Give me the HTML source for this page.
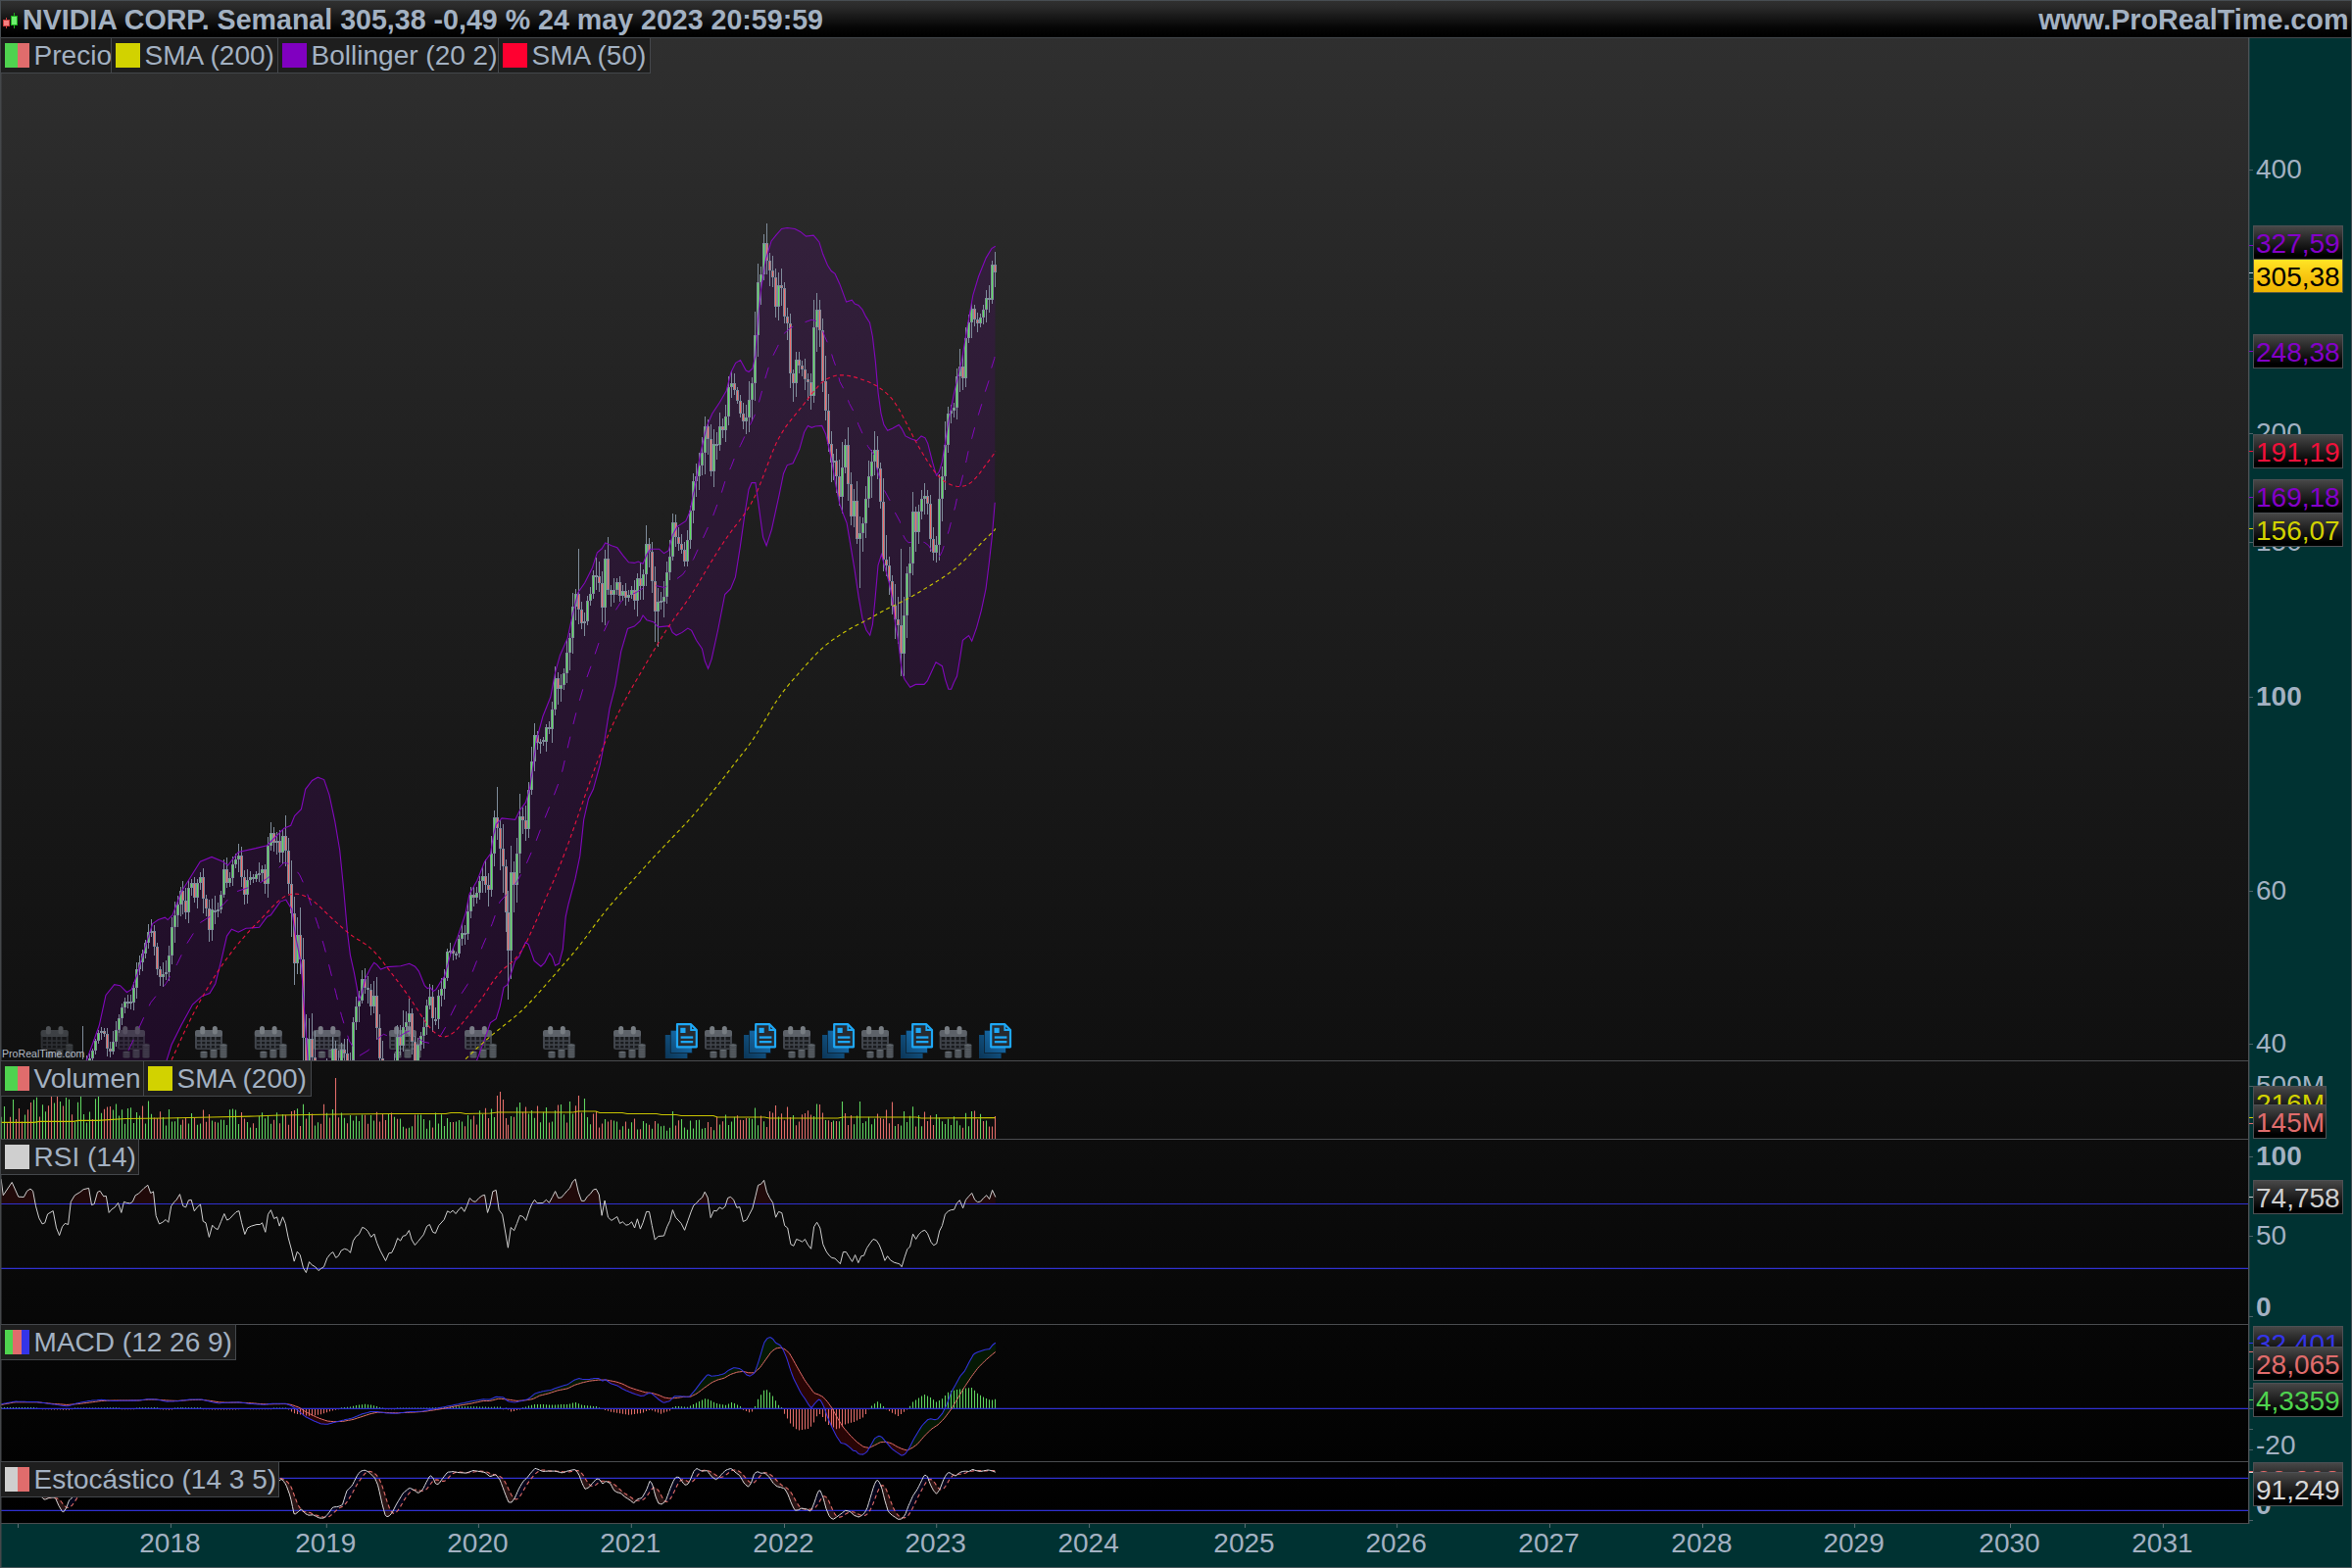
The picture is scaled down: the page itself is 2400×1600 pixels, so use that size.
<!DOCTYPE html>
<html><head><meta charset="utf-8"><title>NVIDIA CORP. Semanal</title>
<style>
html,body{margin:0;padding:0;background:#000;}
body{width:2400px;height:1600px;position:relative;overflow:hidden;font-family:"Liberation Sans",sans-serif;font-size:28px;color:#a3b1c2;}
div{position:absolute;box-sizing:border-box;white-space:nowrap;}
#title{left:0;top:0;width:2400px;height:38px;background:linear-gradient(#313131 0px,#2a2a2a 7px,#171717 18px,#060606 28px,#000 36px);font-weight:bold;line-height:38px;}
#plot{left:0;top:38px;width:2295px;height:1517px;background:linear-gradient(#2f2f2f,#1f1f1f 32%,#101010 68%,#000 100%);}
#yaxis{left:2295px;top:38px;width:105px;height:1562px;background:#003232;}
#xaxis{left:0;top:1555px;width:2400px;height:45px;background:#003232;}
.lg{height:37px;background:#1e1e1e;border:1px solid #44474b;line-height:34px;}
.lg i{position:absolute;top:5px;width:25px;height:25px;display:block;}
.lg span{position:absolute;top:1px;}
.ax{left:2302px;line-height:30px;height:30px;}
.bx{left:2299px;width:92px;height:35px;border:1px solid #4d5054;background:linear-gradient(#474747,#2a2a2a 35%,#000 88%);line-height:36px;padding-left:2px;}
.tk{left:2295px;width:5px;height:1.2px;}
.yr{top:1558px;width:80px;text-align:center;line-height:34px;}
</style></head><body>
<div id="plot"></div><div id="yaxis"></div><div id="xaxis"></div>
<div id="title"><span style="position:absolute;left:23px;top:1px;font-size:28.6px">NVIDIA CORP. Semanal 305,38 -0,49 % 24 may 2023 20:59:59</span><span style="position:absolute;right:3.5px;top:1px;font-size:28.75px">www.ProRealTime.com</span></div>
<svg width="24" height="34" style="position:absolute;left:0;top:0"><path d="M6.5 18V29" stroke="#c83c3c" stroke-width="1"/><path d="M14.5 13V29" stroke="#1cac1c" stroke-width="1"/><rect x="3.5" y="20.5" width="6" height="6" fill="#f58080" stroke="#c83c3c" stroke-width="1"/><rect x="11.5" y="16.5" width="6" height="9" fill="#6ef06e" stroke="#1cac1c" stroke-width="1"/></svg>
<div style="left:0;top:0;width:2400px;height:1px;background:#474d52"></div><div style="left:0;top:0;width:1px;height:38px;background:#474d52"></div><div style="left:2399px;top:0;width:1px;height:1600px;background:#474d52"></div><div style="left:0;top:38px;width:2400px;height:1px;background:#42474b"></div>
<svg width="2400" height="1600" viewBox="0 0 2400 1600" style="position:absolute;left:0;top:0"><defs>
<clipPath id="cm"><rect x="1" y="39" width="2293" height="1043"/></clipPath>
<clipPath id="cs"><rect x="1" y="1492" width="2293" height="62"/></clipPath>
<g id="cal">
<rect x="0" y="4" width="28" height="20" rx="2.5" fill="#4a4f57"/>
<rect x="0" y="4" width="28" height="7" rx="2.5" fill="#6b7179"/>
<rect x="2" y="11" width="24" height="11.5" fill="#1b1d21"/>
<g fill="#4a4f57"><rect x="2" y="14.3" width="24" height="1.6"/><rect x="2" y="18.3" width="24" height="1.6"/>
<rect x="5.6" y="11" width="1.6" height="11.5"/><rect x="10.4" y="11" width="1.6" height="11.5"/><rect x="15.2" y="11" width="1.6" height="11.5"/><rect x="20" y="11" width="1.6" height="11.5"/></g>
<rect x="5.2" y="0" width="5" height="8.5" rx="2.5" fill="#8a9097"/><rect x="17.8" y="0" width="5" height="8.5" rx="2.5" fill="#8a9097"/>
<g fill="#70777e" stroke="#33373c" stroke-width="0.6">
<ellipse cx="9" cy="31" rx="3.8" ry="1.6"/><ellipse cx="9" cy="29" rx="3.8" ry="1.6"/><ellipse cx="9" cy="27" rx="3.8" ry="1.6"/>
<ellipse cx="19" cy="31" rx="3.8" ry="1.6"/><ellipse cx="19" cy="29" rx="3.8" ry="1.6"/><ellipse cx="19" cy="27" rx="3.8" ry="1.6"/><ellipse cx="19" cy="25" rx="3.8" ry="1.6"/>
<ellipse cx="29" cy="31" rx="3.8" ry="1.6"/><ellipse cx="29" cy="29" rx="3.8" ry="1.6"/><ellipse cx="29" cy="27" rx="3.8" ry="1.6"/><ellipse cx="29" cy="25" rx="3.8" ry="1.6"/><ellipse cx="29" cy="23" rx="3.8" ry="1.6"/><ellipse cx="29" cy="21" rx="3.8" ry="1.6"/><ellipse cx="29" cy="19.5" rx="3.8" ry="1.6"/>
</g></g>
<linearGradient id="dg1" x1="1" y1="0" x2="0" y2="1"><stop offset="0" stop-color="#145f96"/><stop offset="1" stop-color="#0b3556"/></linearGradient>
<linearGradient id="dg2" x1="1" y1="0" x2="0" y2="1"><stop offset="0" stop-color="#1a78bd"/><stop offset="1" stop-color="#104b78"/></linearGradient>
<g id="doc">
<rect x="0" y="12" width="22.6" height="24" fill="url(#dg1)"/>
<rect x="5.4" y="7.3" width="22" height="23.3" fill="url(#dg2)" stroke="#0c1a26" stroke-width="0.7"/>
<path d="M12.2 1.2 H26.3 L32 7 V24.3 H12.2 Z" fill="#262a30" stroke="#1ea7f5" stroke-width="2.2" stroke-linejoin="round"/>
<path d="M26.3 1.2 V7 H32" fill="none" stroke="#1ea7f5" stroke-width="1.8"/>
<rect x="15.5" y="4.8" width="5.2" height="5.2" fill="#1ea7f5"/>
<rect x="15.8" y="13.4" width="12.6" height="2.3" fill="#1ea7f5"/><rect x="15.8" y="18" width="12.6" height="2.3" fill="#1ea7f5"/>
</g>
</defs>
<g clip-path="url(#cm)">
<path d="M60.0 1110.0 L75.0 1095.0 L88.5 1081.6 L101.2 1046.5 L108.0 1015.4 L116.7 1004.7 L122.6 1005.7 L129.4 1012.5 L134.2 1009.6 L140.1 994.0 L147.9 966.8 L155.6 942.5 L161.5 938.6 L168.3 936.2 L171.2 938.6 L176.1 933.7 L184.8 910.4 L194.6 894.8 L204.3 879.2 L216.0 874.4 L227.6 879.2 L232.5 883.1 L243.2 869.5 L260.7 865.6 L272.4 862.7 L282.1 853.0 L289.9 845.2 L296.7 842.3 L300.6 832.5 L307.4 825.7 L311.7 805.3 L318.5 796.5 L324.3 793.2 L330.7 795.6 L336.0 811.1 L341.8 838.4 L346.7 867.5 L350.6 906.5 L354.5 951.2 L357.4 974.6 L361.3 992.1 L364.2 1007.6 L366.1 1021.2 L369.1 1013.5 L373.0 997.9 L377.8 988.2 L381.7 982.3 L384.6 984.3 L388.5 989.1 L395.3 986.6 L408.9 985.8 L417.7 983.3 L423.5 986.2 L427.4 991.1 L433.3 1005.7 L436.2 1008.6 L439.1 1007.6 L442.0 1011.5 L444.9 1009.6 L450.8 999.8 L453.7 996.0 L459.5 974.6 L467.3 955.1 L475.1 931.8 L479.0 912.3 L486.8 898.7 L494.6 879.2 L500.4 871.4 L503.3 853.9 L506.2 841.3 L512.1 834.9 L519.8 835.8 L525.7 836.4 L530.5 826.7 L536.4 818.9 L540.3 805.3 L544.2 780.0 L547.1 756.3 L553.9 731.0 L561.7 711.5 L566.6 686.2 L571.4 668.7 L579.2 651.2 L584.1 627.9 L589.9 604.5 L596.7 594.8 L604.5 579.2 L609.4 563.7 L614.2 559.8 L617.7 553.9 L624.0 556.8 L629.8 558.8 L635.6 566.6 L641.5 573.8 L647.3 574.4 L651.2 573.0 L656.1 575.3 L660.0 565.6 L663.9 560.2 L672.6 560.2 L677.5 564.6 L682.3 561.7 L686.2 546.1 L691.1 537.4 L699.8 531.6 L703.7 522.8 L707.6 503.3 L708.6 500.0 L714.4 464.1 L721.0 435.4 L726.8 422.0 L734.4 410.5 L741.1 399.0 L745.9 379.9 L750.7 370.3 L755.5 367.4 L761.2 378.0 L764.1 379.5 L767.9 376.0 L770.8 362.6 L773.7 322.5 L776.5 295.7 L781.3 265.1 L787.1 245.9 L791.8 240.2 L797.6 233.5 L803.3 232.5 L811.0 233.5 L816.7 236.4 L822.5 241.1 L830.1 240.2 L835.9 246.9 L839.7 259.3 L844.5 270.8 L848.3 276.5 L852.1 279.4 L856.9 289.9 L863.6 308.1 L869.3 306.2 L872.2 310.0 L876.0 311.4 L879.9 315.8 L883.7 323.4 L887.5 329.2 L890.4 343.5 L893.3 368.4 L896.1 400.9 L899.0 422.0 L901.9 433.4 L905.7 439.2 L910.5 437.3 L917.2 433.4 L920.1 437.3 L923.9 444.9 L929.6 447.8 L935.4 449.7 L940.1 444.9 L944.0 446.8 L946.8 452.6 L951.6 471.7 L955.5 485.1 L958.3 481.3 L961.2 471.7 L964.1 454.5 L967.9 429.6 L973.6 400.9 L981.3 368.4 L987.0 333.9 L992.8 301.4 L998.5 282.3 L1006.2 263.1 L1011.9 253.6 L1015.7 251.3 L1015.2 512.7 L1012.4 546.6 L1009.2 575.3 L1006.0 600.8 L1001.3 623.1 L996.5 640.7 L991.7 654.2 L988.5 648.6 L982.4 653.4 L979.7 671.0 L976.5 690.1 L973.3 696.5 L970.6 703.2 L967.8 703.2 L964.6 693.3 L961.4 679.7 L955.0 675.7 L946.2 694.9 L943.0 698.4 L934.3 698.4 L928.7 701.3 L923.1 693.3 L920.7 686.9 L919.1 675.7 L916.7 655.0 L913.5 635.9 L910.4 610.4 L907.2 594.4 L902.4 576.9 L899.5 565.7 L896.0 576.9 L892.8 613.5 L890.4 637.5 L887.7 648.3 L884.0 643.0 L880.0 631.1 L876.1 608.8 L872.1 581.6 L867.3 552.9 L864.1 533.8 L860.9 525.8 L856.9 514.7 L852.9 495.5 L848.3 467.9 L842.6 443.0 L838.7 434.4 L832.0 435.0 L828.2 436.3 L824.4 434.4 L820.6 441.1 L815.8 458.3 L809.1 472.7 L803.3 474.6 L799.5 483.2 L795.4 503.6 L787.4 540.3 L782.1 556.8 L778.6 548.1 L773.8 513.1 L770.9 492.6 L767.0 492.6 L764.0 499.5 L760.2 522.8 L755.3 557.8 L750.4 588.9 L745.6 600.6 L739.7 606.5 L732.9 641.5 L726.1 672.6 L722.6 682.3 L719.3 674.6 L716.4 661.9 L710.5 653.2 L705.7 643.4 L701.8 641.1 L696.0 645.4 L690.1 648.3 L686.2 645.4 L683.3 638.6 L671.6 639.9 L666.8 634.7 L660.0 632.7 L656.1 627.9 L653.2 633.7 L647.3 639.1 L640.5 641.5 L633.7 664.8 L627.9 699.8 L622.0 723.2 L616.2 760.2 L612.3 780.0 L605.4 805.3 L600.6 815.0 L595.7 836.4 L591.8 873.4 L587.0 896.7 L580.2 922.0 L577.2 935.6 L574.3 968.7 L570.4 983.3 L566.5 985.3 L563.6 976.5 L560.7 972.6 L555.8 982.3 L551.9 986.2 L545.1 980.4 L539.3 963.9 L536.4 961.3 L529.6 976.5 L525.7 980.4 L517.9 1004.7 L514.0 1007.6 L510.1 1027.1 L506.2 1039.7 L500.4 1043.6 L494.6 1060.2 L486.8 1081.6 L460.0 1120.0 L420.0 1135.0 L380.0 1150.0 L345.0 1160.0 L320.0 1130.0 L314.2 1081.6 L311.3 1042.6 L307.4 984.3 L301.6 955.1 L297.7 927.9 L291.8 918.1 L286.0 920.1 L276.3 933.7 L272.4 935.6 L264.6 946.3 L251.0 947.3 L243.2 951.2 L236.4 948.3 L231.5 955.1 L225.7 980.4 L219.8 1003.7 L214.0 1013.5 L206.2 1016.4 L196.5 1025.1 L184.8 1046.5 L175.1 1066.0 L170.2 1081.6 L160.0 1110.0 L120.0 1160.0 L60.0 1200.0Z" fill="rgba(95,0,135,0.2)" stroke="none"/>
<use href="#cal" x="41.7" y="1047" opacity="0.50"/>
<use href="#cal" x="120.0" y="1047" opacity="0.50"/>
<use href="#cal" x="199.0" y="1047" opacity="0.85"/>
<use href="#cal" x="259.8" y="1047" opacity="0.85"/>
<use href="#cal" x="319.5" y="1047" opacity="0.85"/>
<use href="#cal" x="397.0" y="1047" opacity="0.85"/>
<use href="#cal" x="474.0" y="1047" opacity="0.85"/>
<use href="#cal" x="554.0" y="1047" opacity="0.85"/>
<use href="#cal" x="626.0" y="1047" opacity="0.85"/>
<use href="#cal" x="719.0" y="1047" opacity="0.85"/>
<use href="#cal" x="799.0" y="1047" opacity="0.85"/>
<use href="#cal" x="879.0" y="1047" opacity="0.85"/>
<use href="#cal" x="958.7" y="1047" opacity="0.85"/>
<use href="#doc" x="678.8" y="1044"/>
<use href="#doc" x="759.0" y="1044"/>
<use href="#doc" x="839.0" y="1044"/>
<use href="#doc" x="919.0" y="1044"/>
<use href="#doc" x="999.0" y="1044"/>
<path d="M85.5 1085V1096M88.5 1077V1091M91.5 1075V1087M94.5 1070V1084M97.5 1060V1076M100.5 1051V1065M103.5 1048V1061M106.5 1049V1058M109.5 1049V1078M112.5 1063V1079M115.5 1052V1076M118.5 1042V1068M121.5 1035V1054M124.5 1024V1046M127.5 1018V1034M130.5 1015V1029M133.5 1015V1030M136.5 1002V1031M139.5 982V1019M142.5 975V995M145.5 969V991M148.5 959V978M151.5 943V968M154.5 938V956M157.5 944V975M160.5 962V995M163.5 986V1006M166.5 982V1007M169.5 980V1000M172.5 965V1001M175.5 936V984M178.5 920V962M181.5 914V946M184.5 905V935M186.5 899V933M189.5 906V938M192.5 898V942M195.5 897V914M198.5 895V921M201.5 897V927M204.5 890V908M207.5 886V932M210.5 913V935M213.5 918V961M216.5 917V960M219.5 914V943M222.5 921V936M225.5 909V932M228.5 877V916M231.5 875V906M234.5 890V905M237.5 874V904M240.5 871V886M243.5 861V890M246.5 864V905M249.5 888V923M252.5 887V922M255.5 889V903M258.5 892V901M261.5 889V900M264.5 880V900M267.5 883V900M270.5 882V912M273.5 854V916M276.5 839V868M279.5 844V869M282.5 849V872M285.5 847V880M288.5 847V882M291.5 832V884M294.5 855V912M297.5 878V956M300.5 915V1005M303.5 936V994M306.5 926V994M309.5 957V1087M312.5 1035V1119M315.5 1039V1114M318.5 1034V1097M321.5 1052V1143M324.5 1093V1145M327.5 1089V1135M330.5 1096V1134M333.5 1080V1114M336.5 1087V1102M339.5 1058V1101M342.5 1062V1096M345.5 1072V1101M348.5 1064V1094M351.5 1060V1083M354.5 1060V1103M357.5 1074V1104M360.5 1038V1088M363.5 1017V1051M366.5 1011V1043M369.5 990V1024M372.5 988V1014M375.5 996V1024M378.5 1004V1036M381.5 1001V1034M384.5 997V1061M387.5 1035V1086M390.5 1062V1112M393.5 1087V1123M396.5 1098V1115M399.5 1087V1116M402.5 1075V1122M405.5 1046V1099M408.5 1046V1077M411.5 1031V1073M414.5 1032V1052M417.5 1019V1057M420.5 1029V1076M423.5 1057V1099M426.5 1059V1100M429.5 1053V1072M432.5 1038V1070M435.5 1020V1056M438.5 1004V1030M441.5 1005V1053M444.5 1028V1046M447.5 1010V1050M450.5 998V1027M453.5 989V1020M456.5 968V1001M459.5 962V976M462.5 967V980M465.5 971V979M468.5 954V977M471.5 942V965M474.5 944V964M477.5 920V959M480.5 905V937M483.5 905V925M486.5 905V922M489.5 894V918M492.5 884V911M495.5 877V911M498.5 891V925M501.5 853V915M504.5 827V884M507.5 803V857M510.5 837V888M513.5 841V911M516.5 877V951M518.5 909V1020M521.5 863V999M524.5 879V931M527.5 855V921M530.5 810V891M533.5 824V851M536.5 822V858M539.5 798V855M542.5 762V811M545.5 738V787M548.5 746V765M551.5 754V769M554.5 752V761M557.5 739V767M560.5 736V749M563.5 716V758M566.5 680V730M569.5 686V719M572.5 688V716M575.5 682V704M578.5 653V697M581.5 646V684M584.5 605V667M587.5 601V633M590.5 560V637M593.5 614V642M596.5 625V649M599.5 608V638M602.5 599V618M605.5 582V611M608.5 569V602M611.5 573V604M614.5 583V635M617.5 561V638M620.5 548V607M623.5 597V619M626.5 590V615M629.5 590V607M632.5 588V614M635.5 597V613M638.5 595V618M641.5 602V614M644.5 598V611M647.5 592V622M650.5 585V629M653.5 574V612M656.5 581V612M659.5 536V598M662.5 549V579M665.5 553V605M668.5 578V655M671.5 600V660M674.5 604V622M677.5 593V630M680.5 573V616M683.5 551V592M686.5 524V572M689.5 525V558M692.5 538V562M695.5 545V565M698.5 553V578M701.5 541V578M704.5 516V560M707.5 483V534M710.5 473V507M713.5 462V500M716.5 446V485M719.5 425V484M722.5 428V464M725.5 433V486M728.5 438V497M731.5 441V469M734.5 421V460M737.5 427V447M740.5 413V451M743.5 384V434M746.5 378V406M749.5 381V403M752.5 395V412M755.5 403V426M758.5 411V438M761.5 413V443M764.5 389V441M767.5 385V430M770.5 318V409M773.5 269V364M776.5 272V311M779.5 239V286M782.5 228V280M785.5 258V292M788.5 261V293M791.5 274V324M794.5 278V327M797.5 274V312M800.5 288V330M803.5 314V347M806.5 320V396M809.5 377V410M812.5 359V405M815.5 359V381M818.5 368V384M821.5 366V398M824.5 381V409M827.5 381V418M830.5 306V411M833.5 299V359M836.5 306V354M839.5 325V400M842.5 363V429M845.5 402V461M848.5 440V492M850.5 463V490M853.5 458V503M856.5 469V516M859.5 451V524M862.5 448V483M865.5 436V511M868.5 482V536M871.5 499V538M874.5 491V555M877.5 527V600M880.5 528V563M883.5 496V549M886.5 470V518M889.5 459V508M892.5 440V485M895.5 445V489M898.5 472V519M901.5 488V583M904.5 546V588M907.5 568V607M910.5 587V627M913.5 596V652M916.5 609V657M919.5 560V690M922.5 609V690M925.5 578V651M928.5 558V609M931.5 502V587M934.5 517V563M937.5 515V555M940.5 500V530M943.5 493V525M946.5 500V525M949.5 505V563M952.5 538V572M955.5 547V574M958.5 484V572M961.5 476V532M964.5 430V500M967.5 415V462M970.5 413V432M973.5 411V426M976.5 376V428M979.5 356V400M982.5 362V398M985.5 334V395M988.5 321V350M991.5 308V345M994.5 311V333M997.5 319V339M1000.5 320V334M1003.5 311V331M1006.5 296V329M1009.5 291V319M1012.5 266V310M1015.5 257V293M84.5 1047V1081" stroke="#7f8c9a" stroke-width="1" fill="none"/>
<path d="M84.0 1088h3V1093h-3ZM87.0 1083h3V1088h-3ZM90.0 1080h3V1083h-3ZM93.0 1072h3V1080h-3ZM96.0 1062h3V1072h-3ZM99.0 1054h3V1062h-3ZM102.0 1052h3V1054h-3ZM105.0 1052h3V1055h-3ZM108.0 1055h3V1070h-3ZM111.0 1070h3V1073h-3ZM114.0 1063h3V1073h-3ZM117.0 1051h3V1063h-3ZM120.0 1039h3V1051h-3ZM123.0 1028h3V1039h-3ZM126.0 1022h3V1028h-3ZM129.0 1022h3V1024h-3ZM132.0 1022h3V1024h-3ZM135.0 1008h3V1023h-3ZM138.0 989h3V1008h-3ZM141.0 982h3V989h-3ZM144.0 973h3V982h-3ZM147.0 962h3V973h-3ZM150.0 951h3V962h-3ZM153.0 950h3V952h-3ZM156.0 950h3V966h-3ZM159.0 966h3V989h-3ZM162.0 989h3V997h-3ZM165.0 994h3V997h-3ZM168.0 992h3V994h-3ZM171.0 975h3V992h-3ZM174.0 946h3V975h-3ZM177.0 934h3V946h-3ZM180.0 923h3V934h-3ZM183.0 909h3V923h-3ZM185.0 909h3V919h-3ZM188.0 919h3V931h-3ZM191.0 906h3V931h-3ZM194.0 901h3V906h-3ZM197.0 901h3V916h-3ZM200.0 901h3V916h-3ZM203.0 895h3V901h-3ZM206.0 895h3V917h-3ZM209.0 917h3V927h-3ZM212.0 927h3V949h-3ZM215.0 928h3V949h-3ZM218.0 929h3V931h-3ZM221.0 928h3V930h-3ZM224.0 913h3V928h-3ZM227.0 887h3V913h-3ZM230.0 887h3V901h-3ZM233.0 896h3V901h-3ZM236.0 882h3V896h-3ZM239.0 877h3V882h-3ZM242.0 873h3V877h-3ZM245.0 873h3V895h-3ZM248.0 895h3V913h-3ZM251.0 898h3V913h-3ZM254.0 895h3V898h-3ZM257.0 895h3V897h-3ZM260.0 892h3V897h-3ZM263.0 891h3V893h-3ZM266.0 887h3V891h-3ZM269.0 887h3V902h-3ZM272.0 863h3V902h-3ZM275.0 850h3V863h-3ZM278.0 850h3V860h-3ZM281.0 858h3V860h-3ZM284.0 858h3V870h-3ZM287.0 853h3V870h-3ZM290.0 853h3V868h-3ZM293.0 868h3V902h-3ZM296.0 902h3V932h-3ZM299.0 932h3V983h-3ZM302.0 954h3V983h-3ZM305.0 954h3V979h-3ZM308.0 979h3V1059h-3ZM311.0 1059h3V1106h-3ZM314.0 1060h3V1106h-3ZM317.0 1060h3V1079h-3ZM320.0 1079h3V1129h-3ZM323.0 1102h3V1129h-3ZM326.0 1102h3V1120h-3ZM329.0 1108h3V1120h-3ZM332.0 1093h3V1108h-3ZM335.0 1093h3V1095h-3ZM338.0 1070h3V1095h-3ZM341.0 1070h3V1086h-3ZM344.0 1086h3V1089h-3ZM347.0 1071h3V1089h-3ZM350.0 1071h3V1075h-3ZM353.0 1075h3V1089h-3ZM356.0 1082h3V1089h-3ZM359.0 1043h3V1082h-3ZM362.0 1027h3V1043h-3ZM365.0 1021h3V1027h-3ZM368.0 999h3V1021h-3ZM371.0 999h3V1008h-3ZM374.0 1008h3V1010h-3ZM377.0 1010h3V1027h-3ZM380.0 1016h3V1027h-3ZM383.0 1016h3V1049h-3ZM386.0 1049h3V1080h-3ZM389.0 1080h3V1097h-3ZM392.0 1097h3V1109h-3ZM395.0 1103h3V1109h-3ZM398.0 1103h3V1112h-3ZM401.0 1087h3V1112h-3ZM404.0 1058h3V1087h-3ZM407.0 1058h3V1067h-3ZM410.0 1048h3V1067h-3ZM413.0 1043h3V1048h-3ZM416.0 1034h3V1043h-3ZM419.0 1034h3V1063h-3ZM422.0 1063h3V1083h-3ZM425.0 1066h3V1083h-3ZM428.0 1057h3V1066h-3ZM431.0 1048h3V1057h-3ZM434.0 1026h3V1048h-3ZM437.0 1017h3V1026h-3ZM440.0 1017h3V1039h-3ZM443.0 1040h3V1042h-3ZM446.0 1016h3V1040h-3ZM449.0 1009h3V1016h-3ZM452.0 998h3V1009h-3ZM455.0 971h3V998h-3ZM458.0 970h3V972h-3ZM461.0 970h3V973h-3ZM464.0 973h3V975h-3ZM467.0 958h3V973h-3ZM470.0 952h3V958h-3ZM473.0 952h3V954h-3ZM476.0 930h3V953h-3ZM479.0 913h3V930h-3ZM482.0 913h3V916h-3ZM485.0 911h3V916h-3ZM488.0 899h3V911h-3ZM491.0 894h3V899h-3ZM494.0 894h3V903h-3ZM497.0 903h3V908h-3ZM500.0 871h3V908h-3ZM503.0 834h3V871h-3ZM506.0 834h3V845h-3ZM509.0 845h3V866h-3ZM512.0 866h3V884h-3ZM515.0 884h3V931h-3ZM517.0 931h3V970h-3ZM520.0 890h3V970h-3ZM523.0 890h3V903h-3ZM526.0 871h3V903h-3ZM529.0 833h3V871h-3ZM532.0 833h3V837h-3ZM535.0 837h3V846h-3ZM538.0 806h3V846h-3ZM541.0 777h3V806h-3ZM544.0 750h3V777h-3ZM547.0 750h3V758h-3ZM550.0 757h3V759h-3ZM553.0 755h3V757h-3ZM556.0 742h3V757h-3ZM559.0 742h3V744h-3ZM562.0 724h3V744h-3ZM565.0 692h3V724h-3ZM568.0 692h3V703h-3ZM571.0 699h3V703h-3ZM574.0 687h3V699h-3ZM577.0 666h3V687h-3ZM580.0 651h3V666h-3ZM583.0 619h3V651h-3ZM586.0 606h3V619h-3ZM589.0 606h3V622h-3ZM592.0 622h3V636h-3ZM595.0 634h3V636h-3ZM598.0 613h3V634h-3ZM601.0 606h3V613h-3ZM604.0 587h3V606h-3ZM607.0 587h3V589h-3ZM610.0 588h3V595h-3ZM613.0 595h3V620h-3ZM616.0 570h3V620h-3ZM619.0 570h3V602h-3ZM622.0 602h3V607h-3ZM625.0 602h3V607h-3ZM628.0 594h3V602h-3ZM631.0 594h3V608h-3ZM634.0 603h3V608h-3ZM637.0 603h3V610h-3ZM640.0 607h3V610h-3ZM643.0 602h3V607h-3ZM646.0 602h3V613h-3ZM649.0 590h3V613h-3ZM652.0 590h3V598h-3ZM655.0 586h3V598h-3ZM658.0 555h3V586h-3ZM661.0 555h3V563h-3ZM664.0 563h3V593h-3ZM667.0 593h3V624h-3ZM670.0 614h3V624h-3ZM673.0 613h3V615h-3ZM676.0 609h3V614h-3ZM679.0 584h3V609h-3ZM682.0 568h3V584h-3ZM685.0 533h3V568h-3ZM688.0 533h3V548h-3ZM691.0 548h3V555h-3ZM694.0 555h3V561h-3ZM697.0 561h3V573h-3ZM700.0 551h3V573h-3ZM703.0 521h3V551h-3ZM706.0 491h3V521h-3ZM709.0 486h3V491h-3ZM712.0 475h3V486h-3ZM715.0 462h3V475h-3ZM718.0 435h3V462h-3ZM721.0 435h3V448h-3ZM724.0 448h3V481h-3ZM727.0 453h3V481h-3ZM730.0 453h3V455h-3ZM733.0 435h3V454h-3ZM736.0 435h3V439h-3ZM739.0 425h3V439h-3ZM742.0 395h3V425h-3ZM745.0 391h3V395h-3ZM748.0 391h3V398h-3ZM751.0 398h3V409h-3ZM754.0 409h3V422h-3ZM757.0 422h3V430h-3ZM760.0 426h3V430h-3ZM763.0 408h3V426h-3ZM766.0 391h3V408h-3ZM769.0 342h3V391h-3ZM772.0 288h3V342h-3ZM775.0 280h3V288h-3ZM778.0 248h3V280h-3ZM781.0 248h3V266h-3ZM784.0 266h3V276h-3ZM787.0 276h3V283h-3ZM790.0 283h3V313h-3ZM793.0 291h3V313h-3ZM796.0 291h3V294h-3ZM799.0 294h3V323h-3ZM802.0 323h3V330h-3ZM805.0 330h3V381h-3ZM808.0 381h3V391h-3ZM811.0 367h3V391h-3ZM814.0 367h3V373h-3ZM817.0 373h3V377h-3ZM820.0 377h3V387h-3ZM823.0 387h3V390h-3ZM826.0 390h3V404h-3ZM829.0 334h3V404h-3ZM832.0 316h3V334h-3ZM835.0 316h3V337h-3ZM838.0 337h3V389h-3ZM841.0 389h3V419h-3ZM844.0 419h3V453h-3ZM847.0 453h3V472h-3ZM849.0 470h3V472h-3ZM852.0 470h3V486h-3ZM855.0 486h3V507h-3ZM858.0 477h3V507h-3ZM861.0 454h3V477h-3ZM864.0 454h3V494h-3ZM867.0 494h3V527h-3ZM870.0 511h3V527h-3ZM873.0 511h3V550h-3ZM876.0 544h3V550h-3ZM879.0 534h3V544h-3ZM882.0 509h3V534h-3ZM885.0 486h3V509h-3ZM888.0 471h3V486h-3ZM891.0 459h3V471h-3ZM894.0 459h3V478h-3ZM897.0 478h3V512h-3ZM900.0 512h3V571h-3ZM903.0 571h3V577h-3ZM906.0 577h3V593h-3ZM909.0 593h3V618h-3ZM912.0 618h3V632h-3ZM915.0 632h3V638h-3ZM918.0 638h3V667h-3ZM921.0 628h3V667h-3ZM924.0 585h3V628h-3ZM927.0 575h3V585h-3ZM930.0 522h3V575h-3ZM933.0 522h3V543h-3ZM936.0 522h3V543h-3ZM939.0 509h3V522h-3ZM942.0 506h3V509h-3ZM945.0 506h3V514h-3ZM948.0 514h3V550h-3ZM951.0 550h3V564h-3ZM954.0 556h3V564h-3ZM957.0 509h3V556h-3ZM960.0 486h3V509h-3ZM963.0 454h3V486h-3ZM966.0 422h3V454h-3ZM969.0 419h3V422h-3ZM972.0 416h3V419h-3ZM975.0 384h3V416h-3ZM978.0 374h3V384h-3ZM981.0 374h3V386h-3ZM984.0 345h3V386h-3ZM987.0 329h3V345h-3ZM990.0 315h3V329h-3ZM993.0 315h3V326h-3ZM996.0 326h3V330h-3ZM999.0 324h3V330h-3ZM1002.0 316h3V324h-3ZM1005.0 304h3V316h-3ZM1008.0 304h3V306h-3ZM1011.0 270h3V306h-3ZM1014.0 270h3V278h-3Z" fill="#7f8c9a"/>
<path d="M85.5 1089V1092M88.5 1084V1087M91.5 1081V1082M94.5 1073V1079M97.5 1063V1071M100.5 1055V1061M115.5 1064V1072M118.5 1052V1062M121.5 1040V1050M124.5 1029V1038M127.5 1023V1027M136.5 1009V1022M139.5 990V1007M142.5 983V988M145.5 974V981M148.5 963V972M151.5 952V961M166.5 995V996M172.5 976V991M175.5 947V974M178.5 935V945M181.5 924V933M184.5 910V922M192.5 907V930M195.5 902V905M201.5 902V915M204.5 896V900M216.5 929V948M225.5 914V927M228.5 888V912M234.5 897V900M237.5 883V895M240.5 878V881M243.5 874V876M252.5 899V912M255.5 896V897M261.5 893V896M267.5 888V890M273.5 864V901M276.5 851V862M288.5 854V869M303.5 955V982M315.5 1061V1105M324.5 1103V1128M330.5 1109V1119M333.5 1094V1107M339.5 1071V1094M348.5 1072V1088M357.5 1083V1088M360.5 1044V1081M363.5 1028V1042M366.5 1022V1026M369.5 1000V1020M381.5 1017V1026M396.5 1104V1108M402.5 1088V1111M405.5 1059V1086M411.5 1049V1066M414.5 1044V1047M417.5 1035V1042M426.5 1067V1082M429.5 1058V1065M432.5 1049V1056M435.5 1027V1047M438.5 1018V1025M447.5 1017V1039M450.5 1010V1015M453.5 999V1008M456.5 972V997M468.5 959V972M471.5 953V957M477.5 931V952M480.5 914V929M486.5 912V915M489.5 900V910M492.5 895V898M501.5 872V907M504.5 835V870M521.5 891V969M527.5 872V902M530.5 834V870M539.5 807V845M542.5 778V805M545.5 751V776M557.5 743V756M563.5 725V743M566.5 693V723M572.5 700V702M575.5 688V698M578.5 667V686M581.5 652V665M584.5 620V650M587.5 607V618M599.5 614V633M602.5 607V612M605.5 588V605M617.5 571V619M626.5 603V606M629.5 595V601M635.5 604V607M641.5 608V609M644.5 603V606M650.5 591V612M656.5 587V597M659.5 556V585M671.5 615V623M677.5 610V613M680.5 585V608M683.5 569V583M686.5 534V567M701.5 552V572M704.5 522V550M707.5 492V520M710.5 487V490M713.5 476V485M716.5 463V474M719.5 436V461M728.5 454V480M734.5 436V453M740.5 426V438M743.5 396V424M746.5 392V394M761.5 427V429M764.5 409V425M767.5 392V407M770.5 343V390M773.5 289V341M776.5 281V287M779.5 249V279M794.5 292V312M812.5 368V390M830.5 335V403M833.5 317V333M859.5 478V506M862.5 455V476M871.5 512V526M877.5 545V549M880.5 535V543M883.5 510V533M886.5 487V508M889.5 472V485M892.5 460V470M922.5 629V666M925.5 586V627M928.5 576V584M931.5 523V574M937.5 523V542M940.5 510V521M943.5 507V508M955.5 557V563M958.5 510V555M961.5 487V508M964.5 455V485M967.5 423V453M970.5 420V421M973.5 417V418M976.5 385V415M979.5 375V383M985.5 346V385M988.5 330V344M991.5 316V328M1000.5 325V329M1003.5 317V323M1006.5 305V315M1012.5 271V305" stroke="#5be05b" stroke-width="1" fill="none"/>
<path d="M106.5 1053V1054M109.5 1056V1069M112.5 1071V1072M157.5 951V965M160.5 967V988M163.5 990V996M186.5 910V918M189.5 920V930M198.5 902V915M207.5 896V916M210.5 918V926M213.5 928V948M231.5 888V900M246.5 874V894M249.5 896V912M270.5 888V901M279.5 851V859M285.5 859V869M291.5 854V867M294.5 869V901M297.5 903V931M300.5 933V982M306.5 955V978M309.5 980V1058M312.5 1060V1105M318.5 1061V1078M321.5 1080V1128M327.5 1103V1119M342.5 1071V1085M345.5 1087V1088M351.5 1072V1074M354.5 1076V1088M372.5 1000V1007M378.5 1011V1026M384.5 1017V1048M387.5 1050V1079M390.5 1081V1096M393.5 1098V1108M399.5 1104V1111M408.5 1059V1066M420.5 1035V1062M423.5 1064V1082M441.5 1018V1038M462.5 971V972M483.5 914V915M495.5 895V902M498.5 904V907M507.5 835V844M510.5 846V865M513.5 867V883M516.5 885V930M518.5 932V969M524.5 891V902M533.5 834V836M536.5 838V845M548.5 751V757M569.5 693V702M590.5 607V621M593.5 623V635M611.5 589V594M614.5 596V619M620.5 571V601M623.5 603V606M632.5 595V607M638.5 604V609M647.5 603V612M653.5 591V597M662.5 556V562M665.5 564V592M668.5 594V623M689.5 534V547M692.5 549V554M695.5 556V560M698.5 562V572M722.5 436V447M725.5 449V480M737.5 436V438M749.5 392V397M752.5 399V408M755.5 410V421M758.5 423V429M782.5 249V265M785.5 267V275M788.5 277V282M791.5 284V312M797.5 292V293M800.5 295V322M803.5 324V329M806.5 331V380M809.5 382V390M815.5 368V372M818.5 374V376M821.5 378V386M824.5 388V389M827.5 391V403M836.5 317V336M839.5 338V388M842.5 390V418M845.5 420V452M848.5 454V471M853.5 471V485M856.5 487V506M865.5 455V493M868.5 495V526M874.5 512V549M895.5 460V477M898.5 479V511M901.5 513V570M904.5 572V576M907.5 578V592M910.5 594V617M913.5 619V631M916.5 633V637M919.5 639V666M934.5 523V542M946.5 507V513M949.5 515V549M952.5 551V563M982.5 375V385M994.5 316V325M997.5 327V329M1015.5 271V277" stroke="#f26a6a" stroke-width="1" fill="none"/>
<path d="M60.0 1110.0 L75.0 1095.0 L88.5 1081.6 L101.2 1046.5 L108.0 1015.4 L116.7 1004.7 L122.6 1005.7 L129.4 1012.5 L134.2 1009.6 L140.1 994.0 L147.9 966.8 L155.6 942.5 L161.5 938.6 L168.3 936.2 L171.2 938.6 L176.1 933.7 L184.8 910.4 L194.6 894.8 L204.3 879.2 L216.0 874.4 L227.6 879.2 L232.5 883.1 L243.2 869.5 L260.7 865.6 L272.4 862.7 L282.1 853.0 L289.9 845.2 L296.7 842.3 L300.6 832.5 L307.4 825.7 L311.7 805.3 L318.5 796.5 L324.3 793.2 L330.7 795.6 L336.0 811.1 L341.8 838.4 L346.7 867.5 L350.6 906.5 L354.5 951.2 L357.4 974.6 L361.3 992.1 L364.2 1007.6 L366.1 1021.2 L369.1 1013.5 L373.0 997.9 L377.8 988.2 L381.7 982.3 L384.6 984.3 L388.5 989.1 L395.3 986.6 L408.9 985.8 L417.7 983.3 L423.5 986.2 L427.4 991.1 L433.3 1005.7 L436.2 1008.6 L439.1 1007.6 L442.0 1011.5 L444.9 1009.6 L450.8 999.8 L453.7 996.0 L459.5 974.6 L467.3 955.1 L475.1 931.8 L479.0 912.3 L486.8 898.7 L494.6 879.2 L500.4 871.4 L503.3 853.9 L506.2 841.3 L512.1 834.9 L519.8 835.8 L525.7 836.4 L530.5 826.7 L536.4 818.9 L540.3 805.3 L544.2 780.0 L547.1 756.3 L553.9 731.0 L561.7 711.5 L566.6 686.2 L571.4 668.7 L579.2 651.2 L584.1 627.9 L589.9 604.5 L596.7 594.8 L604.5 579.2 L609.4 563.7 L614.2 559.8 L617.7 553.9 L624.0 556.8 L629.8 558.8 L635.6 566.6 L641.5 573.8 L647.3 574.4 L651.2 573.0 L656.1 575.3 L660.0 565.6 L663.9 560.2 L672.6 560.2 L677.5 564.6 L682.3 561.7 L686.2 546.1 L691.1 537.4 L699.8 531.6 L703.7 522.8 L707.6 503.3 L708.6 500.0 L714.4 464.1 L721.0 435.4 L726.8 422.0 L734.4 410.5 L741.1 399.0 L745.9 379.9 L750.7 370.3 L755.5 367.4 L761.2 378.0 L764.1 379.5 L767.9 376.0 L770.8 362.6 L773.7 322.5 L776.5 295.7 L781.3 265.1 L787.1 245.9 L791.8 240.2 L797.6 233.5 L803.3 232.5 L811.0 233.5 L816.7 236.4 L822.5 241.1 L830.1 240.2 L835.9 246.9 L839.7 259.3 L844.5 270.8 L848.3 276.5 L852.1 279.4 L856.9 289.9 L863.6 308.1 L869.3 306.2 L872.2 310.0 L876.0 311.4 L879.9 315.8 L883.7 323.4 L887.5 329.2 L890.4 343.5 L893.3 368.4 L896.1 400.9 L899.0 422.0 L901.9 433.4 L905.7 439.2 L910.5 437.3 L917.2 433.4 L920.1 437.3 L923.9 444.9 L929.6 447.8 L935.4 449.7 L940.1 444.9 L944.0 446.8 L946.8 452.6 L951.6 471.7 L955.5 485.1 L958.3 481.3 L961.2 471.7 L964.1 454.5 L967.9 429.6 L973.6 400.9 L981.3 368.4 L987.0 333.9 L992.8 301.4 L998.5 282.3 L1006.2 263.1 L1011.9 253.6 L1015.7 251.3" fill="none" stroke="#8208bc" stroke-width="1.1"/>
<path d="M60.0 1200.0 L120.0 1160.0 L160.0 1110.0 L170.2 1081.6 L175.1 1066.0 L184.8 1046.5 L196.5 1025.1 L206.2 1016.4 L214.0 1013.5 L219.8 1003.7 L225.7 980.4 L231.5 955.1 L236.4 948.3 L243.2 951.2 L251.0 947.3 L264.6 946.3 L272.4 935.6 L276.3 933.7 L286.0 920.1 L291.8 918.1 L297.7 927.9 L301.6 955.1 L307.4 984.3 L311.3 1042.6 L314.2 1081.6 L320.0 1130.0 L345.0 1160.0 L380.0 1150.0 L420.0 1135.0 L460.0 1120.0 L486.8 1081.6 L494.6 1060.2 L500.4 1043.6 L506.2 1039.7 L510.1 1027.1 L514.0 1007.6 L517.9 1004.7 L525.7 980.4 L529.6 976.5 L536.4 961.3 L539.3 963.9 L545.1 980.4 L551.9 986.2 L555.8 982.3 L560.7 972.6 L563.6 976.5 L566.5 985.3 L570.4 983.3 L574.3 968.7 L577.2 935.6 L580.2 922.0 L587.0 896.7 L591.8 873.4 L595.7 836.4 L600.6 815.0 L605.4 805.3 L612.3 780.0 L616.2 760.2 L622.0 723.2 L627.9 699.8 L633.7 664.8 L640.5 641.5 L647.3 639.1 L653.2 633.7 L656.1 627.9 L660.0 632.7 L666.8 634.7 L671.6 639.9 L683.3 638.6 L686.2 645.4 L690.1 648.3 L696.0 645.4 L701.8 641.1 L705.7 643.4 L710.5 653.2 L716.4 661.9 L719.3 674.6 L722.6 682.3 L726.1 672.6 L732.9 641.5 L739.7 606.5 L745.6 600.6 L750.4 588.9 L755.3 557.8 L760.2 522.8 L764.0 499.5 L767.0 492.6 L770.9 492.6 L773.8 513.1 L778.6 548.1 L782.1 556.8 L787.4 540.3 L795.4 503.6 L799.5 483.2 L803.3 474.6 L809.1 472.7 L815.8 458.3 L820.6 441.1 L824.4 434.4 L828.2 436.3 L832.0 435.0 L838.7 434.4 L842.6 443.0 L848.3 467.9 L852.9 495.5 L856.9 514.7 L860.9 525.8 L864.1 533.8 L867.3 552.9 L872.1 581.6 L876.1 608.8 L880.0 631.1 L884.0 643.0 L887.7 648.3 L890.4 637.5 L892.8 613.5 L896.0 576.9 L899.5 565.7 L902.4 576.9 L907.2 594.4 L910.4 610.4 L913.5 635.9 L916.7 655.0 L919.1 675.7 L920.7 686.9 L923.1 693.3 L928.7 701.3 L934.3 698.4 L943.0 698.4 L946.2 694.9 L955.0 675.7 L961.4 679.7 L964.6 693.3 L967.8 703.2 L970.6 703.2 L973.3 696.5 L976.5 690.1 L979.7 671.0 L982.4 653.4 L988.5 648.6 L991.7 654.2 L996.5 640.7 L1001.3 623.1 L1006.0 600.8 L1009.2 575.3 L1012.4 546.6 L1015.2 512.7" fill="none" stroke="#8208bc" stroke-width="1.1"/>
<path d="M100.0 1140.0 L128.4 1077.7 L153.7 1023.2 L169.3 1003.7 L180.9 983.3 L190.7 962.9 L204.3 941.5 L219.8 931.8 L239.3 910.4 L251.0 906.5 L260.7 903.5 L272.4 896.7 L280.2 889.9 L289.9 880.2 L297.7 882.1 L305.8 892.8 L310.7 903.5 L324.3 943.4 L331.1 966.8 L337.0 990.1 L342.8 1013.5 L348.6 1036.8 L356.4 1062.1 L366.1 1077.7 L375.9 1071.8 L382.7 1062.1 L391.4 1055.3 L401.2 1059.2 L408.0 1057.2 L412.8 1054.3 L418.7 1051.4 L421.6 1054.3 L426.5 1059.2 L432.3 1063.1 L441.1 1065.0 L449.8 1056.3 L455.6 1046.5 L460.5 1034.9 L465.4 1025.1 L471.2 1013.5 L477.0 1004.7 L483.9 987.2 L492.6 964.8 L502.3 942.5 L510.1 920.1 L521.8 907.4 L527.6 899.6 L536.4 883.1 L546.1 860.7 L554.9 837.4 L563.6 816.0 L572.4 792.6 L576.3 775.7 L583.1 746.5 L588.9 723.2 L595.8 699.8 L603.5 678.4 L611.3 655.1 L621.1 633.7 L633.7 614.2 L637.6 609.4 L649.3 604.5 L657.0 599.6 L669.7 597.7 L678.4 599.6 L689.1 591.9 L696.9 586.0 L707.6 570.5 L717.4 549.1 L727.1 527.7 L735.8 504.3 L741.1 487.0 L745.9 476.5 L750.7 464.1 L755.5 454.5 L771.8 420.1 L777.5 399.0 L780.4 387.5 L784.2 375.1 L788.0 364.6 L793.8 353.1 L797.6 342.6 L806.2 334.9 L811.0 332.4 L815.8 330.7 L828.2 326.3 L833.9 327.8 L837.8 333.0 L841.6 343.5 L846.4 354.0 L850.2 366.5 L854.0 377.0 L856.9 389.4 L862.6 400.0 L866.5 411.4 L872.2 422.0 L876.0 433.4 L880.8 444.0 L885.6 455.5 L891.4 463.1 L894.4 477.2 L897.6 487.5 L902.4 500.3 L908.0 510.7 L912.7 521.8 L918.3 532.2 L920.7 544.2 L923.9 550.5 L927.1 553.7 L939.1 552.1 L943.8 553.7 L947.8 556.9 L955.0 569.7 L959.0 567.3 L961.4 562.5 L965.4 550.5 L968.6 540.2 L971.8 527.4 L974.9 516.3 L977.3 504.3 L980.5 493.1 L983.5 481.2 L986.1 469.8 L988.9 456.4 L991.8 446.8 L995.6 432.5 L998.5 422.9 L1002.3 410.5 L1005.2 400.0 L1009.0 388.5 L1010.9 378.0 L1014.8 365.5 L1015.7 357.9" fill="none" stroke="#8208bc" stroke-width="1" stroke-dasharray="12 13"/>
<path d="M175.1 1081.6 L178.1 1075.0 L181.1 1068.4 L184.1 1061.8 L187.1 1055.2 L190.1 1048.9 L193.1 1042.7 L196.1 1036.7 L199.1 1030.9 L202.1 1025.3 L205.1 1019.8 L208.1 1014.5 L211.1 1009.4 L214.1 1004.4 L217.1 999.5 L220.1 994.7 L223.1 990.1 L226.1 985.7 L229.1 981.4 L232.1 977.2 L235.1 973.2 L238.1 969.2 L241.1 965.4 L244.1 961.8 L247.1 958.3 L250.1 954.9 L253.1 951.5 L256.1 948.3 L259.1 945.1 L262.1 942.0 L265.1 939.0 L268.1 935.9 L271.1 932.7 L274.1 929.5 L277.1 926.2 L280.1 923.2 L283.1 920.4 L286.1 917.8 L289.1 915.6 L292.1 914.0 L295.1 912.9 L298.1 912.4 L301.1 912.1 L304.1 912.3 L307.1 912.9 L310.1 913.9 L313.1 915.2 L316.1 916.9 L319.1 919.0 L322.1 921.4 L325.1 924.0 L328.1 926.9 L331.1 929.8 L334.1 932.7 L337.1 935.6 L340.1 938.4 L343.1 941.1 L346.1 943.8 L349.1 946.5 L352.1 949.1 L355.1 951.6 L358.1 953.9 L361.1 956.1 L364.1 958.0 L367.1 959.8 L370.1 961.7 L373.1 963.6 L376.1 965.8 L379.1 968.3 L382.1 971.3 L385.1 974.6 L388.1 978.2 L391.1 982.0 L394.1 985.9 L397.1 989.9 L400.1 993.8 L403.1 997.8 L406.1 1001.7 L409.1 1005.6 L412.1 1009.7 L415.1 1013.9 L418.1 1018.2 L421.1 1022.7 L424.1 1027.3 L427.1 1032.0 L430.1 1036.6 L433.1 1041.2 L436.1 1045.4 L439.1 1049.1 L442.1 1052.3 L445.1 1054.9 L448.1 1056.8 L451.1 1057.8 L454.1 1057.9 L457.1 1057.1 L460.1 1055.5 L463.1 1053.4 L466.1 1050.6 L469.1 1047.2 L472.1 1043.7 L475.1 1040.0 L478.1 1036.2 L481.1 1032.4 L484.1 1028.5 L487.1 1024.6 L490.1 1020.6 L493.1 1016.4 L496.1 1012.0 L499.1 1007.3 L502.1 1002.9 L505.1 998.8 L508.1 994.9 L511.1 991.4 L514.1 988.5 L517.1 986.0 L520.1 983.7 L523.1 981.0 L526.1 977.9 L529.1 974.4 L532.1 970.2 L535.1 965.1 L538.1 959.4 L541.1 953.1 L544.1 946.5 L547.1 939.7 L550.1 932.7 L553.1 925.8 L556.1 918.8 L559.1 911.9 L562.1 905.1 L565.1 898.2 L568.1 891.1 L571.1 883.7 L574.1 876.0 L577.1 868.2 L580.1 860.1 L583.1 851.8 L586.1 843.3 L589.1 834.6 L592.1 825.9 L595.1 817.3 L598.1 808.7 L601.1 800.3 L604.1 792.0 L607.1 783.8 L610.1 775.8 L613.1 768.1 L616.1 760.7 L619.1 753.5 L622.1 746.5 L625.1 739.8 L628.1 733.4 L631.1 727.3 L634.1 721.4 L637.1 715.7 L640.1 710.1 L643.1 704.8 L646.1 699.6 L649.1 694.5 L652.1 689.4 L655.1 684.3 L658.1 679.2 L661.1 674.0 L664.1 668.9 L667.1 663.9 L670.1 658.9 L673.1 653.9 L676.1 649.0 L679.1 644.2 L682.1 639.7 L685.1 635.3 L688.1 631.0 L691.1 626.9 L694.1 622.9 L697.1 618.8 L700.1 614.6 L703.1 610.3 L706.1 605.7 L709.1 601.0 L712.1 596.1 L715.1 591.0 L718.1 586.0 L721.1 581.0 L724.1 576.0 L727.1 571.1 L730.1 566.3 L733.1 561.4 L736.1 556.8 L739.1 552.3 L742.1 547.9 L745.1 543.7 L748.1 539.7 L751.1 535.8 L754.1 532.0 L757.1 528.0 L760.1 523.9 L763.1 519.3 L766.1 514.3 L769.1 508.8 L772.1 502.8 L775.1 495.5 L778.1 487.8 L781.1 479.9 L784.1 472.0 L787.1 464.2 L790.1 456.8 L793.1 449.9 L796.1 444.6 L799.1 439.6 L802.1 435.1 L805.1 431.0 L808.1 427.4 L811.1 423.7 L814.1 420.1 L817.1 416.4 L820.1 412.6 L823.1 408.7 L826.1 404.8 L829.1 400.9 L832.1 397.3 L835.1 393.8 L838.1 390.9 L841.1 388.4 L844.1 386.5 L847.1 385.1 L850.1 384.0 L853.1 383.2 L856.1 382.9 L859.1 382.8 L862.1 382.9 L865.1 383.3 L868.1 383.9 L871.1 384.6 L874.1 385.4 L877.1 386.4 L880.1 387.4 L883.1 388.5 L886.1 389.6 L889.1 390.9 L892.1 392.5 L895.1 394.2 L898.1 396.2 L901.1 398.4 L904.1 400.9 L907.1 403.6 L910.1 406.9 L913.1 411.0 L916.1 415.6 L919.1 420.8 L922.1 426.4 L925.1 432.2 L928.1 438.3 L931.1 444.1 L934.1 449.8 L937.1 455.2 L940.1 460.4 L943.1 465.3 L946.1 470.2 L949.1 474.9 L952.1 479.2 L955.1 483.1 L958.1 486.4 L961.1 489.2 L964.1 491.5 L967.1 493.3 L970.1 494.6 L973.1 495.6 L976.1 496.3 L979.1 496.5 L982.1 496.3 L985.1 495.5 L988.1 494.2 L991.1 492.1 L994.1 489.4 L997.1 486.0 L1000.1 482.3 L1003.1 478.3 L1006.1 474.0 L1009.1 470.1 L1012.1 466.0 L1015.1 462.2 L1015.7 460.2" fill="none" stroke="#e8123f" stroke-width="1.1" stroke-dasharray="4 3.2"/>
<path d="M475.1 1080.6 L478.1 1077.7 L481.1 1074.9 L484.1 1072.0 L487.1 1069.2 L490.1 1066.5 L493.1 1063.8 L496.1 1061.2 L499.1 1058.6 L502.1 1056.1 L505.1 1053.7 L508.1 1051.3 L511.1 1048.9 L514.1 1046.5 L517.1 1044.1 L520.1 1041.7 L523.1 1039.3 L526.1 1036.8 L529.1 1034.2 L532.1 1031.5 L535.1 1028.6 L538.1 1025.6 L541.1 1022.5 L544.1 1019.3 L547.1 1016.0 L550.1 1012.6 L553.1 1009.2 L556.1 1005.9 L559.1 1002.4 L562.1 999.0 L565.1 995.6 L568.1 992.1 L571.1 988.7 L574.1 985.2 L577.1 981.8 L580.1 978.3 L583.1 974.9 L586.1 971.3 L589.1 967.6 L592.1 963.8 L595.1 959.9 L598.1 956.0 L601.1 951.8 L604.1 947.7 L607.1 943.6 L610.1 939.7 L613.1 935.8 L616.1 932.0 L619.1 928.2 L622.1 924.6 L625.1 921.1 L628.1 917.6 L631.1 914.2 L634.1 910.8 L637.1 907.6 L640.1 904.3 L643.1 901.1 L646.1 897.8 L649.1 894.5 L652.1 891.2 L655.1 887.8 L658.1 884.5 L661.1 881.1 L664.1 877.8 L667.1 874.6 L670.1 871.4 L673.1 868.3 L676.1 865.1 L679.1 862.0 L682.1 858.8 L685.1 855.7 L688.1 852.5 L691.1 849.4 L694.1 846.2 L697.1 843.1 L700.1 839.9 L703.1 836.7 L706.1 833.4 L709.1 829.9 L712.1 826.4 L715.1 822.8 L718.1 819.1 L721.1 815.3 L724.1 811.6 L727.1 807.8 L730.1 804.1 L733.1 800.4 L736.1 796.6 L739.1 792.8 L742.1 788.9 L745.1 785.1 L748.1 781.1 L751.1 777.2 L754.1 773.4 L757.1 769.6 L760.1 765.8 L763.1 761.9 L766.1 757.7 L769.1 753.4 L772.1 748.7 L775.1 744.0 L778.1 739.0 L781.1 733.9 L784.1 728.8 L787.1 723.8 L790.1 718.9 L793.1 714.3 L796.1 710.0 L799.1 705.9 L802.1 702.0 L805.1 698.3 L808.1 694.8 L811.1 691.5 L814.1 688.1 L817.1 684.6 L820.1 681.2 L823.1 677.9 L826.1 674.6 L829.1 671.3 L832.1 668.1 L835.1 665.1 L838.1 662.3 L841.1 659.6 L844.1 657.1 L847.1 654.8 L850.1 652.6 L853.1 650.6 L856.1 648.6 L859.1 646.7 L862.1 644.8 L865.1 643.0 L868.1 641.2 L871.1 639.6 L874.1 638.0 L877.1 636.4 L880.1 634.9 L883.1 633.3 L886.1 631.7 L889.1 630.1 L892.1 628.4 L895.1 626.7 L898.1 625.1 L901.1 623.4 L904.1 621.8 L907.1 620.3 L910.1 618.9 L913.1 617.5 L916.1 616.1 L919.1 614.6 L922.1 613.0 L925.1 611.5 L928.1 609.9 L931.1 608.2 L934.1 606.5 L937.1 604.7 L940.1 602.9 L943.1 601.1 L946.1 599.3 L949.1 597.5 L952.1 595.6 L955.1 593.8 L958.1 591.9 L961.1 590.0 L964.1 588.0 L967.1 585.9 L970.1 583.7 L973.1 581.4 L976.1 578.9 L979.1 576.2 L982.1 573.5 L985.1 570.6 L988.1 567.7 L991.1 564.7 L994.1 561.7 L997.1 558.6 L1000.1 555.5 L1003.1 552.4 L1006.1 549.3 L1009.1 546.6 L1012.1 543.5 L1015.1 540.7 L1015.6 539.4" fill="none" stroke="#cdc800" stroke-width="1.1" stroke-dasharray="4 3.2"/>
</g>
<path d="M1.5 1162.0V1139.8M4.5 1162.0V1129.1M13.5 1162.0V1122.0M25.5 1162.0V1137.4M34.5 1162.0V1122.3M37.5 1162.0V1119.8M43.5 1162.0V1127.2M46.5 1162.0V1134.3M55.5 1162.0V1125.4M61.5 1162.0V1124.0M67.5 1162.0V1120.0M70.5 1162.0V1121.8M76.5 1162.0V1144.8M79.5 1162.0V1124.7M82.5 1162.0V1117.0M85.5 1162.0V1137.1M88.5 1162.0V1145.4M91.5 1162.0V1134.4M97.5 1162.0V1121.2M100.5 1162.0V1118.7M103.5 1162.0V1135.7M115.5 1162.0V1132.4M118.5 1162.0V1126.4M121.5 1162.0V1138.4M124.5 1162.0V1132.3M127.5 1162.0V1146.8M130.5 1162.0V1130.9M133.5 1162.0V1130.3M136.5 1162.0V1145.9M139.5 1162.0V1135.0M142.5 1162.0V1138.4M148.5 1162.0V1146.6M151.5 1162.0V1123.4M154.5 1162.0V1136.8M166.5 1162.0V1139.9M169.5 1162.0V1148.6M172.5 1162.0V1132.0M175.5 1162.0V1144.4M178.5 1162.0V1144.3M181.5 1162.0V1139.9M184.5 1162.0V1147.7M192.5 1162.0V1146.4M195.5 1162.0V1135.9M201.5 1162.0V1147.8M204.5 1162.0V1146.4M216.5 1162.0V1143.6M222.5 1162.0V1145.4M225.5 1162.0V1142.5M228.5 1162.0V1142.8M231.5 1162.0V1148.1M234.5 1162.0V1132.2M237.5 1162.0V1131.6M240.5 1162.0V1132.5M243.5 1162.0V1147.1M252.5 1162.0V1145.1M255.5 1162.0V1150.5M261.5 1162.0V1151.0M264.5 1162.0V1138.8M267.5 1162.0V1135.2M270.5 1162.0V1141.3M273.5 1162.0V1138.4M276.5 1162.0V1146.7M282.5 1162.0V1135.3M288.5 1162.0V1137.1M303.5 1162.0V1131.3M309.5 1162.0V1126.8M315.5 1162.0V1135.1M321.5 1162.0V1148.5M324.5 1162.0V1145.3M333.5 1162.0V1135.7M339.5 1162.0V1132.0M348.5 1162.0V1135.6M351.5 1162.0V1140.8M357.5 1162.0V1137.9M360.5 1162.0V1143.5M363.5 1162.0V1138.7M366.5 1162.0V1143.9M369.5 1162.0V1137.4M378.5 1162.0V1138.0M381.5 1162.0V1143.4M396.5 1162.0V1136.7M402.5 1162.0V1139.7M408.5 1162.0V1141.5M411.5 1162.0V1149.7M417.5 1162.0V1150.7M420.5 1162.0V1149.3M426.5 1162.0V1137.4M429.5 1162.0V1137.4M432.5 1162.0V1142.0M435.5 1162.0V1151.8M438.5 1162.0V1143.2M444.5 1162.0V1135.4M447.5 1162.0V1146.4M450.5 1162.0V1137.2M453.5 1162.0V1149.0M456.5 1162.0V1141.0M459.5 1162.0V1145.0M465.5 1162.0V1144.5M468.5 1162.0V1142.9M471.5 1162.0V1144.5M477.5 1162.0V1138.0M480.5 1162.0V1142.2M489.5 1162.0V1133.2M492.5 1162.0V1137.1M501.5 1162.0V1131.4M504.5 1162.0V1140.1M521.5 1162.0V1138.9M527.5 1162.0V1129.8M530.5 1162.0V1124.9M539.5 1162.0V1136.5M542.5 1162.0V1133.1M545.5 1162.0V1140.8M551.5 1162.0V1145.2M554.5 1162.0V1134.8M557.5 1162.0V1130.0M563.5 1162.0V1144.4M566.5 1162.0V1133.3M572.5 1162.0V1127.0M575.5 1162.0V1137.2M581.5 1162.0V1124.1M584.5 1162.0V1136.5M596.5 1162.0V1121.0M599.5 1162.0V1139.9M602.5 1162.0V1147.3M617.5 1162.0V1141.9M626.5 1162.0V1143.5M629.5 1162.0V1144.6M635.5 1162.0V1149.3M641.5 1162.0V1151.7M644.5 1162.0V1145.2M650.5 1162.0V1152.6M656.5 1162.0V1143.9M659.5 1162.0V1146.3M665.5 1162.0V1151.8M671.5 1162.0V1146.5M674.5 1162.0V1149.2M677.5 1162.0V1148.8M680.5 1162.0V1153.7M683.5 1162.0V1150.8M686.5 1162.0V1134.0M695.5 1162.0V1142.1M698.5 1162.0V1150.4M701.5 1162.0V1152.7M704.5 1162.0V1143.6M707.5 1162.0V1151.4M710.5 1162.0V1143.0M713.5 1162.0V1142.8M716.5 1162.0V1151.8M719.5 1162.0V1151.0M728.5 1162.0V1153.2M734.5 1162.0V1147.5M740.5 1162.0V1137.5M743.5 1162.0V1148.1M746.5 1162.0V1144.5M749.5 1162.0V1139.7M764.5 1162.0V1141.1M767.5 1162.0V1141.7M770.5 1162.0V1130.5M773.5 1162.0V1148.2M779.5 1162.0V1144.2M794.5 1162.0V1139.6M809.5 1162.0V1138.0M830.5 1162.0V1139.0M833.5 1162.0V1126.6M842.5 1162.0V1143.0M850.5 1162.0V1143.5M856.5 1162.0V1144.2M859.5 1162.0V1124.0M871.5 1162.0V1147.2M874.5 1162.0V1138.4M877.5 1162.0V1123.9M880.5 1162.0V1146.1M883.5 1162.0V1144.3M886.5 1162.0V1139.7M889.5 1162.0V1147.2M892.5 1162.0V1141.5M913.5 1162.0V1148.9M919.5 1162.0V1148.4M922.5 1162.0V1133.9M925.5 1162.0V1144.9M928.5 1162.0V1138.8M931.5 1162.0V1129.3M937.5 1162.0V1137.9M940.5 1162.0V1149.3M955.5 1162.0V1137.1M958.5 1162.0V1140.6M961.5 1162.0V1144.3M964.5 1162.0V1146.9M967.5 1162.0V1141.8M970.5 1162.0V1148.0M973.5 1162.0V1139.2M976.5 1162.0V1143.5M979.5 1162.0V1148.2M985.5 1162.0V1135.8M988.5 1162.0V1149.2M991.5 1162.0V1134.1M1000.5 1162.0V1136.7M1006.5 1162.0V1143.6" stroke="#5fd35f" stroke-width="1.1" fill="none"/>
<path d="M7.5 1162.0V1146.2M10.5 1162.0V1139.7M16.5 1162.0V1142.0M19.5 1162.0V1131.0M22.5 1162.0V1144.5M28.5 1162.0V1132.2M31.5 1162.0V1125.0M40.5 1162.0V1139.6M49.5 1162.0V1128.3M52.5 1162.0V1117.7M58.5 1162.0V1116.3M64.5 1162.0V1128.4M73.5 1162.0V1137.2M94.5 1162.0V1141.9M106.5 1162.0V1131.7M109.5 1162.0V1129.6M112.5 1162.0V1129.0M145.5 1162.0V1128.5M157.5 1162.0V1140.6M160.5 1162.0V1141.0M163.5 1162.0V1134.3M186.5 1162.0V1142.5M189.5 1162.0V1140.3M198.5 1162.0V1140.4M207.5 1162.0V1132.5M210.5 1162.0V1144.7M213.5 1162.0V1137.1M219.5 1162.0V1144.8M246.5 1162.0V1135.1M249.5 1162.0V1141.5M258.5 1162.0V1146.3M279.5 1162.0V1142.7M285.5 1162.0V1146.3M291.5 1162.0V1137.8M294.5 1162.0V1147.8M297.5 1162.0V1134.1M300.5 1162.0V1133.1M306.5 1162.0V1149.0M312.5 1162.0V1141.6M318.5 1162.0V1136.4M327.5 1162.0V1146.8M330.5 1162.0V1126.7M336.5 1162.0V1140.5M342.5 1162.0V1100.0M345.5 1162.0V1140.3M354.5 1162.0V1146.2M372.5 1162.0V1137.7M375.5 1162.0V1146.7M384.5 1162.0V1134.7M387.5 1162.0V1144.6M390.5 1162.0V1136.8M393.5 1162.0V1143.1M399.5 1162.0V1135.5M405.5 1162.0V1141.8M414.5 1162.0V1151.6M423.5 1162.0V1137.5M441.5 1162.0V1150.5M462.5 1162.0V1144.9M474.5 1162.0V1149.2M483.5 1162.0V1138.4M486.5 1162.0V1147.5M495.5 1162.0V1130.8M498.5 1162.0V1141.1M507.5 1162.0V1118.0M510.5 1162.0V1114.0M513.5 1162.0V1122.0M516.5 1162.0V1141.1M518.5 1162.0V1147.7M524.5 1162.0V1139.7M533.5 1162.0V1134.8M536.5 1162.0V1129.6M548.5 1162.0V1128.5M560.5 1162.0V1145.5M569.5 1162.0V1127.5M578.5 1162.0V1145.4M587.5 1162.0V1128.2M590.5 1162.0V1118.0M593.5 1162.0V1135.6M605.5 1162.0V1136.6M608.5 1162.0V1133.9M611.5 1162.0V1150.5M614.5 1162.0V1146.6M620.5 1162.0V1144.6M623.5 1162.0V1142.7M632.5 1162.0V1152.7M638.5 1162.0V1144.5M647.5 1162.0V1141.5M653.5 1162.0V1152.3M662.5 1162.0V1147.7M668.5 1162.0V1144.0M689.5 1162.0V1148.5M692.5 1162.0V1143.2M722.5 1162.0V1145.1M725.5 1162.0V1149.9M731.5 1162.0V1139.6M737.5 1162.0V1144.2M752.5 1162.0V1138.2M755.5 1162.0V1142.8M758.5 1162.0V1142.9M761.5 1162.0V1141.0M776.5 1162.0V1138.5M782.5 1162.0V1150.1M785.5 1162.0V1133.9M788.5 1162.0V1135.6M791.5 1162.0V1128.0M797.5 1162.0V1136.3M800.5 1162.0V1143.3M803.5 1162.0V1129.6M806.5 1162.0V1139.9M812.5 1162.0V1148.3M815.5 1162.0V1144.5M818.5 1162.0V1137.2M821.5 1162.0V1136.1M824.5 1162.0V1133.2M827.5 1162.0V1137.6M836.5 1162.0V1127.0M839.5 1162.0V1135.5M845.5 1162.0V1143.3M848.5 1162.0V1144.9M853.5 1162.0V1144.1M862.5 1162.0V1136.0M865.5 1162.0V1147.9M868.5 1162.0V1138.1M895.5 1162.0V1136.6M898.5 1162.0V1140.8M901.5 1162.0V1141.7M904.5 1162.0V1132.5M907.5 1162.0V1146.3M910.5 1162.0V1124.6M916.5 1162.0V1146.9M934.5 1162.0V1149.6M943.5 1162.0V1134.6M946.5 1162.0V1144.0M949.5 1162.0V1138.3M952.5 1162.0V1148.1M982.5 1162.0V1150.8M994.5 1162.0V1133.5M997.5 1162.0V1142.3M1003.5 1162.0V1144.1M1009.5 1162.0V1149.5M1012.5 1162.0V1149.4M1015.5 1162.0V1139.0" stroke="#e06c68" stroke-width="1.1" fill="none"/>
<path d="M0.0 1145.3 L35.0 1145.3 L40.0 1144.3 L75.0 1144.3 L80.0 1143.3 L100.0 1143.3 L128.0 1141.5 L170.0 1141.0 L215.0 1140.0 L260.0 1139.0 L285.0 1138.0 L345.0 1137.0 L400.0 1136.5 L455.0 1136.5 L460.0 1135.5 L470.0 1135.5 L475.0 1136.5 L500.0 1136.0 L508.0 1135.0 L585.0 1135.0 L590.0 1134.0 L608.0 1134.0 L612.0 1135.5 L635.0 1135.5 L640.0 1136.5 L670.0 1136.5 L675.0 1137.5 L690.0 1137.5 L695.0 1138.5 L728.0 1138.5 L732.0 1140.0 L780.0 1140.0 L785.0 1141.0 L855.0 1141.0 L860.0 1140.0 L935.0 1140.0 L940.0 1141.0 L1015.4 1140.7" fill="none" stroke="#c9c400" stroke-width="1.2"/>
<path d="M1.1 1228.5 L1.1 1203.1 L3.3 1219.7 L12.2 1206.4 L18.8 1221.2 L24.3 1221.5 L27.6 1215.3 L31.0 1213.1 L33.6 1215.3 L36.1 1228.5ZM72.0 1228.5 L72.3 1226.3 L76.3 1219.7 L81.8 1216.4 L85.1 1213.7 L90.6 1212.4 L93.3 1228.5ZM96.2 1228.5 L99.5 1216.4 L102.1 1215.3 L105.7 1220.8 L108.3 1220.4 L109.7 1228.5ZM119.7 1228.5 L120.5 1227.4 L120.9 1228.5ZM125.9 1228.5 L126.5 1226.3 L129.3 1227.4 L132.7 1227.9 L135.3 1226.3 L138.2 1219.7 L141.5 1217.9 L147.0 1212.4 L150.8 1209.3 L153.7 1217.5 L156.5 1215.9 L157.9 1228.5ZM176.3 1228.5 L178.0 1226.3 L180.2 1224.1 L183.5 1218.6 L186.2 1228.5ZM191.0 1228.5 L192.4 1224.8 L195.2 1224.3 L196.3 1228.5ZM477.1 1228.5 L479.3 1222.6 L482.6 1225.7 L485.3 1226.3 L488.6 1222.6 L491.9 1220.1 L494.6 1219.3 L496.0 1228.5ZM500.3 1228.5 L502.8 1215.8 L506.2 1214.4 L508.3 1228.5ZM542.8 1228.5 L542.9 1228.2 L545.5 1224.3 L548.2 1227.7 L553.9 1227.5 L557.4 1224.3 L560.4 1227.3 L563.6 1221.5 L566.6 1215.6 L569.6 1222.4 L572.8 1222.0 L575.8 1218.5 L578.7 1215.1 L581.5 1212.3 L584.3 1205.9 L587.2 1203.2 L590.2 1216.2 L593.4 1225.4 L596.4 1225.4 L599.4 1220.8 L602.2 1218.5 L605.6 1213.9 L608.4 1213.3 L611.3 1219.0 L612.6 1228.5ZM616.4 1228.5 L617.1 1225.0 L617.8 1228.5ZM709.7 1228.5 L710.7 1227.7 L713.5 1224.3 L716.5 1222.0 L719.2 1216.2 L722.2 1222.0 L723.2 1228.5ZM740.7 1228.5 L742.7 1222.4 L745.6 1221.3 L748.6 1224.3 L750.3 1228.5ZM769.0 1228.5 L770.9 1220.8 L773.6 1209.4 L776.6 1208.2 L779.6 1204.3 L782.4 1216.2 L785.4 1222.4 L788.6 1227.3 L788.8 1228.5ZM976.0 1228.5 L976.4 1227.7 L979.3 1224.7 L980.8 1228.5ZM984.1 1228.5 L985.5 1224.3 L988.5 1220.8 L991.7 1217.4 L994.7 1224.3 L997.5 1226.6 L1000.5 1226.1 L1003.4 1222.7 L1006.7 1219.7 L1009.6 1223.6 L1012.6 1214.4 L1015.8 1221.5 L1015.8 1228.5Z" fill="#200909"/>
<path d="M1 1228.5H2294 M1 1294.4H2294" stroke="#3030d0" stroke-width="1.2" fill="none"/>
<path d="M1.1 1203.1 L3.3 1219.7 L12.2 1206.4 L18.8 1221.2 L24.3 1221.5 L27.6 1215.3 L31.0 1213.1 L33.6 1215.3 L36.5 1230.7 L39.8 1242.9 L43.1 1248.9 L45.8 1247.8 L48.6 1238.9 L54.2 1235.6 L57.5 1252.9 L60.6 1260.6 L63.5 1251.8 L66.3 1248.4 L69.6 1249.5 L72.3 1226.3 L76.3 1219.7 L81.8 1216.4 L85.1 1213.7 L90.6 1212.4 L93.5 1229.6 L96.2 1228.5 L99.5 1216.4 L102.1 1215.3 L105.7 1220.8 L108.3 1220.4 L111.2 1237.4 L113.9 1234.1 L117.2 1231.9 L120.5 1227.4 L123.8 1237.4 L126.5 1226.3 L129.3 1227.4 L132.7 1227.9 L135.3 1226.3 L138.2 1219.7 L141.5 1217.9 L147.0 1212.4 L150.8 1209.3 L153.7 1217.5 L156.5 1215.9 L159.2 1240.7 L162.5 1248.9 L165.8 1247.3 L169.1 1244.5 L171.8 1247.3 L174.7 1230.7 L178.0 1226.3 L180.2 1224.1 L183.5 1218.6 L186.8 1230.7 L189.7 1231.9 L192.4 1224.8 L195.2 1224.3 L198.3 1235.8 L201.2 1231.9 L204.5 1229.0 L207.2 1246.2 L210.0 1247.8 L213.4 1262.4 L216.7 1250.2 L219.5 1253.3 L222.2 1254.6 L225.5 1246.7 L228.8 1238.5 L231.7 1245.1 L234.4 1243.6 L237.7 1240.0 L241.0 1236.7 L243.9 1235.6 L246.5 1247.3 L249.8 1259.5 L252.7 1252.9 L256.5 1251.1 L262.0 1249.5 L265.3 1249.5 L267.5 1247.8 L270.8 1257.3 L273.5 1239.2 L276.4 1234.7 L279.7 1243.6 L282.6 1241.8 L285.2 1251.1 L288.5 1241.8 L291.2 1248.4 L294.1 1262.8 L297.4 1275.0 L300.2 1287.1 L303.3 1277.2 L306.2 1280.5 L309.5 1293.8 L312.4 1298.6 L315.5 1287.6 L318.4 1290.9 L321.7 1292.7 L325.0 1296.6 L327.7 1294.4 L330.5 1292.7 L333.8 1283.8 L337.2 1279.4 L339.8 1277.6 L342.7 1283.4 L345.3 1281.6 L348.2 1276.1 L351.5 1274.3 L354.9 1275.4 L357.5 1278.3 L360.4 1266.1 L363.3 1261.7 L366.3 1259.5 L369.7 1252.4 L372.5 1253.5 L375.2 1256.2 L378.7 1262.4 L381.8 1259.0 L384.7 1268.3 L388.0 1276.1 L393.5 1286.5 L396.9 1278.7 L399.7 1278.3 L402.4 1272.8 L405.7 1263.5 L408.6 1266.1 L411.2 1261.3 L414.1 1260.6 L417.4 1255.5 L420.1 1265.0 L423.4 1270.5 L426.7 1266.6 L432.2 1259.9 L435.6 1251.3 L438.4 1249.5 L441.7 1257.3 L444.4 1258.4 L447.7 1250.6 L453.2 1244.5 L456.6 1235.8 L459.4 1237.4 L462.1 1235.2 L465.0 1238.5 L468.3 1234.1 L470.9 1231.9 L473.8 1236.3 L476.5 1230.3 L479.3 1222.6 L482.6 1225.7 L485.3 1226.3 L488.6 1222.6 L491.9 1220.1 L494.6 1219.3 L497.5 1237.4 L500.0 1230.0 L502.8 1215.8 L506.2 1214.4 L509.2 1234.6 L512.6 1239.2 L518.4 1273.2 L521.3 1252.5 L524.6 1255.7 L527.5 1248.4 L530.5 1240.3 L533.7 1241.5 L536.7 1245.4 L540.2 1234.6 L542.9 1228.2 L545.5 1224.3 L548.2 1227.7 L553.9 1227.5 L557.4 1224.3 L560.4 1227.3 L563.6 1221.5 L566.6 1215.6 L569.6 1222.4 L572.8 1222.0 L575.8 1218.5 L578.7 1215.1 L581.5 1212.3 L584.3 1205.9 L587.2 1203.2 L590.2 1216.2 L593.4 1225.4 L596.4 1225.4 L599.4 1220.8 L602.2 1218.5 L605.6 1213.9 L608.4 1213.3 L611.3 1219.0 L614.1 1240.3 L617.1 1225.0 L620.5 1242.2 L624.0 1245.4 L629.7 1241.5 L632.5 1248.4 L635.4 1246.8 L638.9 1250.2 L641.6 1249.5 L644.6 1246.8 L647.6 1253.0 L650.4 1243.8 L653.4 1254.1 L656.1 1247.7 L659.6 1236.4 L662.5 1236.4 L665.3 1250.7 L668.3 1265.1 L671.7 1261.5 L677.5 1261.0 L680.7 1251.8 L683.7 1245.6 L686.4 1234.6 L689.4 1242.2 L695.1 1248.4 L698.6 1255.3 L702.0 1245.4 L705.0 1236.9 L707.8 1230.0 L710.7 1227.7 L713.5 1224.3 L716.5 1222.0 L719.2 1216.2 L722.2 1222.0 L725.2 1242.6 L728.4 1235.3 L731.2 1235.8 L734.2 1231.9 L737.1 1233.5 L739.9 1231.2 L742.7 1222.4 L745.6 1221.3 L748.6 1224.3 L751.8 1232.3 L754.8 1231.6 L758.3 1246.5 L761.7 1244.9 L764.7 1239.2 L767.9 1233.0 L770.9 1220.8 L773.6 1209.4 L776.6 1208.2 L779.6 1204.3 L782.4 1216.2 L785.4 1222.4 L788.6 1227.3 L791.6 1242.2 L794.5 1236.4 L797.8 1237.6 L800.7 1250.7 L803.7 1253.0 L806.9 1269.7 L809.9 1271.3 L812.7 1264.5 L815.7 1265.6 L818.6 1267.2 L821.4 1264.5 L824.4 1270.2 L827.6 1274.3 L830.6 1251.8 L833.6 1247.2 L836.8 1253.0 L839.8 1269.7 L843.2 1277.1 L846.2 1281.2 L848.9 1283.5 L851.9 1284.0 L857.4 1289.7 L860.4 1277.5 L863.4 1277.5 L866.6 1282.8 L869.6 1287.4 L872.6 1280.5 L875.8 1288.6 L878.8 1281.7 L881.5 1281.2 L884.5 1273.6 L888.0 1268.4 L891.0 1264.5 L894.2 1265.6 L897.2 1270.2 L899.9 1277.1 L902.9 1286.3 L905.6 1281.7 L908.6 1285.8 L912.1 1288.1 L915.1 1289.0 L917.8 1289.7 L920.1 1292.7 L923.1 1282.8 L925.8 1274.8 L928.6 1272.0 L931.6 1259.2 L934.6 1264.5 L937.3 1259.9 L940.8 1256.4 L943.8 1255.3 L946.5 1258.7 L950.0 1267.4 L952.7 1270.7 L955.7 1269.0 L958.7 1256.0 L961.4 1250.7 L964.4 1239.2 L967.6 1235.8 L970.6 1234.6 L973.6 1234.2 L976.4 1227.7 L979.3 1224.7 L982.6 1232.8 L985.5 1224.3 L988.5 1220.8 L991.7 1217.4 L994.7 1224.3 L997.5 1226.6 L1000.5 1226.1 L1003.4 1222.7 L1006.7 1219.7 L1009.6 1223.6 L1012.6 1214.4 L1015.8 1221.5" fill="none" stroke="#cfcfcf" stroke-width="1"/>
<path d="M0.0 1432.8L1.5 1432.7L1.5 1433.4L0.0 1433.4ZM1.5 1432.7L3.0 1432.4L3.0 1433.1L1.5 1433.4ZM3.0 1432.4L4.5 1432.1L4.5 1432.8L3.0 1433.1ZM4.5 1432.1L6.0 1431.9L6.0 1432.5L4.5 1432.8ZM6.0 1431.9L7.5 1431.6L7.5 1432.3L6.0 1432.5ZM7.5 1431.6L9.0 1431.3L9.0 1432.0L7.5 1432.3ZM9.0 1431.3L10.5 1431.0L10.5 1431.7L9.0 1432.0ZM10.5 1431.0L12.0 1430.8L12.0 1431.4L10.5 1431.7ZM12.0 1430.8L13.5 1430.5L13.5 1431.1L12.0 1431.4ZM13.5 1430.5L15.0 1430.2L15.0 1430.9L13.5 1431.1ZM15.0 1430.2L16.5 1430.1L16.5 1430.8L15.0 1430.9ZM16.5 1430.1L18.0 1430.2L18.0 1430.8L16.5 1430.8ZM18.0 1430.2L19.5 1430.2L19.5 1430.8L18.0 1430.8ZM19.5 1430.2L21.0 1430.2L21.0 1430.8L19.5 1430.8ZM21.0 1430.2L22.5 1430.3L22.5 1430.8L21.0 1430.8ZM22.5 1430.3L24.0 1430.3L24.0 1430.8L22.5 1430.8ZM24.0 1430.3L25.5 1430.3L25.5 1430.8L24.0 1430.8ZM25.5 1430.3L27.0 1430.4L27.0 1430.8L25.5 1430.8ZM27.0 1430.4L28.5 1430.4L28.5 1430.8L27.0 1430.8ZM28.5 1430.4L30.0 1430.4L30.0 1430.8L28.5 1430.8ZM30.0 1430.4L31.5 1430.4L31.5 1430.8L30.0 1430.8ZM31.5 1430.4L33.0 1430.5L33.0 1430.8L31.5 1430.8ZM33.0 1430.5L34.5 1430.5L34.5 1430.8L33.0 1430.8ZM34.5 1430.5L36.0 1430.5L36.0 1430.8L34.5 1430.8ZM36.0 1430.5L37.5 1430.6L37.5 1430.8L36.0 1430.8ZM37.5 1430.6L39.0 1430.8L39.0 1430.9L37.5 1430.8ZM39.0 1430.8L40.5 1431.0L40.5 1431.1L39.0 1430.9ZM40.5 1431.0L42.0 1431.2L42.0 1431.2L40.5 1431.1ZM75.0 1433.0L76.5 1432.6L76.5 1432.8L75.0 1432.9ZM76.5 1432.6L78.0 1432.1L78.0 1432.7L76.5 1432.8ZM78.0 1432.1L79.5 1431.7L79.5 1432.6L78.0 1432.7ZM79.5 1431.7L81.0 1431.4L81.0 1432.4L79.5 1432.6ZM81.0 1431.4L82.5 1431.1L82.5 1432.2L81.0 1432.4ZM82.5 1431.1L84.0 1430.8L84.0 1432.0L82.5 1432.2ZM84.0 1430.8L85.5 1430.5L85.5 1431.8L84.0 1432.0ZM85.5 1430.5L87.0 1430.2L87.0 1431.7L85.5 1431.8ZM87.0 1430.2L88.5 1429.9L88.5 1431.5L87.0 1431.7ZM88.5 1429.9L90.0 1429.6L90.0 1431.3L88.5 1431.5ZM90.0 1429.6L91.5 1429.4L91.5 1431.1L90.0 1431.3ZM91.5 1429.4L93.0 1429.3L93.0 1430.9L91.5 1431.1ZM93.0 1429.3L94.5 1429.1L94.5 1430.7L93.0 1430.9ZM94.5 1429.1L96.0 1429.0L96.0 1430.5L94.5 1430.7ZM96.0 1429.0L97.5 1428.9L97.5 1430.3L96.0 1430.5ZM97.5 1428.9L99.0 1428.8L99.0 1430.1L97.5 1430.3ZM99.0 1428.8L100.5 1428.6L100.5 1429.9L99.0 1430.1ZM100.5 1428.6L102.0 1428.5L102.0 1429.7L100.5 1429.9ZM102.0 1428.5L103.5 1428.4L103.5 1429.5L102.0 1429.7ZM103.5 1428.4L105.0 1428.5L105.0 1429.4L103.5 1429.5ZM105.0 1428.5L106.5 1428.6L106.5 1429.4L105.0 1429.4ZM106.5 1428.6L108.0 1428.8L108.0 1429.3L106.5 1429.4ZM108.0 1428.8L109.5 1428.9L109.5 1429.2L108.0 1429.3ZM109.5 1428.9L111.0 1429.1L111.0 1429.2L109.5 1429.2ZM111.0 1429.1L112.5 1429.2L112.5 1429.1L111.0 1429.2ZM141.0 1429.0L142.5 1428.9L142.5 1428.9L141.0 1429.0ZM142.5 1428.9L144.0 1428.6L144.0 1428.8L142.5 1428.9ZM144.0 1428.6L145.5 1428.4L145.5 1428.6L144.0 1428.8ZM145.5 1428.4L147.0 1428.2L147.0 1428.5L145.5 1428.6ZM147.0 1428.2L148.5 1428.0L148.5 1428.3L147.0 1428.5ZM148.5 1428.0L150.0 1427.7L150.0 1428.2L148.5 1428.3ZM150.0 1427.7L151.5 1427.7L151.5 1428.1L150.0 1428.2ZM151.5 1427.7L153.0 1427.8L153.0 1428.1L151.5 1428.1ZM153.0 1427.8L154.5 1427.8L154.5 1428.1L153.0 1428.1ZM154.5 1427.8L156.0 1427.8L156.0 1428.1L154.5 1428.1ZM156.0 1427.8L157.5 1427.9L157.5 1428.1L156.0 1428.1ZM157.5 1427.9L159.0 1427.9L159.0 1428.1L157.5 1428.1ZM159.0 1427.9L160.5 1428.2L160.5 1428.2L159.0 1428.1ZM184.5 1429.3L186.0 1429.1L186.0 1429.1L184.5 1429.2ZM186.0 1429.1L187.5 1428.9L187.5 1429.0L186.0 1429.1ZM187.5 1428.9L189.0 1428.7L189.0 1428.9L187.5 1429.0ZM189.0 1428.7L190.5 1428.5L190.5 1428.8L189.0 1428.9ZM190.5 1428.5L192.0 1428.3L192.0 1428.7L190.5 1428.8ZM192.0 1428.3L193.5 1428.1L193.5 1428.6L192.0 1428.7ZM193.5 1428.1L195.0 1427.9L195.0 1428.6L193.5 1428.6ZM195.0 1427.9L196.5 1427.9L196.5 1428.5L195.0 1428.6ZM196.5 1427.9L198.0 1427.9L198.0 1428.5L196.5 1428.5ZM198.0 1427.9L199.5 1427.9L199.5 1428.5L198.0 1428.5ZM199.5 1427.9L201.0 1427.9L201.0 1428.4L199.5 1428.5ZM201.0 1427.9L202.5 1427.9L202.5 1428.4L201.0 1428.4ZM202.5 1427.9L204.0 1427.9L204.0 1428.4L202.5 1428.4ZM204.0 1427.9L205.5 1427.9L205.5 1428.4L204.0 1428.4ZM205.5 1427.9L207.0 1428.3L207.0 1428.5L205.5 1428.4ZM207.0 1428.3L208.5 1428.7L208.5 1428.7L207.0 1428.5ZM232.5 1431.2L234.0 1431.2L234.0 1431.2L232.5 1431.2ZM234.0 1431.2L235.5 1431.1L235.5 1431.2L234.0 1431.2ZM235.5 1431.1L237.0 1431.0L237.0 1431.1L235.5 1431.2ZM237.0 1431.0L238.5 1431.0L238.5 1431.1L237.0 1431.1ZM238.5 1431.0L240.0 1430.9L240.0 1431.1L238.5 1431.1ZM240.0 1430.9L241.5 1430.9L241.5 1431.0L240.0 1431.1ZM241.5 1430.9L243.0 1430.8L243.0 1431.0L241.5 1431.0ZM243.0 1430.8L244.5 1431.0L244.5 1431.1L243.0 1431.0ZM244.5 1431.0L246.0 1431.2L246.0 1431.2L244.5 1431.1ZM273.0 1432.9L274.5 1432.6L274.5 1432.8L273.0 1432.8ZM274.5 1432.6L276.0 1432.4L276.0 1432.8L274.5 1432.8ZM276.0 1432.4L277.5 1432.3L277.5 1432.8L276.0 1432.8ZM277.5 1432.3L279.0 1432.3L279.0 1432.7L277.5 1432.8ZM279.0 1432.3L280.5 1432.3L280.5 1432.7L279.0 1432.7ZM280.5 1432.3L282.0 1432.3L282.0 1432.7L280.5 1432.7ZM282.0 1432.3L283.5 1432.3L283.5 1432.7L282.0 1432.7ZM283.5 1432.3L285.0 1432.3L285.0 1432.7L283.5 1432.7ZM285.0 1432.3L286.5 1432.3L286.5 1432.6L285.0 1432.7ZM286.5 1432.3L288.0 1432.3L288.0 1432.6L286.5 1432.6ZM288.0 1432.3L289.5 1432.3L289.5 1432.6L288.0 1432.6ZM289.5 1432.3L291.0 1432.3L291.0 1432.6L289.5 1432.6ZM291.0 1432.3L292.5 1432.6L292.5 1432.7L291.0 1432.6ZM345.0 1450.4L346.5 1450.1L346.5 1450.5L345.0 1450.6ZM346.5 1450.1L348.0 1449.7L348.0 1450.5L346.5 1450.5ZM348.0 1449.7L349.5 1449.3L349.5 1450.4L348.0 1450.5ZM349.5 1449.3L351.0 1449.0L351.0 1450.2L349.5 1450.4ZM351.0 1449.0L352.5 1448.6L352.5 1449.9L351.0 1450.2ZM352.5 1448.6L354.0 1448.2L354.0 1449.6L352.5 1449.9ZM354.0 1448.2L355.5 1447.9L355.5 1449.3L354.0 1449.6ZM355.5 1447.9L357.0 1447.5L357.0 1449.1L355.5 1449.3ZM357.0 1447.5L358.5 1447.2L358.5 1448.8L357.0 1449.1ZM358.5 1447.2L360.0 1446.8L360.0 1448.5L358.5 1448.8ZM360.0 1446.8L361.5 1446.2L361.5 1448.1L360.0 1448.5ZM361.5 1446.2L363.0 1445.6L363.0 1447.6L361.5 1448.1ZM363.0 1445.6L364.5 1445.0L364.5 1447.1L363.0 1447.6ZM364.5 1445.0L366.0 1444.3L366.0 1446.6L364.5 1447.1ZM366.0 1444.3L367.5 1443.7L367.5 1446.2L366.0 1446.6ZM367.5 1443.7L369.0 1443.0L369.0 1445.7L367.5 1446.2ZM369.0 1443.0L370.5 1442.6L370.5 1445.2L369.0 1445.7ZM370.5 1442.6L372.0 1442.2L372.0 1444.7L370.5 1445.2ZM372.0 1442.2L373.5 1441.8L373.5 1444.2L372.0 1444.7ZM373.5 1441.8L375.0 1441.4L375.0 1443.7L373.5 1444.2ZM375.0 1441.4L376.5 1440.9L376.5 1443.2L375.0 1443.7ZM376.5 1440.9L378.0 1440.5L378.0 1442.7L376.5 1443.2ZM378.0 1440.5L379.5 1440.5L379.5 1442.4L378.0 1442.7ZM379.5 1440.5L381.0 1440.5L381.0 1442.0L379.5 1442.4ZM381.0 1440.5L382.5 1440.5L382.5 1441.7L381.0 1442.0ZM382.5 1440.5L384.0 1440.5L384.0 1441.3L382.5 1441.7ZM384.0 1440.5L385.5 1440.6L385.5 1441.2L384.0 1441.3ZM385.5 1440.6L387.0 1440.9L387.0 1441.2L385.5 1441.2ZM387.0 1440.9L388.5 1441.1L388.5 1441.3L387.0 1441.2ZM388.5 1441.1L390.0 1441.3L390.0 1441.3L388.5 1441.3ZM409.5 1441.6L411.0 1441.4L411.0 1441.6L409.5 1441.6ZM411.0 1441.4L412.5 1441.2L412.5 1441.5L411.0 1441.6ZM412.5 1441.2L414.0 1441.0L414.0 1441.5L412.5 1441.5ZM414.0 1441.0L415.5 1440.8L415.5 1441.4L414.0 1441.5ZM415.5 1440.8L417.0 1440.7L417.0 1441.3L415.5 1441.4ZM417.0 1440.7L418.5 1440.6L418.5 1441.2L417.0 1441.3ZM418.5 1440.6L420.0 1440.5L420.0 1441.1L418.5 1441.2ZM420.0 1440.5L421.5 1440.5L421.5 1441.1L420.0 1441.1ZM421.5 1440.5L423.0 1440.4L423.0 1441.0L421.5 1441.1ZM423.0 1440.4L424.5 1440.4L424.5 1440.9L423.0 1441.0ZM424.5 1440.4L426.0 1440.3L426.0 1440.8L424.5 1440.9ZM426.0 1440.3L427.5 1440.2L427.5 1440.7L426.0 1440.8ZM427.5 1440.2L429.0 1440.2L429.0 1440.6L427.5 1440.7ZM429.0 1440.2L430.5 1440.1L430.5 1440.5L429.0 1440.6ZM430.5 1440.1L432.0 1439.9L432.0 1440.4L430.5 1440.5ZM432.0 1439.9L433.5 1439.6L433.5 1440.2L432.0 1440.4ZM433.5 1439.6L435.0 1439.3L435.0 1440.0L433.5 1440.2ZM435.0 1439.3L436.5 1439.0L436.5 1439.8L435.0 1440.0ZM436.5 1439.0L438.0 1438.7L438.0 1439.5L436.5 1439.8ZM438.0 1438.7L439.5 1438.4L439.5 1439.3L438.0 1439.5ZM439.5 1438.4L441.0 1438.1L441.0 1439.1L439.5 1439.3ZM441.0 1438.1L442.5 1437.8L442.5 1438.9L441.0 1439.1ZM442.5 1437.8L444.0 1437.5L444.0 1438.7L442.5 1438.9ZM444.0 1437.5L445.5 1437.2L445.5 1438.4L444.0 1438.7ZM445.5 1437.2L447.0 1436.9L447.0 1438.2L445.5 1438.4ZM447.0 1436.9L448.5 1436.6L448.5 1438.0L447.0 1438.2ZM448.5 1436.6L450.0 1436.3L450.0 1437.7L448.5 1438.0ZM450.0 1436.3L451.5 1436.0L451.5 1437.5L450.0 1437.7ZM451.5 1436.0L453.0 1435.7L453.0 1437.2L451.5 1437.5ZM453.0 1435.7L454.5 1435.4L454.5 1436.9L453.0 1437.2ZM454.5 1435.4L456.0 1435.1L456.0 1436.6L454.5 1436.9ZM456.0 1435.1L457.5 1434.8L457.5 1436.3L456.0 1436.6ZM457.5 1434.8L459.0 1434.5L459.0 1436.0L457.5 1436.3ZM459.0 1434.5L460.5 1434.2L460.5 1435.7L459.0 1436.0ZM460.5 1434.2L462.0 1433.9L462.0 1435.4L460.5 1435.7ZM462.0 1433.9L463.5 1433.6L463.5 1435.1L462.0 1435.4ZM463.5 1433.6L465.0 1433.3L465.0 1434.8L463.5 1435.1ZM465.0 1433.3L466.5 1433.0L466.5 1434.5L465.0 1434.8ZM466.5 1433.0L468.0 1432.7L468.0 1434.3L466.5 1434.5ZM468.0 1432.7L469.5 1432.3L469.5 1434.0L468.0 1434.3ZM469.5 1432.3L471.0 1432.0L471.0 1433.8L469.5 1434.0ZM471.0 1432.0L472.5 1431.7L472.5 1433.5L471.0 1433.8ZM472.5 1431.7L474.0 1431.4L474.0 1433.3L472.5 1433.5ZM474.0 1431.4L475.5 1431.0L475.5 1433.0L474.0 1433.3ZM475.5 1431.0L477.0 1430.7L477.0 1432.8L475.5 1433.0ZM477.0 1430.7L478.5 1430.4L478.5 1432.5L477.0 1432.8ZM478.5 1430.4L480.0 1430.1L480.0 1432.3L478.5 1432.5ZM480.0 1430.1L481.5 1429.8L481.5 1432.0L480.0 1432.3ZM481.5 1429.8L483.0 1429.6L483.0 1431.6L481.5 1432.0ZM483.0 1429.6L484.5 1429.3L484.5 1431.3L483.0 1431.6ZM484.5 1429.3L486.0 1429.1L486.0 1431.0L484.5 1431.3ZM486.0 1429.1L487.5 1428.8L487.5 1430.7L486.0 1431.0ZM487.5 1428.8L489.0 1428.6L489.0 1430.3L487.5 1430.7ZM489.0 1428.6L490.5 1428.3L490.5 1430.0L489.0 1430.3ZM490.5 1428.3L492.0 1428.1L492.0 1429.7L490.5 1430.0ZM492.0 1428.1L493.5 1427.9L493.5 1429.5L492.0 1429.7ZM493.5 1427.9L495.0 1428.0L495.0 1429.5L493.5 1429.5ZM495.0 1428.0L496.5 1428.0L496.5 1429.5L495.0 1429.5ZM496.5 1428.0L498.0 1428.0L498.0 1429.5L496.5 1429.5ZM498.0 1428.0L499.5 1428.1L499.5 1429.5L498.0 1429.5ZM499.5 1428.1L501.0 1427.6L501.0 1429.2L499.5 1429.5ZM501.0 1427.6L502.5 1426.9L502.5 1428.9L501.0 1429.2ZM502.5 1426.9L504.0 1426.2L504.0 1428.5L502.5 1428.9ZM504.0 1426.2L505.5 1425.5L505.5 1428.1L504.0 1428.5ZM505.5 1425.5L507.0 1425.4L507.0 1427.7L505.5 1428.1ZM507.0 1425.4L508.5 1425.5L508.5 1427.4L507.0 1427.7ZM508.5 1425.5L510.0 1425.6L510.0 1427.3L508.5 1427.4ZM510.0 1425.6L511.5 1425.7L511.5 1427.4L510.0 1427.3ZM511.5 1425.7L513.0 1425.8L513.0 1427.6L511.5 1427.4ZM513.0 1425.8L514.5 1426.5L514.5 1427.7L513.0 1427.6ZM514.5 1426.5L516.0 1427.8L516.0 1427.9L514.5 1427.7ZM534.0 1429.0L535.5 1428.6L535.5 1428.9L534.0 1429.0ZM535.5 1428.6L537.0 1428.2L537.0 1428.7L535.5 1428.9ZM537.0 1428.2L538.5 1427.8L538.5 1428.5L537.0 1428.7ZM538.5 1427.8L540.0 1426.8L540.0 1428.2L538.5 1428.5ZM540.0 1426.8L541.5 1425.6L541.5 1428.0L540.0 1428.2ZM541.5 1425.6L543.0 1424.3L543.0 1427.7L541.5 1428.0ZM543.0 1424.3L544.5 1423.1L544.5 1427.2L543.0 1427.7ZM544.5 1423.1L546.0 1421.9L546.0 1426.5L544.5 1427.2ZM546.0 1421.9L547.5 1421.5L547.5 1425.7L546.0 1426.5ZM547.5 1421.5L549.0 1421.0L549.0 1425.0L547.5 1425.7ZM549.0 1421.0L550.5 1420.6L550.5 1424.2L549.0 1425.0ZM550.5 1420.6L552.0 1420.2L552.0 1423.8L550.5 1424.2ZM552.0 1420.2L553.5 1419.7L553.5 1423.5L552.0 1423.8ZM553.5 1419.7L555.0 1419.5L555.0 1423.1L553.5 1423.5ZM555.0 1419.5L556.5 1419.2L556.5 1422.7L555.0 1423.1ZM556.5 1419.2L558.0 1419.0L558.0 1422.3L556.5 1422.7ZM558.0 1419.0L559.5 1418.8L559.5 1422.0L558.0 1422.3ZM559.5 1418.8L561.0 1418.6L561.0 1421.5L559.5 1422.0ZM561.0 1418.6L562.5 1418.3L562.5 1421.0L561.0 1421.5ZM562.5 1418.3L564.0 1417.7L564.0 1420.5L562.5 1421.0ZM564.0 1417.7L565.5 1417.1L565.5 1420.0L564.0 1420.5ZM565.5 1417.1L567.0 1416.5L567.0 1419.5L565.5 1420.0ZM567.0 1416.5L568.5 1415.9L568.5 1419.0L567.0 1419.5ZM568.5 1415.9L570.0 1415.4L570.0 1418.7L568.5 1419.0ZM570.0 1415.4L571.5 1414.9L571.5 1418.4L570.0 1418.7ZM571.5 1414.9L573.0 1414.5L573.0 1418.1L571.5 1418.4ZM573.0 1414.5L574.5 1414.1L574.5 1417.8L573.0 1418.1ZM574.5 1414.1L576.0 1413.6L576.0 1417.5L574.5 1417.8ZM576.0 1413.6L577.5 1413.2L577.5 1417.2L576.0 1417.5ZM577.5 1413.2L579.0 1412.8L579.0 1416.9L577.5 1417.2ZM579.0 1412.8L580.5 1411.9L580.5 1416.2L579.0 1416.9ZM580.5 1411.9L582.0 1410.9L582.0 1415.5L580.5 1416.2ZM582.0 1410.9L583.5 1409.9L583.5 1414.7L582.0 1415.5ZM583.5 1409.9L585.0 1408.9L585.0 1414.0L583.5 1414.7ZM585.0 1408.9L586.5 1408.0L586.5 1413.3L585.0 1414.0ZM586.5 1408.0L588.0 1407.5L588.0 1412.8L586.5 1413.3ZM588.0 1407.5L589.5 1406.9L589.5 1412.3L588.0 1412.8ZM589.5 1406.9L591.0 1406.6L591.0 1411.9L589.5 1412.3ZM591.0 1406.6L592.5 1406.9L592.5 1411.4L591.0 1411.9ZM592.5 1406.9L594.0 1407.2L594.0 1410.9L592.5 1411.4ZM594.0 1407.2L595.5 1407.4L595.5 1410.6L594.0 1410.9ZM595.5 1407.4L597.0 1407.4L597.0 1410.2L595.5 1410.6ZM597.0 1407.4L598.5 1407.4L598.5 1409.9L597.0 1410.2ZM598.5 1407.4L600.0 1407.4L600.0 1409.5L598.5 1409.9ZM600.0 1407.4L601.5 1407.4L601.5 1409.2L600.0 1409.5ZM601.5 1407.4L603.0 1407.1L603.0 1409.0L601.5 1409.2ZM603.0 1407.1L604.5 1406.9L604.5 1408.8L603.0 1409.0ZM604.5 1406.9L606.0 1406.6L606.0 1408.7L604.5 1408.8ZM606.0 1406.6L607.5 1406.4L607.5 1408.5L606.0 1408.7ZM607.5 1406.4L609.0 1406.4L609.0 1408.3L607.5 1408.5ZM609.0 1406.4L610.5 1406.5L610.5 1408.1L609.0 1408.3ZM610.5 1406.5L612.0 1407.1L612.0 1408.1L610.5 1408.1ZM612.0 1407.1L613.5 1408.3L613.5 1408.1L612.0 1408.1ZM616.5 1408.1L618.0 1407.8L618.0 1408.1L616.5 1408.1ZM685.5 1427.5L687.0 1426.0L687.0 1426.7L685.5 1426.8ZM687.0 1426.0L688.5 1424.7L688.5 1426.6L687.0 1426.7ZM688.5 1424.7L690.0 1424.7L690.0 1426.5L688.5 1426.6ZM690.0 1424.7L691.5 1424.7L691.5 1426.3L690.0 1426.5ZM691.5 1424.7L693.0 1424.7L693.0 1426.1L691.5 1426.3ZM693.0 1424.7L694.5 1424.7L694.5 1425.8L693.0 1426.1ZM694.5 1424.7L696.0 1424.9L696.0 1425.6L694.5 1425.8ZM696.0 1424.9L697.5 1425.1L697.5 1425.3L696.0 1425.6ZM697.5 1425.1L699.0 1425.3L699.0 1425.3L697.5 1425.3ZM699.0 1425.3L700.5 1425.3L700.5 1425.3L699.0 1425.3ZM702.0 1425.3L703.5 1425.0L703.5 1425.3L702.0 1425.3ZM703.5 1425.0L705.0 1423.3L705.0 1425.0L703.5 1425.3ZM705.0 1423.3L706.5 1421.6L706.5 1424.3L705.0 1425.0ZM706.5 1421.6L708.0 1419.9L708.0 1423.5L706.5 1424.3ZM708.0 1419.9L709.5 1418.1L709.5 1422.8L708.0 1423.5ZM709.5 1418.1L711.0 1416.1L711.0 1422.0L709.5 1422.8ZM711.0 1416.1L712.5 1414.1L712.5 1420.9L711.0 1422.0ZM712.5 1414.1L714.0 1412.1L714.0 1419.8L712.5 1420.9ZM714.0 1412.1L715.5 1410.1L715.5 1418.6L714.0 1419.8ZM715.5 1410.1L717.0 1408.4L717.0 1417.5L715.5 1418.6ZM717.0 1408.4L718.5 1406.6L718.5 1416.3L717.0 1417.5ZM718.5 1406.6L720.0 1404.9L720.0 1415.3L718.5 1416.3ZM720.0 1404.9L721.5 1403.2L721.5 1414.2L720.0 1415.3ZM721.5 1403.2L723.0 1402.8L723.0 1413.1L721.5 1414.2ZM723.0 1402.8L724.5 1403.5L724.5 1412.0L723.0 1413.1ZM724.5 1403.5L726.0 1404.2L726.0 1411.0L724.5 1412.0ZM726.0 1404.2L727.5 1404.1L727.5 1410.2L726.0 1411.0ZM727.5 1404.1L729.0 1403.9L729.0 1409.5L727.5 1410.2ZM729.0 1403.9L730.5 1403.7L730.5 1408.8L729.0 1409.5ZM730.5 1403.7L732.0 1403.5L732.0 1408.1L730.5 1408.8ZM732.0 1403.5L733.5 1403.2L733.5 1407.7L732.0 1408.1ZM733.5 1403.2L735.0 1402.8L735.0 1407.3L733.5 1407.7ZM735.0 1402.8L736.5 1402.5L736.5 1406.9L735.0 1407.3ZM736.5 1402.5L738.0 1402.1L738.0 1406.5L736.5 1406.9ZM738.0 1402.1L739.5 1401.3L739.5 1405.9L738.0 1406.5ZM739.5 1401.3L741.0 1400.1L741.0 1405.0L739.5 1405.9ZM741.0 1400.1L742.5 1398.9L742.5 1404.2L741.0 1405.0ZM742.5 1398.9L744.0 1397.9L744.0 1403.3L742.5 1404.2ZM744.0 1397.9L745.5 1397.2L745.5 1402.5L744.0 1403.3ZM745.5 1397.2L747.0 1396.5L747.0 1401.9L745.5 1402.5ZM747.0 1396.5L748.5 1395.8L748.5 1401.4L747.0 1401.9ZM748.5 1395.8L750.0 1395.7L750.0 1400.9L748.5 1401.4ZM750.0 1395.7L751.5 1396.0L751.5 1400.4L750.0 1400.9ZM751.5 1396.0L753.0 1396.3L753.0 1400.0L751.5 1400.4ZM753.0 1396.3L754.5 1396.6L754.5 1399.9L753.0 1400.0ZM754.5 1396.6L756.0 1397.4L756.0 1399.7L754.5 1399.9ZM756.0 1397.4L757.5 1398.4L757.5 1399.5L756.0 1399.7ZM757.5 1398.4L759.0 1399.8L759.0 1399.6L757.5 1399.5ZM769.5 1401.4L771.0 1397.9L771.0 1399.6L769.5 1400.8ZM771.0 1397.9L772.5 1393.9L772.5 1398.2L771.0 1399.6ZM772.5 1393.9L774.0 1389.3L774.0 1396.9L772.5 1398.2ZM774.0 1389.3L775.5 1384.3L775.5 1395.5L774.0 1396.9ZM775.5 1384.3L777.0 1379.3L777.0 1393.4L775.5 1395.5ZM777.0 1379.3L778.5 1374.1L778.5 1391.3L777.0 1393.4ZM778.5 1374.1L780.0 1369.7L780.0 1389.2L778.5 1391.3ZM780.0 1369.7L781.5 1367.6L781.5 1387.1L780.0 1389.2ZM781.5 1367.6L783.0 1365.6L783.0 1385.0L781.5 1387.1ZM783.0 1365.6L784.5 1365.0L784.5 1382.9L783.0 1385.0ZM784.5 1365.0L786.0 1364.6L786.0 1380.8L784.5 1382.9ZM786.0 1364.6L787.5 1365.5L787.5 1379.0L786.0 1380.8ZM787.5 1365.5L789.0 1366.7L789.0 1377.9L787.5 1379.0ZM789.0 1366.7L790.5 1368.8L790.5 1376.8L789.0 1377.9ZM790.5 1368.8L792.0 1370.5L792.0 1375.9L790.5 1376.8ZM792.0 1370.5L793.5 1371.2L793.5 1375.6L792.0 1375.9ZM793.5 1371.2L795.0 1372.0L795.0 1375.3L793.5 1375.6ZM795.0 1372.0L796.5 1373.1L796.5 1375.2L795.0 1375.3ZM796.5 1373.1L798.0 1375.6L798.0 1375.7L796.5 1375.2ZM886.5 1478.3L888.0 1475.8L888.0 1476.9L886.5 1477.4ZM888.0 1475.8L889.5 1473.2L889.5 1476.2L888.0 1476.9ZM889.5 1473.2L891.0 1470.6L891.0 1475.5L889.5 1476.2ZM891.0 1470.6L892.5 1467.9L892.5 1474.7L891.0 1475.5ZM892.5 1467.9L894.0 1466.9L894.0 1474.0L892.5 1474.7ZM894.0 1466.9L895.5 1465.9L895.5 1473.2L894.0 1474.0ZM895.5 1465.9L897.0 1465.2L897.0 1472.4L895.5 1473.2ZM897.0 1465.2L898.5 1465.7L898.5 1471.7L897.0 1472.4ZM898.5 1465.7L900.0 1466.6L900.0 1471.6L898.5 1471.7ZM900.0 1466.6L901.5 1468.3L901.5 1471.5L900.0 1471.6ZM901.5 1468.3L903.0 1470.1L903.0 1471.3L901.5 1471.5ZM903.0 1470.1L904.5 1471.8L904.5 1471.4L903.0 1471.3ZM927.0 1478.7L928.5 1476.3L928.5 1478.6L927.0 1479.4ZM928.5 1476.3L930.0 1473.3L930.0 1477.8L928.5 1478.6ZM930.0 1473.3L931.5 1470.3L931.5 1477.0L930.0 1477.8ZM931.5 1470.3L933.0 1467.6L933.0 1475.9L931.5 1477.0ZM933.0 1467.6L934.5 1465.0L934.5 1474.8L933.0 1475.9ZM934.5 1465.0L936.0 1462.4L936.0 1473.7L934.5 1474.8ZM936.0 1462.4L937.5 1460.0L937.5 1472.0L936.0 1473.7ZM937.5 1460.0L939.0 1457.6L939.0 1470.3L937.5 1472.0ZM939.0 1457.6L940.5 1455.2L940.5 1468.5L939.0 1470.3ZM940.5 1455.2L942.0 1453.5L942.0 1466.8L940.5 1468.5ZM942.0 1453.5L943.5 1451.9L943.5 1465.1L942.0 1466.8ZM943.5 1451.9L945.0 1450.3L945.0 1463.6L943.5 1465.1ZM945.0 1450.3L946.5 1448.8L946.5 1462.1L945.0 1463.6ZM946.5 1448.8L948.0 1448.3L948.0 1460.6L946.5 1462.1ZM948.0 1448.3L949.5 1447.8L949.5 1459.1L948.0 1460.6ZM949.5 1447.8L951.0 1448.0L951.0 1457.9L949.5 1459.1ZM951.0 1448.0L952.5 1448.5L952.5 1456.9L951.0 1457.9ZM952.5 1448.5L954.0 1448.6L954.0 1455.9L952.5 1456.9ZM954.0 1448.6L955.5 1448.2L955.5 1454.9L954.0 1455.9ZM955.5 1448.2L957.0 1447.7L957.0 1453.9L955.5 1454.9ZM957.0 1447.7L958.5 1445.9L958.5 1452.4L957.0 1453.9ZM958.5 1445.9L960.0 1444.2L960.0 1450.9L958.5 1452.4ZM960.0 1444.2L961.5 1442.4L961.5 1449.4L960.0 1450.9ZM961.5 1442.4L963.0 1439.4L963.0 1447.9L961.5 1449.4ZM963.0 1439.4L964.5 1436.4L964.5 1446.1L963.0 1447.9ZM964.5 1436.4L966.0 1433.4L966.0 1444.1L964.5 1446.1ZM966.0 1433.4L967.5 1429.3L967.5 1442.1L966.0 1444.1ZM967.5 1429.3L969.0 1425.2L969.0 1440.1L967.5 1442.1ZM969.0 1425.2L970.5 1421.1L970.5 1438.1L969.0 1440.1ZM970.5 1421.1L972.0 1418.3L972.0 1435.7L970.5 1438.1ZM972.0 1418.3L973.5 1415.7L973.5 1433.2L972.0 1435.7ZM973.5 1415.7L975.0 1413.1L975.0 1430.7L973.5 1433.2ZM975.0 1413.1L976.5 1410.3L976.5 1428.2L975.0 1430.7ZM976.5 1410.3L978.0 1407.6L978.0 1425.7L976.5 1428.2ZM978.0 1407.6L979.5 1404.8L979.5 1423.2L978.0 1425.7ZM979.5 1404.8L981.0 1402.8L981.0 1420.7L979.5 1423.2ZM981.0 1402.8L982.5 1401.1L982.5 1418.2L981.0 1420.7ZM982.5 1401.1L984.0 1399.4L984.0 1415.7L982.5 1418.2ZM984.0 1399.4L985.5 1396.7L985.5 1413.4L984.0 1415.7ZM985.5 1396.7L987.0 1393.7L987.0 1411.1L985.5 1413.4ZM987.0 1393.7L988.5 1390.7L988.5 1408.9L987.0 1411.1ZM988.5 1390.7L990.0 1388.0L990.0 1406.6L988.5 1408.9ZM990.0 1388.0L991.5 1385.4L991.5 1404.4L990.0 1406.6ZM991.5 1385.4L993.0 1382.7L993.0 1402.4L991.5 1404.4ZM993.0 1382.7L994.5 1381.3L994.5 1400.4L993.0 1402.4ZM994.5 1381.3L996.0 1380.5L996.0 1398.4L994.5 1400.4ZM996.0 1380.5L997.5 1379.8L997.5 1396.4L996.0 1398.4ZM997.5 1379.8L999.0 1379.2L999.0 1394.7L997.5 1396.4ZM999.0 1379.2L1000.5 1378.7L1000.5 1393.2L999.0 1394.7ZM1000.5 1378.7L1002.0 1378.2L1002.0 1391.7L1000.5 1393.2ZM1002.0 1378.2L1003.5 1377.7L1003.5 1390.2L1002.0 1391.7ZM1003.5 1377.7L1005.0 1377.2L1005.0 1388.7L1003.5 1390.2ZM1005.0 1377.2L1006.5 1377.0L1006.5 1387.3L1005.0 1388.7ZM1006.5 1377.0L1008.0 1376.8L1008.0 1386.0L1006.5 1387.3ZM1008.0 1376.8L1009.5 1376.7L1009.5 1384.7L1008.0 1386.0ZM1009.5 1376.7L1011.0 1374.9L1011.0 1383.4L1009.5 1384.7ZM1011.0 1374.9L1012.5 1372.9L1012.5 1382.2L1011.0 1383.4ZM1012.5 1372.9L1014.0 1371.5L1014.0 1380.9L1012.5 1382.2ZM1014.0 1371.5L1015.5 1370.5L1015.5 1379.7L1014.0 1380.9ZM1015.5 1370.5L1015.9 1370.3L1015.9 1379.4L1015.5 1379.7Z" fill="#061a06" stroke="#061a06" stroke-width="0.4"/>
<path d="M42.0 1431.2L43.5 1431.4L43.5 1431.4L42.0 1431.2ZM43.5 1431.4L45.0 1431.6L45.0 1431.5L43.5 1431.4ZM45.0 1431.6L46.5 1431.8L46.5 1431.7L45.0 1431.5ZM46.5 1431.8L48.0 1432.1L48.0 1431.8L46.5 1431.7ZM48.0 1432.1L49.5 1432.3L49.5 1432.0L48.0 1431.8ZM49.5 1432.3L51.0 1432.5L51.0 1432.1L49.5 1432.0ZM51.0 1432.5L52.5 1432.7L52.5 1432.3L51.0 1432.1ZM52.5 1432.7L54.0 1432.9L54.0 1432.4L52.5 1432.3ZM54.0 1432.9L55.5 1433.1L55.5 1432.5L54.0 1432.4ZM55.5 1433.1L57.0 1433.3L57.0 1432.6L55.5 1432.5ZM57.0 1433.3L58.5 1433.6L58.5 1432.7L57.0 1432.6ZM58.5 1433.6L60.0 1433.8L60.0 1432.8L58.5 1432.7ZM60.0 1433.8L61.5 1434.0L61.5 1432.9L60.0 1432.8ZM61.5 1434.0L63.0 1434.2L63.0 1433.0L61.5 1432.9ZM63.0 1434.2L64.5 1434.4L64.5 1433.1L63.0 1433.0ZM64.5 1434.4L66.0 1434.6L66.0 1433.3L64.5 1433.1ZM66.0 1434.6L67.5 1434.8L67.5 1433.4L66.0 1433.3ZM67.5 1434.8L69.0 1434.8L69.0 1433.4L67.5 1433.4ZM69.0 1434.8L70.5 1434.4L70.5 1433.3L69.0 1433.4ZM70.5 1434.4L72.0 1433.9L72.0 1433.2L70.5 1433.3ZM72.0 1433.9L73.5 1433.5L73.5 1433.0L72.0 1433.2ZM73.5 1433.5L75.0 1433.0L75.0 1432.9L73.5 1433.0ZM112.5 1429.2L114.0 1429.4L114.0 1429.1L112.5 1429.1ZM114.0 1429.4L115.5 1429.4L115.5 1429.0L114.0 1429.1ZM115.5 1429.4L117.0 1429.4L117.0 1429.0L115.5 1429.0ZM117.0 1429.4L118.5 1429.4L118.5 1429.0L117.0 1429.0ZM118.5 1429.4L120.0 1429.4L120.0 1429.0L118.5 1429.0ZM120.0 1429.4L121.5 1429.3L121.5 1429.0L120.0 1429.0ZM121.5 1429.3L123.0 1429.3L123.0 1429.0L121.5 1429.0ZM123.0 1429.3L124.5 1429.3L124.5 1429.0L123.0 1429.0ZM124.5 1429.3L126.0 1429.3L126.0 1429.0L124.5 1429.0ZM126.0 1429.3L127.5 1429.2L127.5 1429.0L126.0 1429.0ZM127.5 1429.2L129.0 1429.2L129.0 1429.0L127.5 1429.0ZM129.0 1429.2L130.5 1429.2L130.5 1429.0L129.0 1429.0ZM130.5 1429.2L132.0 1429.2L132.0 1429.0L130.5 1429.0ZM132.0 1429.2L133.5 1429.1L133.5 1429.0L132.0 1429.0ZM133.5 1429.1L135.0 1429.1L135.0 1429.0L133.5 1429.0ZM135.0 1429.1L136.5 1429.1L136.5 1429.0L135.0 1429.0ZM136.5 1429.1L138.0 1429.1L138.0 1429.0L136.5 1429.0ZM138.0 1429.1L139.5 1429.0L139.5 1429.0L138.0 1429.0ZM139.5 1429.0L141.0 1429.0L141.0 1429.0L139.5 1429.0ZM160.5 1428.2L162.0 1428.5L162.0 1428.4L160.5 1428.2ZM162.0 1428.5L163.5 1428.8L163.5 1428.5L162.0 1428.4ZM163.5 1428.8L165.0 1429.1L165.0 1428.6L163.5 1428.5ZM165.0 1429.1L166.5 1429.4L166.5 1428.7L165.0 1428.6ZM166.5 1429.4L168.0 1429.7L168.0 1428.8L166.5 1428.7ZM168.0 1429.7L169.5 1430.0L169.5 1429.0L168.0 1428.8ZM169.5 1430.0L171.0 1430.1L171.0 1429.0L169.5 1429.0ZM171.0 1430.1L172.5 1430.0L172.5 1429.1L171.0 1429.0ZM172.5 1430.0L174.0 1430.0L174.0 1429.2L172.5 1429.1ZM174.0 1430.0L175.5 1429.9L175.5 1429.2L174.0 1429.2ZM175.5 1429.9L177.0 1429.9L177.0 1429.3L175.5 1429.2ZM177.0 1429.9L178.5 1429.8L178.5 1429.3L177.0 1429.3ZM178.5 1429.8L180.0 1429.7L180.0 1429.4L178.5 1429.3ZM180.0 1429.7L181.5 1429.7L181.5 1429.4L180.0 1429.4ZM181.5 1429.7L183.0 1429.5L183.0 1429.3L181.5 1429.4ZM183.0 1429.5L184.5 1429.3L184.5 1429.2L183.0 1429.3ZM208.5 1428.7L210.0 1429.0L210.0 1428.9L208.5 1428.7ZM210.0 1429.0L211.5 1429.4L211.5 1429.1L210.0 1428.9ZM211.5 1429.4L213.0 1429.8L213.0 1429.2L211.5 1429.1ZM213.0 1429.8L214.5 1430.2L214.5 1429.4L213.0 1429.2ZM214.5 1430.2L216.0 1430.6L216.0 1429.6L214.5 1429.4ZM216.0 1430.6L217.5 1430.9L217.5 1429.8L216.0 1429.6ZM217.5 1430.9L219.0 1431.2L219.0 1430.1L217.5 1429.8ZM219.0 1431.2L220.5 1431.4L220.5 1430.3L219.0 1430.1ZM220.5 1431.4L222.0 1431.7L222.0 1430.6L220.5 1430.3ZM222.0 1431.7L223.5 1431.9L223.5 1430.8L222.0 1430.6ZM223.5 1431.9L225.0 1431.8L225.0 1430.9L223.5 1430.8ZM225.0 1431.8L226.5 1431.6L226.5 1430.9L225.0 1430.9ZM226.5 1431.6L228.0 1431.5L228.0 1431.0L226.5 1430.9ZM228.0 1431.5L229.5 1431.4L229.5 1431.1L228.0 1431.0ZM229.5 1431.4L231.0 1431.3L231.0 1431.2L229.5 1431.1ZM231.0 1431.3L232.5 1431.2L232.5 1431.2L231.0 1431.2ZM246.0 1431.2L247.5 1431.4L247.5 1431.3L246.0 1431.2ZM247.5 1431.4L249.0 1431.6L249.0 1431.4L247.5 1431.3ZM249.0 1431.6L250.5 1431.8L250.5 1431.4L249.0 1431.4ZM250.5 1431.8L252.0 1432.0L252.0 1431.5L250.5 1431.4ZM252.0 1432.0L253.5 1432.2L253.5 1431.6L252.0 1431.5ZM253.5 1432.2L255.0 1432.4L255.0 1431.7L253.5 1431.6ZM255.0 1432.4L256.5 1432.5L256.5 1431.8L255.0 1431.7ZM256.5 1432.5L258.0 1432.6L258.0 1431.9L256.5 1431.8ZM258.0 1432.6L259.5 1432.7L259.5 1432.0L258.0 1431.9ZM259.5 1432.7L261.0 1432.8L261.0 1432.1L259.5 1432.0ZM261.0 1432.8L262.5 1432.9L262.5 1432.3L261.0 1432.1ZM262.5 1432.9L264.0 1433.0L264.0 1432.4L262.5 1432.3ZM264.0 1433.0L265.5 1433.1L265.5 1432.5L264.0 1432.4ZM265.5 1433.1L267.0 1433.2L267.0 1432.6L265.5 1432.5ZM267.0 1433.2L268.5 1433.3L268.5 1432.7L267.0 1432.6ZM268.5 1433.3L270.0 1433.4L270.0 1432.8L268.5 1432.7ZM270.0 1433.4L271.5 1433.1L271.5 1432.8L270.0 1432.8ZM271.5 1433.1L273.0 1432.9L273.0 1432.8L271.5 1432.8ZM292.5 1432.6L294.0 1433.2L294.0 1432.9L292.5 1432.7ZM294.0 1433.2L295.5 1433.8L295.5 1433.1L294.0 1432.9ZM295.5 1433.8L297.0 1434.4L297.0 1433.4L295.5 1433.1ZM297.0 1434.4L298.5 1435.4L298.5 1433.8L297.0 1433.4ZM298.5 1435.4L300.0 1436.4L300.0 1434.3L298.5 1433.8ZM300.0 1436.4L301.5 1437.5L301.5 1434.9L300.0 1434.3ZM301.5 1437.5L303.0 1438.6L303.0 1435.4L301.5 1434.9ZM303.0 1438.6L304.5 1439.6L304.5 1435.9L303.0 1435.4ZM304.5 1439.6L306.0 1440.8L306.0 1436.7L304.5 1435.9ZM306.0 1440.8L307.5 1442.1L307.5 1437.7L306.0 1436.7ZM307.5 1442.1L309.0 1443.3L309.0 1438.7L307.5 1437.7ZM309.0 1443.3L310.5 1444.6L310.5 1439.7L309.0 1438.7ZM310.5 1444.6L312.0 1445.7L312.0 1440.6L310.5 1439.7ZM312.0 1445.7L313.5 1446.5L313.5 1441.4L312.0 1440.6ZM313.5 1446.5L315.0 1447.2L315.0 1442.1L313.5 1441.4ZM315.0 1447.2L316.5 1448.0L316.5 1442.9L315.0 1442.1ZM316.5 1448.0L318.0 1448.7L318.0 1443.6L316.5 1442.9ZM318.0 1448.7L319.5 1449.5L319.5 1444.4L318.0 1443.6ZM319.5 1449.5L321.0 1450.2L321.0 1445.1L319.5 1444.4ZM321.0 1450.2L322.5 1450.8L322.5 1445.8L321.0 1445.1ZM322.5 1450.8L324.0 1451.5L324.0 1446.4L322.5 1445.8ZM324.0 1451.5L325.5 1452.1L325.5 1447.1L324.0 1446.4ZM325.5 1452.1L327.0 1452.8L327.0 1447.7L325.5 1447.1ZM327.0 1452.8L328.5 1453.0L328.5 1448.2L327.0 1447.7ZM328.5 1453.0L330.0 1453.1L330.0 1448.7L328.5 1448.2ZM330.0 1453.1L331.5 1453.2L331.5 1449.2L330.0 1448.7ZM331.5 1453.2L333.0 1453.3L333.0 1449.7L331.5 1449.2ZM333.0 1453.3L334.5 1453.2L334.5 1450.1L333.0 1449.7ZM334.5 1453.2L336.0 1452.8L336.0 1450.2L334.5 1450.1ZM336.0 1452.8L337.5 1452.4L337.5 1450.4L336.0 1450.2ZM337.5 1452.4L339.0 1452.0L339.0 1450.5L337.5 1450.4ZM339.0 1452.0L340.5 1451.6L340.5 1450.7L339.0 1450.5ZM340.5 1451.6L342.0 1451.2L342.0 1450.6L340.5 1450.7ZM342.0 1451.2L343.5 1450.8L343.5 1450.6L342.0 1450.6ZM343.5 1450.8L345.0 1450.4L345.0 1450.6L343.5 1450.6ZM390.0 1441.3L391.5 1441.5L391.5 1441.3L390.0 1441.3ZM391.5 1441.5L393.0 1441.8L393.0 1441.4L391.5 1441.3ZM393.0 1441.8L394.5 1441.9L394.5 1441.4L393.0 1441.4ZM394.5 1441.9L396.0 1441.9L396.0 1441.5L394.5 1441.4ZM396.0 1441.9L397.5 1442.0L397.5 1441.6L396.0 1441.5ZM397.5 1442.0L399.0 1442.1L399.0 1441.6L397.5 1441.6ZM399.0 1442.1L400.5 1442.1L400.5 1441.7L399.0 1441.6ZM400.5 1442.1L402.0 1442.2L402.0 1441.7L400.5 1441.7ZM402.0 1442.2L403.5 1442.2L403.5 1441.8L402.0 1441.7ZM403.5 1442.2L405.0 1442.2L405.0 1441.8L403.5 1441.8ZM405.0 1442.2L406.5 1442.0L406.5 1441.8L405.0 1441.8ZM406.5 1442.0L408.0 1441.8L408.0 1441.7L406.5 1441.8ZM408.0 1441.8L409.5 1441.6L409.5 1441.6L408.0 1441.7ZM516.0 1427.8L517.5 1429.2L517.5 1428.0L516.0 1427.9ZM517.5 1429.2L519.0 1430.0L519.0 1428.2L517.5 1428.0ZM519.0 1430.0L520.5 1430.3L520.5 1428.4L519.0 1428.2ZM520.5 1430.3L522.0 1430.5L522.0 1428.6L520.5 1428.4ZM522.0 1430.5L523.5 1430.8L523.5 1428.9L522.0 1428.6ZM523.5 1430.8L525.0 1431.0L525.0 1429.1L523.5 1428.9ZM525.0 1431.0L526.5 1430.8L526.5 1429.3L525.0 1429.1ZM526.5 1430.8L528.0 1430.4L528.0 1429.4L526.5 1429.3ZM528.0 1430.4L529.5 1430.1L529.5 1429.3L528.0 1429.4ZM529.5 1430.1L531.0 1429.7L531.0 1429.2L529.5 1429.3ZM531.0 1429.7L532.5 1429.4L532.5 1429.1L531.0 1429.2ZM532.5 1429.4L534.0 1429.0L534.0 1429.0L532.5 1429.1ZM613.5 1408.3L615.0 1409.1L615.0 1408.1L613.5 1408.1ZM615.0 1409.1L616.5 1408.1L616.5 1408.1L615.0 1408.1ZM618.0 1407.8L619.5 1409.0L619.5 1408.2L618.0 1408.1ZM619.5 1409.0L621.0 1410.2L621.0 1408.5L619.5 1408.2ZM621.0 1410.2L622.5 1411.3L622.5 1408.8L621.0 1408.5ZM622.5 1411.3L624.0 1412.0L624.0 1409.1L622.5 1408.8ZM624.0 1412.0L625.5 1412.5L625.5 1409.4L624.0 1409.1ZM625.5 1412.5L627.0 1413.0L627.0 1409.7L625.5 1409.4ZM627.0 1413.0L628.5 1413.5L628.5 1410.0L627.0 1409.7ZM628.5 1413.5L630.0 1414.0L630.0 1410.4L628.5 1410.0ZM630.0 1414.0L631.5 1414.9L631.5 1410.9L630.0 1410.4ZM631.5 1414.9L633.0 1415.8L633.0 1411.4L631.5 1410.9ZM633.0 1415.8L634.5 1416.7L634.5 1411.9L633.0 1411.4ZM634.5 1416.7L636.0 1417.6L636.0 1412.5L634.5 1411.9ZM636.0 1417.6L637.5 1418.2L637.5 1413.3L636.0 1412.5ZM637.5 1418.2L639.0 1418.9L639.0 1414.0L637.5 1413.3ZM639.0 1418.9L640.5 1419.5L640.5 1414.8L639.0 1414.0ZM640.5 1419.5L642.0 1420.2L642.0 1415.5L640.5 1414.8ZM642.0 1420.2L643.5 1420.8L643.5 1416.1L642.0 1415.5ZM643.5 1420.8L645.0 1421.4L645.0 1416.6L643.5 1416.1ZM645.0 1421.4L646.5 1422.0L646.5 1417.1L645.0 1416.6ZM646.5 1422.0L648.0 1422.6L648.0 1417.6L646.5 1417.1ZM648.0 1422.6L649.5 1423.1L649.5 1418.1L648.0 1417.6ZM649.5 1423.1L651.0 1423.5L651.0 1418.5L649.5 1418.1ZM651.0 1423.5L652.5 1423.9L652.5 1419.0L651.0 1418.5ZM652.5 1423.9L654.0 1424.4L654.0 1419.4L652.5 1419.0ZM654.0 1424.4L655.5 1424.3L655.5 1419.9L654.0 1419.4ZM655.5 1424.3L657.0 1424.2L657.0 1420.3L655.5 1419.9ZM657.0 1424.2L658.5 1423.4L658.5 1420.8L657.0 1420.3ZM658.5 1423.4L660.0 1422.4L660.0 1420.9L658.5 1420.8ZM660.0 1422.4L661.5 1421.8L661.5 1421.1L660.0 1420.9ZM661.5 1421.8L663.0 1421.6L663.0 1421.2L661.5 1421.1ZM663.0 1421.6L664.5 1421.7L664.5 1421.4L663.0 1421.2ZM664.5 1421.7L666.0 1422.9L666.0 1421.7L664.5 1421.4ZM666.0 1422.9L667.5 1424.1L667.5 1422.1L666.0 1421.7ZM667.5 1424.1L669.0 1425.4L669.0 1422.6L667.5 1422.1ZM669.0 1425.4L670.5 1426.7L670.5 1423.0L669.0 1422.6ZM670.5 1426.7L672.0 1428.0L672.0 1423.5L670.5 1423.0ZM672.0 1428.0L673.5 1429.0L673.5 1424.1L672.0 1423.5ZM673.5 1429.0L675.0 1430.0L675.0 1424.8L673.5 1424.1ZM675.0 1430.0L676.5 1431.1L676.5 1425.4L675.0 1424.8ZM676.5 1431.1L678.0 1431.3L678.0 1426.1L676.5 1425.4ZM678.0 1431.3L679.5 1430.8L679.5 1426.3L678.0 1426.1ZM679.5 1430.8L681.0 1430.3L681.0 1426.5L679.5 1426.3ZM681.0 1430.3L682.5 1429.9L682.5 1426.8L681.0 1426.5ZM682.5 1429.9L684.0 1429.1L684.0 1426.9L682.5 1426.8ZM684.0 1429.1L685.5 1427.5L685.5 1426.8L684.0 1426.9ZM700.5 1425.3L702.0 1425.3L702.0 1425.3L700.5 1425.3ZM759.0 1399.8L760.5 1401.5L760.5 1399.9L759.0 1399.6ZM760.5 1401.5L762.0 1403.0L762.0 1400.3L760.5 1399.9ZM762.0 1403.0L763.5 1403.6L763.5 1400.7L762.0 1400.3ZM763.5 1403.6L765.0 1404.2L765.0 1400.8L763.5 1400.7ZM765.0 1404.2L766.5 1403.4L766.5 1400.8L765.0 1400.8ZM766.5 1403.4L768.0 1402.4L768.0 1400.8L766.5 1400.8ZM768.0 1402.4L769.5 1401.4L769.5 1400.8L768.0 1400.8ZM798.0 1375.6L799.5 1378.1L799.5 1376.2L798.0 1375.7ZM799.5 1378.1L801.0 1381.6L801.0 1376.9L799.5 1376.2ZM801.0 1381.6L802.5 1385.1L802.5 1378.2L801.0 1376.9ZM802.5 1385.1L804.0 1389.6L804.0 1379.5L802.5 1378.2ZM804.0 1389.6L805.5 1394.6L805.5 1380.9L804.0 1379.5ZM805.5 1394.6L807.0 1399.2L807.0 1383.5L805.5 1380.9ZM807.0 1399.2L808.5 1403.2L808.5 1386.1L807.0 1383.5ZM808.5 1403.2L810.0 1407.1L810.0 1388.8L808.5 1386.1ZM810.0 1407.1L811.5 1410.1L811.5 1391.5L810.0 1388.8ZM811.5 1410.1L813.0 1413.1L813.0 1394.2L811.5 1391.5ZM813.0 1413.1L814.5 1416.0L814.5 1396.9L813.0 1394.2ZM814.5 1416.0L816.0 1418.9L816.0 1399.5L814.5 1396.9ZM816.0 1418.9L817.5 1421.7L817.5 1402.1L816.0 1399.5ZM817.5 1421.7L819.0 1424.0L819.0 1404.7L817.5 1402.1ZM819.0 1424.0L820.5 1426.0L820.5 1407.3L819.0 1404.7ZM820.5 1426.0L822.0 1428.2L822.0 1409.6L820.5 1407.3ZM822.0 1428.2L823.5 1430.7L823.5 1411.7L822.0 1409.6ZM823.5 1430.7L825.0 1433.1L825.0 1413.7L823.5 1411.7ZM825.0 1433.1L826.5 1435.1L826.5 1415.7L825.0 1413.7ZM826.5 1435.1L828.0 1436.6L828.0 1417.8L826.5 1415.7ZM828.0 1436.6L829.5 1434.7L829.5 1419.9L828.0 1417.8ZM829.5 1434.7L831.0 1432.7L831.0 1421.6L829.5 1419.9ZM831.0 1432.7L832.5 1431.0L832.5 1422.1L831.0 1421.6ZM832.5 1431.0L834.0 1429.4L834.0 1422.6L832.5 1422.1ZM834.0 1429.4L835.5 1428.2L835.5 1423.2L834.0 1422.6ZM835.5 1428.2L837.0 1428.7L837.0 1424.0L835.5 1423.2ZM837.0 1428.7L838.5 1430.9L838.5 1424.7L837.0 1424.0ZM838.5 1430.9L840.0 1433.9L840.0 1425.6L838.5 1424.7ZM840.0 1433.9L841.5 1437.5L841.5 1427.3L840.0 1425.6ZM841.5 1437.5L843.0 1442.0L843.0 1428.9L841.5 1427.3ZM843.0 1442.0L844.5 1446.3L844.5 1430.6L843.0 1428.9ZM844.5 1446.3L846.0 1449.7L846.0 1432.7L844.5 1430.6ZM846.0 1449.7L847.5 1453.1L847.5 1434.8L846.0 1432.7ZM847.5 1453.1L849.0 1456.5L849.0 1436.9L847.5 1434.8ZM849.0 1456.5L850.5 1459.5L850.5 1439.6L849.0 1436.9ZM850.5 1459.5L852.0 1462.5L852.0 1442.3L850.5 1439.6ZM852.0 1462.5L853.5 1465.5L853.5 1445.0L852.0 1442.3ZM853.5 1465.5L855.0 1467.7L855.0 1447.7L853.5 1445.0ZM855.0 1467.7L856.5 1470.0L856.5 1450.1L855.0 1447.7ZM856.5 1470.0L858.0 1472.2L858.0 1452.5L856.5 1450.1ZM858.0 1472.2L859.5 1472.8L859.5 1454.9L858.0 1452.5ZM859.5 1472.8L861.0 1473.1L861.0 1457.0L859.5 1454.9ZM861.0 1473.1L862.5 1473.5L862.5 1458.8L861.0 1457.0ZM862.5 1473.5L864.0 1474.5L864.0 1460.5L862.5 1458.8ZM864.0 1474.5L865.5 1475.6L865.5 1462.3L864.0 1460.5ZM865.5 1475.6L867.0 1476.8L867.0 1464.0L865.5 1462.3ZM867.0 1476.8L868.5 1478.2L868.5 1465.6L867.0 1464.0ZM868.5 1478.2L870.0 1479.7L870.0 1467.1L868.5 1465.6ZM870.0 1479.7L871.5 1480.4L871.5 1468.6L870.0 1467.1ZM871.5 1480.4L873.0 1480.4L873.0 1470.1L871.5 1468.6ZM873.0 1480.4L874.5 1481.9L874.5 1471.5L873.0 1470.1ZM874.5 1481.9L876.0 1483.4L876.0 1472.6L874.5 1471.5ZM876.0 1483.4L877.5 1483.9L877.5 1473.7L876.0 1472.6ZM877.5 1483.9L879.0 1484.0L879.0 1474.8L877.5 1473.7ZM879.0 1484.0L880.5 1484.1L880.5 1475.9L879.0 1474.8ZM880.5 1484.1L882.0 1483.4L882.0 1476.5L880.5 1475.9ZM882.0 1483.4L883.5 1482.3L883.5 1476.8L882.0 1476.5ZM883.5 1482.3L885.0 1480.8L885.0 1477.1L883.5 1476.8ZM885.0 1480.8L886.5 1478.3L886.5 1477.4L885.0 1477.1ZM904.5 1471.8L906.0 1473.6L906.0 1471.8L904.5 1471.4ZM906.0 1473.6L907.5 1475.4L907.5 1472.2L906.0 1471.8ZM907.5 1475.4L909.0 1477.2L909.0 1472.7L907.5 1472.2ZM909.0 1477.2L910.5 1478.7L910.5 1473.3L909.0 1472.7ZM910.5 1478.7L912.0 1479.7L912.0 1474.2L910.5 1473.3ZM912.0 1479.7L913.5 1480.8L913.5 1475.1L912.0 1474.2ZM913.5 1480.8L915.0 1481.9L915.0 1476.0L913.5 1475.1ZM915.0 1481.9L916.5 1482.9L916.5 1476.7L915.0 1476.0ZM916.5 1482.9L918.0 1483.9L918.0 1477.4L916.5 1476.7ZM918.0 1483.9L919.5 1484.9L919.5 1478.1L918.0 1477.4ZM919.5 1484.9L921.0 1484.9L921.0 1478.7L919.5 1478.1ZM921.0 1484.9L922.5 1484.3L922.5 1479.1L921.0 1478.7ZM922.5 1484.3L924.0 1483.2L924.0 1479.5L922.5 1479.1ZM924.0 1483.2L925.5 1481.0L925.5 1479.9L924.0 1479.5ZM925.5 1481.0L927.0 1478.7L927.0 1479.4L925.5 1479.9Z" fill="#2a0606" stroke="#2a0606" stroke-width="0.4"/>
<path d="M1.5 1437.3V1436.1M4.5 1437.3V1436.1M7.5 1437.3V1436.1M10.5 1437.3V1436.1M13.5 1437.3V1436.1M16.5 1437.3V1436.1M19.5 1437.3V1436.1M22.5 1437.3V1436.1M25.5 1437.3V1436.1M28.5 1437.3V1436.1M31.5 1437.3V1436.1M34.5 1437.3V1436.1M37.5 1437.3V1436.4M76.5 1437.3V1436.4M79.5 1437.3V1436.5M82.5 1437.3V1436.5M85.5 1437.3V1436.5M88.5 1437.3V1436.5M91.5 1437.3V1436.4M94.5 1437.3V1436.4M97.5 1437.3V1436.4M100.5 1437.3V1436.4M103.5 1437.3V1436.4M106.5 1437.3V1436.4M109.5 1437.3V1436.3M112.5 1437.3V1436.3M115.5 1437.3V1436.3M118.5 1437.3V1436.3M121.5 1437.3V1436.4M139.5 1437.3V1436.5M142.5 1437.3V1436.3M145.5 1437.3V1436.2M148.5 1437.3V1436.2M151.5 1437.3V1436.2M154.5 1437.3V1436.2M157.5 1437.3V1436.1M160.5 1437.3V1436.3M178.5 1437.3V1436.4M181.5 1437.3V1436.3M184.5 1437.3V1436.3M186.5 1437.3V1436.3M189.5 1437.3V1436.3M192.5 1437.3V1436.3M195.5 1437.3V1436.3M198.5 1437.3V1436.3M201.5 1437.3V1436.3M204.5 1437.3V1436.3M279.5 1437.3V1436.5M282.5 1437.3V1436.5M285.5 1437.3V1436.5M288.5 1437.3V1436.5M291.5 1437.3V1436.5M348.5 1437.3V1436.3M351.5 1437.3V1436.0M354.5 1437.3V1435.7M357.5 1437.3V1435.4M360.5 1437.3V1434.8M363.5 1437.3V1434.1M366.5 1437.3V1433.6M369.5 1437.3V1433.2M372.5 1437.3V1432.8M375.5 1437.3V1433.2M378.5 1437.3V1433.6M381.5 1437.3V1434.2M384.5 1437.3V1435.1M387.5 1437.3V1435.9M390.5 1437.3V1436.4M405.5 1437.3V1436.5M408.5 1437.3V1436.5M411.5 1437.3V1436.5M414.5 1437.3V1436.5M417.5 1437.3V1436.4M420.5 1437.3V1436.4M423.5 1437.3V1436.4M426.5 1437.3V1436.4M429.5 1437.3V1436.4M432.5 1437.3V1436.4M435.5 1437.3V1436.4M438.5 1437.3V1436.4M441.5 1437.3V1436.3M444.5 1437.3V1436.3M447.5 1437.3V1436.3M450.5 1437.3V1436.3M453.5 1437.3V1436.1M456.5 1437.3V1435.9M459.5 1437.3V1435.7M462.5 1437.3V1435.4M465.5 1437.3V1435.3M468.5 1437.3V1435.3M471.5 1437.3V1435.3M474.5 1437.3V1435.3M477.5 1437.3V1435.3M480.5 1437.3V1435.3M483.5 1437.3V1435.3M486.5 1437.3V1435.3M489.5 1437.3V1435.4M492.5 1437.3V1435.5M495.5 1437.3V1435.6M498.5 1437.3V1435.7M501.5 1437.3V1435.7M504.5 1437.3V1435.6M507.5 1437.3V1435.5M510.5 1437.3V1435.5M516.5 1437.3V1436.6M533.5 1437.3V1436.2M536.5 1437.3V1435.4M539.5 1437.3V1434.6M542.5 1437.3V1433.7M545.5 1437.3V1432.9M548.5 1437.3V1432.9M551.5 1437.3V1433.0M554.5 1437.3V1433.1M557.5 1437.3V1433.2M560.5 1437.3V1433.4M563.5 1437.3V1433.5M566.5 1437.3V1433.4M569.5 1437.3V1433.3M572.5 1437.3V1433.1M575.5 1437.3V1433.0M578.5 1437.3V1432.9M581.5 1437.3V1432.5M584.5 1437.3V1431.6M587.5 1437.3V1430.9M590.5 1437.3V1432.2M593.5 1437.3V1433.5M596.5 1437.3V1434.0M599.5 1437.3V1434.3M602.5 1437.3V1434.6M605.5 1437.3V1434.9M608.5 1437.3V1435.1M611.5 1437.3V1436.3M686.5 1437.3V1436.0M689.5 1437.3V1435.1M692.5 1437.3V1435.0M695.5 1437.3V1435.2M698.5 1437.3V1435.5M701.5 1437.3V1435.8M704.5 1437.3V1434.4M707.5 1437.3V1432.9M710.5 1437.3V1431.5M713.5 1437.3V1430.0M716.5 1437.3V1428.6M719.5 1437.3V1427.2M722.5 1437.3V1427.8M725.5 1437.3V1429.3M728.5 1437.3V1430.7M731.5 1437.3V1432.1M734.5 1437.3V1432.7M737.5 1437.3V1433.2M740.5 1437.3V1433.7M743.5 1437.3V1432.5M746.5 1437.3V1430.9M749.5 1437.3V1432.1M752.5 1437.3V1433.6M755.5 1437.3V1435.1M770.5 1437.3V1435.0M773.5 1437.3V1427.8M776.5 1437.3V1423.2M779.5 1437.3V1418.7M782.5 1437.3V1418.2M785.5 1437.3V1420.7M788.5 1437.3V1424.4M791.5 1437.3V1429.2M794.5 1437.3V1433.8M797.5 1437.3V1436.0M889.5 1437.3V1434.5M892.5 1437.3V1432.3M895.5 1437.3V1430.2M898.5 1437.3V1432.2M901.5 1437.3V1435.0M928.5 1437.3V1434.8M931.5 1437.3V1430.4M934.5 1437.3V1428.4M937.5 1437.3V1426.4M940.5 1437.3V1424.5M943.5 1437.3V1423.0M946.5 1437.3V1424.5M949.5 1437.3V1426.1M952.5 1437.3V1428.3M955.5 1437.3V1430.6M958.5 1437.3V1429.1M961.5 1437.3V1427.2M964.5 1437.3V1424.0M967.5 1437.3V1420.7M970.5 1437.3V1419.3M973.5 1437.3V1418.7M976.5 1437.3V1418.0M979.5 1437.3V1417.4M982.5 1437.3V1416.9M985.5 1437.3V1416.6M988.5 1437.3V1416.2M991.5 1437.3V1416.0M994.5 1437.3V1418.8M997.5 1437.3V1421.7M1000.5 1437.3V1423.7M1003.5 1437.3V1425.4M1006.5 1437.3V1426.9M1009.5 1437.3V1428.2M1012.5 1437.3V1428.4M1015.5 1437.3V1427.7" stroke="#5fd35f" stroke-width="1.1" fill="none"/>
<path d="M40.5 1437.3V1438.1M43.5 1437.3V1438.2M46.5 1437.3V1438.3M49.5 1437.3V1438.3M52.5 1437.3V1438.4M55.5 1437.3V1438.5M58.5 1437.3V1438.5M61.5 1437.3V1438.6M64.5 1437.3V1438.7M67.5 1437.3V1438.7M70.5 1437.3V1438.7M73.5 1437.3V1438.2M124.5 1437.3V1438.2M127.5 1437.3V1438.2M130.5 1437.3V1438.2M133.5 1437.3V1438.2M136.5 1437.3V1438.2M163.5 1437.3V1438.2M166.5 1437.3V1438.5M169.5 1437.3V1438.6M172.5 1437.3V1438.7M175.5 1437.3V1438.5M207.5 1437.3V1438.2M210.5 1437.3V1438.3M213.5 1437.3V1438.3M216.5 1437.3V1438.4M219.5 1437.3V1438.4M222.5 1437.3V1438.4M225.5 1437.3V1438.4M228.5 1437.3V1438.4M231.5 1437.3V1438.4M234.5 1437.3V1438.5M237.5 1437.3V1438.5M240.5 1437.3V1438.5M243.5 1437.3V1438.2M246.5 1437.3V1438.1M249.5 1437.3V1438.1M252.5 1437.3V1438.1M255.5 1437.3V1438.2M258.5 1437.3V1438.2M261.5 1437.3V1438.2M264.5 1437.3V1438.2M267.5 1437.3V1438.2M270.5 1437.3V1438.3M273.5 1437.3V1438.3M276.5 1437.3V1438.2M294.5 1437.3V1438.6M297.5 1437.3V1440.4M300.5 1437.3V1442.2M303.5 1437.3V1442.9M306.5 1437.3V1443.6M309.5 1437.3V1444.3M312.5 1437.3V1444.6M315.5 1437.3V1444.7M318.5 1437.3V1444.5M321.5 1437.3V1444.2M324.5 1437.3V1443.7M327.5 1437.3V1443.2M330.5 1437.3V1442.2M333.5 1437.3V1441.2M336.5 1437.3V1440.3M339.5 1437.3V1439.5M342.5 1437.3V1438.8M345.5 1437.3V1438.2M393.5 1437.3V1438.3M396.5 1437.3V1438.3M399.5 1437.3V1438.3M402.5 1437.3V1438.2M513.5 1437.3V1438.2M518.5 1437.3V1438.6M521.5 1437.3V1440.6M524.5 1437.3V1439.9M527.5 1437.3V1439.1M530.5 1437.3V1438.4M614.5 1437.3V1438.1M617.5 1437.3V1439.0M620.5 1437.3V1439.8M623.5 1437.3V1440.7M626.5 1437.3V1441.2M629.5 1437.3V1441.7M632.5 1437.3V1442.2M635.5 1437.3V1442.7M638.5 1437.3V1443.2M641.5 1437.3V1443.7M644.5 1437.3V1443.5M647.5 1437.3V1443.0M650.5 1437.3V1442.6M653.5 1437.3V1442.2M656.5 1437.3V1441.6M659.5 1437.3V1440.0M662.5 1437.3V1439.0M665.5 1437.3V1439.3M668.5 1437.3V1440.5M671.5 1437.3V1441.6M674.5 1437.3V1442.8M677.5 1437.3V1441.6M680.5 1437.3V1440.5M683.5 1437.3V1439.4M758.5 1437.3V1438.7M761.5 1437.3V1440.1M764.5 1437.3V1441.2M767.5 1437.3V1440.5M800.5 1437.3V1442.8M803.5 1437.3V1447.6M806.5 1437.3V1452.5M809.5 1437.3V1455.8M812.5 1437.3V1458.2M815.5 1437.3V1459.6M818.5 1437.3V1459.1M821.5 1437.3V1458.6M824.5 1437.3V1458.1M827.5 1437.3V1455.7M830.5 1437.3V1451.4M833.5 1437.3V1445.3M836.5 1437.3V1443.1M839.5 1437.3V1446.0M842.5 1437.3V1450.5M845.5 1437.3V1453.9M848.5 1437.3V1455.5M850.5 1437.3V1456.6M853.5 1437.3V1458.2M856.5 1437.3V1457.6M859.5 1437.3V1455.5M862.5 1437.3V1453.4M865.5 1437.3V1452.5M868.5 1437.3V1451.7M871.5 1437.3V1450.9M874.5 1437.3V1449.5M877.5 1437.3V1448.1M880.5 1437.3V1446.6M883.5 1437.3V1443.1M886.5 1437.3V1438.2M904.5 1437.3V1438.3M907.5 1437.3V1440.0M910.5 1437.3V1441.7M913.5 1437.3V1443.3M916.5 1437.3V1445.0M919.5 1437.3V1443.0M922.5 1437.3V1440.8M925.5 1437.3V1438.6" stroke="#e06c68" stroke-width="1.1" fill="none"/>
<path d="M1 1437.3H2294" stroke="#3030d0" stroke-width="1.2" fill="none"/>
<path d="M0.0 1433.4 L1.5 1433.4 L3.0 1433.1 L4.5 1432.8 L6.0 1432.5 L7.5 1432.3 L9.0 1432.0 L10.5 1431.7 L12.0 1431.4 L13.5 1431.1 L15.0 1430.9 L16.5 1430.8 L18.0 1430.8 L19.5 1430.8 L21.0 1430.8 L22.5 1430.8 L24.0 1430.8 L25.5 1430.8 L27.0 1430.8 L28.5 1430.8 L30.0 1430.8 L31.5 1430.8 L33.0 1430.8 L34.5 1430.8 L36.0 1430.8 L37.5 1430.8 L39.0 1430.9 L40.5 1431.1 L42.0 1431.2 L43.5 1431.4 L45.0 1431.5 L46.5 1431.7 L48.0 1431.8 L49.5 1432.0 L51.0 1432.1 L52.5 1432.3 L54.0 1432.4 L55.5 1432.5 L57.0 1432.6 L58.5 1432.7 L60.0 1432.8 L61.5 1432.9 L63.0 1433.0 L64.5 1433.1 L66.0 1433.3 L67.5 1433.4 L69.0 1433.4 L70.5 1433.3 L72.0 1433.2 L73.5 1433.0 L75.0 1432.9 L76.5 1432.8 L78.0 1432.7 L79.5 1432.6 L81.0 1432.4 L82.5 1432.2 L84.0 1432.0 L85.5 1431.8 L87.0 1431.7 L88.5 1431.5 L90.0 1431.3 L91.5 1431.1 L93.0 1430.9 L94.5 1430.7 L96.0 1430.5 L97.5 1430.3 L99.0 1430.1 L100.5 1429.9 L102.0 1429.7 L103.5 1429.5 L105.0 1429.4 L106.5 1429.4 L108.0 1429.3 L109.5 1429.2 L111.0 1429.2 L112.5 1429.1 L114.0 1429.1 L115.5 1429.0 L117.0 1429.0 L118.5 1429.0 L120.0 1429.0 L121.5 1429.0 L123.0 1429.0 L124.5 1429.0 L126.0 1429.0 L127.5 1429.0 L129.0 1429.0 L130.5 1429.0 L132.0 1429.0 L133.5 1429.0 L135.0 1429.0 L136.5 1429.0 L138.0 1429.0 L139.5 1429.0 L141.0 1429.0 L142.5 1428.9 L144.0 1428.8 L145.5 1428.6 L147.0 1428.5 L148.5 1428.3 L150.0 1428.2 L151.5 1428.1 L153.0 1428.1 L154.5 1428.1 L156.0 1428.1 L157.5 1428.1 L159.0 1428.1 L160.5 1428.2 L162.0 1428.4 L163.5 1428.5 L165.0 1428.6 L166.5 1428.7 L168.0 1428.8 L169.5 1429.0 L171.0 1429.0 L172.5 1429.1 L174.0 1429.2 L175.5 1429.2 L177.0 1429.3 L178.5 1429.3 L180.0 1429.4 L181.5 1429.4 L183.0 1429.3 L184.5 1429.2 L186.0 1429.1 L187.5 1429.0 L189.0 1428.9 L190.5 1428.8 L192.0 1428.7 L193.5 1428.6 L195.0 1428.6 L196.5 1428.5 L198.0 1428.5 L199.5 1428.5 L201.0 1428.4 L202.5 1428.4 L204.0 1428.4 L205.5 1428.4 L207.0 1428.5 L208.5 1428.7 L210.0 1428.9 L211.5 1429.1 L213.0 1429.2 L214.5 1429.4 L216.0 1429.6 L217.5 1429.8 L219.0 1430.1 L220.5 1430.3 L222.0 1430.6 L223.5 1430.8 L225.0 1430.9 L226.5 1430.9 L228.0 1431.0 L229.5 1431.1 L231.0 1431.2 L232.5 1431.2 L234.0 1431.2 L235.5 1431.2 L237.0 1431.1 L238.5 1431.1 L240.0 1431.1 L241.5 1431.0 L243.0 1431.0 L244.5 1431.1 L246.0 1431.2 L247.5 1431.3 L249.0 1431.4 L250.5 1431.4 L252.0 1431.5 L253.5 1431.6 L255.0 1431.7 L256.5 1431.8 L258.0 1431.9 L259.5 1432.0 L261.0 1432.1 L262.5 1432.3 L264.0 1432.4 L265.5 1432.5 L267.0 1432.6 L268.5 1432.7 L270.0 1432.8 L271.5 1432.8 L273.0 1432.8 L274.5 1432.8 L276.0 1432.8 L277.5 1432.8 L279.0 1432.7 L280.5 1432.7 L282.0 1432.7 L283.5 1432.7 L285.0 1432.7 L286.5 1432.6 L288.0 1432.6 L289.5 1432.6 L291.0 1432.6 L292.5 1432.7 L294.0 1432.9 L295.5 1433.1 L297.0 1433.4 L298.5 1433.8 L300.0 1434.3 L301.5 1434.9 L303.0 1435.4 L304.5 1435.9 L306.0 1436.7 L307.5 1437.7 L309.0 1438.7 L310.5 1439.7 L312.0 1440.6 L313.5 1441.4 L315.0 1442.1 L316.5 1442.9 L318.0 1443.6 L319.5 1444.4 L321.0 1445.1 L322.5 1445.8 L324.0 1446.4 L325.5 1447.1 L327.0 1447.7 L328.5 1448.2 L330.0 1448.7 L331.5 1449.2 L333.0 1449.7 L334.5 1450.1 L336.0 1450.2 L337.5 1450.4 L339.0 1450.5 L340.5 1450.7 L342.0 1450.6 L343.5 1450.6 L345.0 1450.6 L346.5 1450.5 L348.0 1450.5 L349.5 1450.4 L351.0 1450.2 L352.5 1449.9 L354.0 1449.6 L355.5 1449.3 L357.0 1449.1 L358.5 1448.8 L360.0 1448.5 L361.5 1448.1 L363.0 1447.6 L364.5 1447.1 L366.0 1446.6 L367.5 1446.2 L369.0 1445.7 L370.5 1445.2 L372.0 1444.7 L373.5 1444.2 L375.0 1443.7 L376.5 1443.2 L378.0 1442.7 L379.5 1442.4 L381.0 1442.0 L382.5 1441.7 L384.0 1441.3 L385.5 1441.2 L387.0 1441.2 L388.5 1441.3 L390.0 1441.3 L391.5 1441.3 L393.0 1441.4 L394.5 1441.4 L396.0 1441.5 L397.5 1441.6 L399.0 1441.6 L400.5 1441.7 L402.0 1441.7 L403.5 1441.8 L405.0 1441.8 L406.5 1441.8 L408.0 1441.7 L409.5 1441.6 L411.0 1441.6 L412.5 1441.5 L414.0 1441.5 L415.5 1441.4 L417.0 1441.3 L418.5 1441.2 L420.0 1441.1 L421.5 1441.1 L423.0 1441.0 L424.5 1440.9 L426.0 1440.8 L427.5 1440.7 L429.0 1440.6 L430.5 1440.5 L432.0 1440.4 L433.5 1440.2 L435.0 1440.0 L436.5 1439.8 L438.0 1439.5 L439.5 1439.3 L441.0 1439.1 L442.5 1438.9 L444.0 1438.7 L445.5 1438.4 L447.0 1438.2 L448.5 1438.0 L450.0 1437.7 L451.5 1437.5 L453.0 1437.2 L454.5 1436.9 L456.0 1436.6 L457.5 1436.3 L459.0 1436.0 L460.5 1435.7 L462.0 1435.4 L463.5 1435.1 L465.0 1434.8 L466.5 1434.5 L468.0 1434.3 L469.5 1434.0 L471.0 1433.8 L472.5 1433.5 L474.0 1433.3 L475.5 1433.0 L477.0 1432.8 L478.5 1432.5 L480.0 1432.3 L481.5 1432.0 L483.0 1431.6 L484.5 1431.3 L486.0 1431.0 L487.5 1430.7 L489.0 1430.3 L490.5 1430.0 L492.0 1429.7 L493.5 1429.5 L495.0 1429.5 L496.5 1429.5 L498.0 1429.5 L499.5 1429.5 L501.0 1429.2 L502.5 1428.9 L504.0 1428.5 L505.5 1428.1 L507.0 1427.7 L508.5 1427.4 L510.0 1427.3 L511.5 1427.4 L513.0 1427.6 L514.5 1427.7 L516.0 1427.9 L517.5 1428.0 L519.0 1428.2 L520.5 1428.4 L522.0 1428.6 L523.5 1428.9 L525.0 1429.1 L526.5 1429.3 L528.0 1429.4 L529.5 1429.3 L531.0 1429.2 L532.5 1429.1 L534.0 1429.0 L535.5 1428.9 L537.0 1428.7 L538.5 1428.5 L540.0 1428.2 L541.5 1428.0 L543.0 1427.7 L544.5 1427.2 L546.0 1426.5 L547.5 1425.7 L549.0 1425.0 L550.5 1424.2 L552.0 1423.8 L553.5 1423.5 L555.0 1423.1 L556.5 1422.7 L558.0 1422.3 L559.5 1422.0 L561.0 1421.5 L562.5 1421.0 L564.0 1420.5 L565.5 1420.0 L567.0 1419.5 L568.5 1419.0 L570.0 1418.7 L571.5 1418.4 L573.0 1418.1 L574.5 1417.8 L576.0 1417.5 L577.5 1417.2 L579.0 1416.9 L580.5 1416.2 L582.0 1415.5 L583.5 1414.7 L585.0 1414.0 L586.5 1413.3 L588.0 1412.8 L589.5 1412.3 L591.0 1411.9 L592.5 1411.4 L594.0 1410.9 L595.5 1410.6 L597.0 1410.2 L598.5 1409.9 L600.0 1409.5 L601.5 1409.2 L603.0 1409.0 L604.5 1408.8 L606.0 1408.7 L607.5 1408.5 L609.0 1408.3 L610.5 1408.1 L612.0 1408.1 L613.5 1408.1 L615.0 1408.1 L616.5 1408.1 L618.0 1408.1 L619.5 1408.2 L621.0 1408.5 L622.5 1408.8 L624.0 1409.1 L625.5 1409.4 L627.0 1409.7 L628.5 1410.0 L630.0 1410.4 L631.5 1410.9 L633.0 1411.4 L634.5 1411.9 L636.0 1412.5 L637.5 1413.3 L639.0 1414.0 L640.5 1414.8 L642.0 1415.5 L643.5 1416.1 L645.0 1416.6 L646.5 1417.1 L648.0 1417.6 L649.5 1418.1 L651.0 1418.5 L652.5 1419.0 L654.0 1419.4 L655.5 1419.9 L657.0 1420.3 L658.5 1420.8 L660.0 1420.9 L661.5 1421.1 L663.0 1421.2 L664.5 1421.4 L666.0 1421.7 L667.5 1422.1 L669.0 1422.6 L670.5 1423.0 L672.0 1423.5 L673.5 1424.1 L675.0 1424.8 L676.5 1425.4 L678.0 1426.1 L679.5 1426.3 L681.0 1426.5 L682.5 1426.8 L684.0 1426.9 L685.5 1426.8 L687.0 1426.7 L688.5 1426.6 L690.0 1426.5 L691.5 1426.3 L693.0 1426.1 L694.5 1425.8 L696.0 1425.6 L697.5 1425.3 L699.0 1425.3 L700.5 1425.3 L702.0 1425.3 L703.5 1425.3 L705.0 1425.0 L706.5 1424.3 L708.0 1423.5 L709.5 1422.8 L711.0 1422.0 L712.5 1420.9 L714.0 1419.8 L715.5 1418.6 L717.0 1417.5 L718.5 1416.3 L720.0 1415.3 L721.5 1414.2 L723.0 1413.1 L724.5 1412.0 L726.0 1411.0 L727.5 1410.2 L729.0 1409.5 L730.5 1408.8 L732.0 1408.1 L733.5 1407.7 L735.0 1407.3 L736.5 1406.9 L738.0 1406.5 L739.5 1405.9 L741.0 1405.0 L742.5 1404.2 L744.0 1403.3 L745.5 1402.5 L747.0 1401.9 L748.5 1401.4 L750.0 1400.9 L751.5 1400.4 L753.0 1400.0 L754.5 1399.9 L756.0 1399.7 L757.5 1399.5 L759.0 1399.6 L760.5 1399.9 L762.0 1400.3 L763.5 1400.7 L765.0 1400.8 L766.5 1400.8 L768.0 1400.8 L769.5 1400.8 L771.0 1399.6 L772.5 1398.2 L774.0 1396.9 L775.5 1395.5 L777.0 1393.4 L778.5 1391.3 L780.0 1389.2 L781.5 1387.1 L783.0 1385.0 L784.5 1382.9 L786.0 1380.8 L787.5 1379.0 L789.0 1377.9 L790.5 1376.8 L792.0 1375.9 L793.5 1375.6 L795.0 1375.3 L796.5 1375.2 L798.0 1375.7 L799.5 1376.2 L801.0 1376.9 L802.5 1378.2 L804.0 1379.5 L805.5 1380.9 L807.0 1383.5 L808.5 1386.1 L810.0 1388.8 L811.5 1391.5 L813.0 1394.2 L814.5 1396.9 L816.0 1399.5 L817.5 1402.1 L819.0 1404.7 L820.5 1407.3 L822.0 1409.6 L823.5 1411.7 L825.0 1413.7 L826.5 1415.7 L828.0 1417.8 L829.5 1419.9 L831.0 1421.6 L832.5 1422.1 L834.0 1422.6 L835.5 1423.2 L837.0 1424.0 L838.5 1424.7 L840.0 1425.6 L841.5 1427.3 L843.0 1428.9 L844.5 1430.6 L846.0 1432.7 L847.5 1434.8 L849.0 1436.9 L850.5 1439.6 L852.0 1442.3 L853.5 1445.0 L855.0 1447.7 L856.5 1450.1 L858.0 1452.5 L859.5 1454.9 L861.0 1457.0 L862.5 1458.8 L864.0 1460.5 L865.5 1462.3 L867.0 1464.0 L868.5 1465.6 L870.0 1467.1 L871.5 1468.6 L873.0 1470.1 L874.5 1471.5 L876.0 1472.6 L877.5 1473.7 L879.0 1474.8 L880.5 1475.9 L882.0 1476.5 L883.5 1476.8 L885.0 1477.1 L886.5 1477.4 L888.0 1476.9 L889.5 1476.2 L891.0 1475.5 L892.5 1474.7 L894.0 1474.0 L895.5 1473.2 L897.0 1472.4 L898.5 1471.7 L900.0 1471.6 L901.5 1471.5 L903.0 1471.3 L904.5 1471.4 L906.0 1471.8 L907.5 1472.2 L909.0 1472.7 L910.5 1473.3 L912.0 1474.2 L913.5 1475.1 L915.0 1476.0 L916.5 1476.7 L918.0 1477.4 L919.5 1478.1 L921.0 1478.7 L922.5 1479.1 L924.0 1479.5 L925.5 1479.9 L927.0 1479.4 L928.5 1478.6 L930.0 1477.8 L931.5 1477.0 L933.0 1475.9 L934.5 1474.8 L936.0 1473.7 L937.5 1472.0 L939.0 1470.3 L940.5 1468.5 L942.0 1466.8 L943.5 1465.1 L945.0 1463.6 L946.5 1462.1 L948.0 1460.6 L949.5 1459.1 L951.0 1457.9 L952.5 1456.9 L954.0 1455.9 L955.5 1454.9 L957.0 1453.9 L958.5 1452.4 L960.0 1450.9 L961.5 1449.4 L963.0 1447.9 L964.5 1446.1 L966.0 1444.1 L967.5 1442.1 L969.0 1440.1 L970.5 1438.1 L972.0 1435.7 L973.5 1433.2 L975.0 1430.7 L976.5 1428.2 L978.0 1425.7 L979.5 1423.2 L981.0 1420.7 L982.5 1418.2 L984.0 1415.7 L985.5 1413.4 L987.0 1411.1 L988.5 1408.9 L990.0 1406.6 L991.5 1404.4 L993.0 1402.4 L994.5 1400.4 L996.0 1398.4 L997.5 1396.4 L999.0 1394.7 L1000.5 1393.2 L1002.0 1391.7 L1003.5 1390.2 L1005.0 1388.7 L1006.5 1387.3 L1008.0 1386.0 L1009.5 1384.7 L1011.0 1383.4 L1012.5 1382.2 L1014.0 1380.9 L1015.5 1379.7 L1015.9 1379.4" fill="none" stroke="#e06c68" stroke-width="1"/>
<path d="M0.0 1432.8 L1.5 1432.7 L3.0 1432.4 L4.5 1432.1 L6.0 1431.9 L7.5 1431.6 L9.0 1431.3 L10.5 1431.0 L12.0 1430.8 L13.5 1430.5 L15.0 1430.2 L16.5 1430.1 L18.0 1430.2 L19.5 1430.2 L21.0 1430.2 L22.5 1430.3 L24.0 1430.3 L25.5 1430.3 L27.0 1430.4 L28.5 1430.4 L30.0 1430.4 L31.5 1430.4 L33.0 1430.5 L34.5 1430.5 L36.0 1430.5 L37.5 1430.6 L39.0 1430.8 L40.5 1431.0 L42.0 1431.2 L43.5 1431.4 L45.0 1431.6 L46.5 1431.8 L48.0 1432.1 L49.5 1432.3 L51.0 1432.5 L52.5 1432.7 L54.0 1432.9 L55.5 1433.1 L57.0 1433.3 L58.5 1433.6 L60.0 1433.8 L61.5 1434.0 L63.0 1434.2 L64.5 1434.4 L66.0 1434.6 L67.5 1434.8 L69.0 1434.8 L70.5 1434.4 L72.0 1433.9 L73.5 1433.5 L75.0 1433.0 L76.5 1432.6 L78.0 1432.1 L79.5 1431.7 L81.0 1431.4 L82.5 1431.1 L84.0 1430.8 L85.5 1430.5 L87.0 1430.2 L88.5 1429.9 L90.0 1429.6 L91.5 1429.4 L93.0 1429.3 L94.5 1429.1 L96.0 1429.0 L97.5 1428.9 L99.0 1428.8 L100.5 1428.6 L102.0 1428.5 L103.5 1428.4 L105.0 1428.5 L106.5 1428.6 L108.0 1428.8 L109.5 1428.9 L111.0 1429.1 L112.5 1429.2 L114.0 1429.4 L115.5 1429.4 L117.0 1429.4 L118.5 1429.4 L120.0 1429.4 L121.5 1429.3 L123.0 1429.3 L124.5 1429.3 L126.0 1429.3 L127.5 1429.2 L129.0 1429.2 L130.5 1429.2 L132.0 1429.2 L133.5 1429.1 L135.0 1429.1 L136.5 1429.1 L138.0 1429.1 L139.5 1429.0 L141.0 1429.0 L142.5 1428.9 L144.0 1428.6 L145.5 1428.4 L147.0 1428.2 L148.5 1428.0 L150.0 1427.7 L151.5 1427.7 L153.0 1427.8 L154.5 1427.8 L156.0 1427.8 L157.5 1427.9 L159.0 1427.9 L160.5 1428.2 L162.0 1428.5 L163.5 1428.8 L165.0 1429.1 L166.5 1429.4 L168.0 1429.7 L169.5 1430.0 L171.0 1430.1 L172.5 1430.0 L174.0 1430.0 L175.5 1429.9 L177.0 1429.9 L178.5 1429.8 L180.0 1429.7 L181.5 1429.7 L183.0 1429.5 L184.5 1429.3 L186.0 1429.1 L187.5 1428.9 L189.0 1428.7 L190.5 1428.5 L192.0 1428.3 L193.5 1428.1 L195.0 1427.9 L196.5 1427.9 L198.0 1427.9 L199.5 1427.9 L201.0 1427.9 L202.5 1427.9 L204.0 1427.9 L205.5 1427.9 L207.0 1428.3 L208.5 1428.7 L210.0 1429.0 L211.5 1429.4 L213.0 1429.8 L214.5 1430.2 L216.0 1430.6 L217.5 1430.9 L219.0 1431.2 L220.5 1431.4 L222.0 1431.7 L223.5 1431.9 L225.0 1431.8 L226.5 1431.6 L228.0 1431.5 L229.5 1431.4 L231.0 1431.3 L232.5 1431.2 L234.0 1431.2 L235.5 1431.1 L237.0 1431.0 L238.5 1431.0 L240.0 1430.9 L241.5 1430.9 L243.0 1430.8 L244.5 1431.0 L246.0 1431.2 L247.5 1431.4 L249.0 1431.6 L250.5 1431.8 L252.0 1432.0 L253.5 1432.2 L255.0 1432.4 L256.5 1432.5 L258.0 1432.6 L259.5 1432.7 L261.0 1432.8 L262.5 1432.9 L264.0 1433.0 L265.5 1433.1 L267.0 1433.2 L268.5 1433.3 L270.0 1433.4 L271.5 1433.1 L273.0 1432.9 L274.5 1432.6 L276.0 1432.4 L277.5 1432.3 L279.0 1432.3 L280.5 1432.3 L282.0 1432.3 L283.5 1432.3 L285.0 1432.3 L286.5 1432.3 L288.0 1432.3 L289.5 1432.3 L291.0 1432.3 L292.5 1432.6 L294.0 1433.2 L295.5 1433.8 L297.0 1434.4 L298.5 1435.4 L300.0 1436.4 L301.5 1437.5 L303.0 1438.6 L304.5 1439.6 L306.0 1440.8 L307.5 1442.1 L309.0 1443.3 L310.5 1444.6 L312.0 1445.7 L313.5 1446.5 L315.0 1447.2 L316.5 1448.0 L318.0 1448.7 L319.5 1449.5 L321.0 1450.2 L322.5 1450.8 L324.0 1451.5 L325.5 1452.1 L327.0 1452.8 L328.5 1453.0 L330.0 1453.1 L331.5 1453.2 L333.0 1453.3 L334.5 1453.2 L336.0 1452.8 L337.5 1452.4 L339.0 1452.0 L340.5 1451.6 L342.0 1451.2 L343.5 1450.8 L345.0 1450.4 L346.5 1450.1 L348.0 1449.7 L349.5 1449.3 L351.0 1449.0 L352.5 1448.6 L354.0 1448.2 L355.5 1447.9 L357.0 1447.5 L358.5 1447.2 L360.0 1446.8 L361.5 1446.2 L363.0 1445.6 L364.5 1445.0 L366.0 1444.3 L367.5 1443.7 L369.0 1443.0 L370.5 1442.6 L372.0 1442.2 L373.5 1441.8 L375.0 1441.4 L376.5 1440.9 L378.0 1440.5 L379.5 1440.5 L381.0 1440.5 L382.5 1440.5 L384.0 1440.5 L385.5 1440.6 L387.0 1440.9 L388.5 1441.1 L390.0 1441.3 L391.5 1441.5 L393.0 1441.8 L394.5 1441.9 L396.0 1441.9 L397.5 1442.0 L399.0 1442.1 L400.5 1442.1 L402.0 1442.2 L403.5 1442.2 L405.0 1442.2 L406.5 1442.0 L408.0 1441.8 L409.5 1441.6 L411.0 1441.4 L412.5 1441.2 L414.0 1441.0 L415.5 1440.8 L417.0 1440.7 L418.5 1440.6 L420.0 1440.5 L421.5 1440.5 L423.0 1440.4 L424.5 1440.4 L426.0 1440.3 L427.5 1440.2 L429.0 1440.2 L430.5 1440.1 L432.0 1439.9 L433.5 1439.6 L435.0 1439.3 L436.5 1439.0 L438.0 1438.7 L439.5 1438.4 L441.0 1438.1 L442.5 1437.8 L444.0 1437.5 L445.5 1437.2 L447.0 1436.9 L448.5 1436.6 L450.0 1436.3 L451.5 1436.0 L453.0 1435.7 L454.5 1435.4 L456.0 1435.1 L457.5 1434.8 L459.0 1434.5 L460.5 1434.2 L462.0 1433.9 L463.5 1433.6 L465.0 1433.3 L466.5 1433.0 L468.0 1432.7 L469.5 1432.3 L471.0 1432.0 L472.5 1431.7 L474.0 1431.4 L475.5 1431.0 L477.0 1430.7 L478.5 1430.4 L480.0 1430.1 L481.5 1429.8 L483.0 1429.6 L484.5 1429.3 L486.0 1429.1 L487.5 1428.8 L489.0 1428.6 L490.5 1428.3 L492.0 1428.1 L493.5 1427.9 L495.0 1428.0 L496.5 1428.0 L498.0 1428.0 L499.5 1428.1 L501.0 1427.6 L502.5 1426.9 L504.0 1426.2 L505.5 1425.5 L507.0 1425.4 L508.5 1425.5 L510.0 1425.6 L511.5 1425.7 L513.0 1425.8 L514.5 1426.5 L516.0 1427.8 L517.5 1429.2 L519.0 1430.0 L520.5 1430.3 L522.0 1430.5 L523.5 1430.8 L525.0 1431.0 L526.5 1430.8 L528.0 1430.4 L529.5 1430.1 L531.0 1429.7 L532.5 1429.4 L534.0 1429.0 L535.5 1428.6 L537.0 1428.2 L538.5 1427.8 L540.0 1426.8 L541.5 1425.6 L543.0 1424.3 L544.5 1423.1 L546.0 1421.9 L547.5 1421.5 L549.0 1421.0 L550.5 1420.6 L552.0 1420.2 L553.5 1419.7 L555.0 1419.5 L556.5 1419.2 L558.0 1419.0 L559.5 1418.8 L561.0 1418.6 L562.5 1418.3 L564.0 1417.7 L565.5 1417.1 L567.0 1416.5 L568.5 1415.9 L570.0 1415.4 L571.5 1414.9 L573.0 1414.5 L574.5 1414.1 L576.0 1413.6 L577.5 1413.2 L579.0 1412.8 L580.5 1411.9 L582.0 1410.9 L583.5 1409.9 L585.0 1408.9 L586.5 1408.0 L588.0 1407.5 L589.5 1406.9 L591.0 1406.6 L592.5 1406.9 L594.0 1407.2 L595.5 1407.4 L597.0 1407.4 L598.5 1407.4 L600.0 1407.4 L601.5 1407.4 L603.0 1407.1 L604.5 1406.9 L606.0 1406.6 L607.5 1406.4 L609.0 1406.4 L610.5 1406.5 L612.0 1407.1 L613.5 1408.3 L615.0 1409.1 L616.5 1408.1 L618.0 1407.8 L619.5 1409.0 L621.0 1410.2 L622.5 1411.3 L624.0 1412.0 L625.5 1412.5 L627.0 1413.0 L628.5 1413.5 L630.0 1414.0 L631.5 1414.9 L633.0 1415.8 L634.5 1416.7 L636.0 1417.6 L637.5 1418.2 L639.0 1418.9 L640.5 1419.5 L642.0 1420.2 L643.5 1420.8 L645.0 1421.4 L646.5 1422.0 L648.0 1422.6 L649.5 1423.1 L651.0 1423.5 L652.5 1423.9 L654.0 1424.4 L655.5 1424.3 L657.0 1424.2 L658.5 1423.4 L660.0 1422.4 L661.5 1421.8 L663.0 1421.6 L664.5 1421.7 L666.0 1422.9 L667.5 1424.1 L669.0 1425.4 L670.5 1426.7 L672.0 1428.0 L673.5 1429.0 L675.0 1430.0 L676.5 1431.1 L678.0 1431.3 L679.5 1430.8 L681.0 1430.3 L682.5 1429.9 L684.0 1429.1 L685.5 1427.5 L687.0 1426.0 L688.5 1424.7 L690.0 1424.7 L691.5 1424.7 L693.0 1424.7 L694.5 1424.7 L696.0 1424.9 L697.5 1425.1 L699.0 1425.3 L700.5 1425.3 L702.0 1425.3 L703.5 1425.0 L705.0 1423.3 L706.5 1421.6 L708.0 1419.9 L709.5 1418.1 L711.0 1416.1 L712.5 1414.1 L714.0 1412.1 L715.5 1410.1 L717.0 1408.4 L718.5 1406.6 L720.0 1404.9 L721.5 1403.2 L723.0 1402.8 L724.5 1403.5 L726.0 1404.2 L727.5 1404.1 L729.0 1403.9 L730.5 1403.7 L732.0 1403.5 L733.5 1403.2 L735.0 1402.8 L736.5 1402.5 L738.0 1402.1 L739.5 1401.3 L741.0 1400.1 L742.5 1398.9 L744.0 1397.9 L745.5 1397.2 L747.0 1396.5 L748.5 1395.8 L750.0 1395.7 L751.5 1396.0 L753.0 1396.3 L754.5 1396.6 L756.0 1397.4 L757.5 1398.4 L759.0 1399.8 L760.5 1401.5 L762.0 1403.0 L763.5 1403.6 L765.0 1404.2 L766.5 1403.4 L768.0 1402.4 L769.5 1401.4 L771.0 1397.9 L772.5 1393.9 L774.0 1389.3 L775.5 1384.3 L777.0 1379.3 L778.5 1374.1 L780.0 1369.7 L781.5 1367.6 L783.0 1365.6 L784.5 1365.0 L786.0 1364.6 L787.5 1365.5 L789.0 1366.7 L790.5 1368.8 L792.0 1370.5 L793.5 1371.2 L795.0 1372.0 L796.5 1373.1 L798.0 1375.6 L799.5 1378.1 L801.0 1381.6 L802.5 1385.1 L804.0 1389.6 L805.5 1394.6 L807.0 1399.2 L808.5 1403.2 L810.0 1407.1 L811.5 1410.1 L813.0 1413.1 L814.5 1416.0 L816.0 1418.9 L817.5 1421.7 L819.0 1424.0 L820.5 1426.0 L822.0 1428.2 L823.5 1430.7 L825.0 1433.1 L826.5 1435.1 L828.0 1436.6 L829.5 1434.7 L831.0 1432.7 L832.5 1431.0 L834.0 1429.4 L835.5 1428.2 L837.0 1428.7 L838.5 1430.9 L840.0 1433.9 L841.5 1437.5 L843.0 1442.0 L844.5 1446.3 L846.0 1449.7 L847.5 1453.1 L849.0 1456.5 L850.5 1459.5 L852.0 1462.5 L853.5 1465.5 L855.0 1467.7 L856.5 1470.0 L858.0 1472.2 L859.5 1472.8 L861.0 1473.1 L862.5 1473.5 L864.0 1474.5 L865.5 1475.6 L867.0 1476.8 L868.5 1478.2 L870.0 1479.7 L871.5 1480.4 L873.0 1480.4 L874.5 1481.9 L876.0 1483.4 L877.5 1483.9 L879.0 1484.0 L880.5 1484.1 L882.0 1483.4 L883.5 1482.3 L885.0 1480.8 L886.5 1478.3 L888.0 1475.8 L889.5 1473.2 L891.0 1470.6 L892.5 1467.9 L894.0 1466.9 L895.5 1465.9 L897.0 1465.2 L898.5 1465.7 L900.0 1466.6 L901.5 1468.3 L903.0 1470.1 L904.5 1471.8 L906.0 1473.6 L907.5 1475.4 L909.0 1477.2 L910.5 1478.7 L912.0 1479.7 L913.5 1480.8 L915.0 1481.9 L916.5 1482.9 L918.0 1483.9 L919.5 1484.9 L921.0 1484.9 L922.5 1484.3 L924.0 1483.2 L925.5 1481.0 L927.0 1478.7 L928.5 1476.3 L930.0 1473.3 L931.5 1470.3 L933.0 1467.6 L934.5 1465.0 L936.0 1462.4 L937.5 1460.0 L939.0 1457.6 L940.5 1455.2 L942.0 1453.5 L943.5 1451.9 L945.0 1450.3 L946.5 1448.8 L948.0 1448.3 L949.5 1447.8 L951.0 1448.0 L952.5 1448.5 L954.0 1448.6 L955.5 1448.2 L957.0 1447.7 L958.5 1445.9 L960.0 1444.2 L961.5 1442.4 L963.0 1439.4 L964.5 1436.4 L966.0 1433.4 L967.5 1429.3 L969.0 1425.2 L970.5 1421.1 L972.0 1418.3 L973.5 1415.7 L975.0 1413.1 L976.5 1410.3 L978.0 1407.6 L979.5 1404.8 L981.0 1402.8 L982.5 1401.1 L984.0 1399.4 L985.5 1396.7 L987.0 1393.7 L988.5 1390.7 L990.0 1388.0 L991.5 1385.4 L993.0 1382.7 L994.5 1381.3 L996.0 1380.5 L997.5 1379.8 L999.0 1379.2 L1000.5 1378.7 L1002.0 1378.2 L1003.5 1377.7 L1005.0 1377.2 L1006.5 1377.0 L1008.0 1376.8 L1009.5 1376.7 L1011.0 1374.9 L1012.5 1372.9 L1014.0 1371.5 L1015.5 1370.5 L1015.9 1370.3" fill="none" stroke="#3232e0" stroke-width="1.05"/>
<g clip-path="url(#cs)">
<path d="M0.0 1511.5L1.5 1511.2L1.5 1511.4L0.0 1511.5ZM1.5 1511.2L3.0 1509.9L3.0 1510.9L1.5 1511.4ZM3.0 1509.9L4.5 1508.6L4.5 1510.3L3.0 1510.9ZM4.5 1508.6L6.0 1507.3L6.0 1509.7L4.5 1510.3ZM6.0 1507.3L7.5 1506.1L7.5 1509.1L6.0 1509.7ZM7.5 1506.1L9.0 1505.0L9.0 1508.5L7.5 1509.1ZM9.0 1505.0L10.5 1505.7L10.5 1508.2L9.0 1508.5ZM10.5 1505.7L12.0 1506.5L12.0 1507.5L10.5 1508.2ZM12.0 1506.5L13.5 1507.2L13.5 1507.0L12.0 1507.5ZM51.0 1528.1L52.5 1528.1L52.5 1528.7L51.0 1528.5ZM52.5 1528.1L54.0 1528.1L54.0 1528.8L52.5 1528.7ZM54.0 1528.1L55.5 1528.1L55.5 1528.8L54.0 1528.8ZM67.5 1539.0L69.0 1535.0L69.0 1538.5L67.5 1537.9ZM69.0 1535.0L70.5 1531.0L70.5 1538.3L69.0 1538.5ZM70.5 1531.0L72.0 1529.5L72.0 1537.4L70.5 1538.3ZM72.0 1529.5L73.5 1528.5L73.5 1536.1L72.0 1537.4ZM73.5 1528.5L75.0 1526.8L75.0 1534.2L73.5 1536.1ZM75.0 1526.8L76.5 1524.7L76.5 1531.9L75.0 1534.2ZM76.5 1524.7L78.0 1522.6L78.0 1529.6L76.5 1531.9ZM78.0 1522.6L79.5 1520.5L79.5 1527.3L78.0 1529.6ZM79.5 1520.5L81.0 1519.0L81.0 1525.3L79.5 1527.3ZM81.0 1519.0L82.5 1517.5L82.5 1523.6L81.0 1525.3ZM82.5 1517.5L84.0 1516.0L84.0 1521.9L82.5 1523.6ZM84.0 1516.0L85.5 1514.5L85.5 1520.2L84.0 1521.9ZM85.5 1514.5L87.0 1513.0L87.0 1518.5L85.5 1520.2ZM87.0 1513.0L88.5 1511.5L88.5 1516.8L87.0 1518.5ZM88.5 1511.5L90.0 1510.6L90.0 1515.3L88.5 1516.8ZM90.0 1510.6L91.5 1509.7L91.5 1514.0L90.0 1515.3ZM91.5 1509.7L93.0 1508.8L93.0 1512.7L91.5 1514.0ZM93.0 1508.8L94.5 1507.9L94.5 1511.5L93.0 1512.7ZM94.5 1507.9L96.0 1507.0L96.0 1510.4L94.5 1511.5ZM96.0 1507.0L97.5 1506.1L97.5 1509.3L96.0 1510.4ZM97.5 1506.1L99.0 1505.2L99.0 1508.3L97.5 1509.3ZM99.0 1505.2L100.5 1504.7L100.5 1507.5L99.0 1508.3ZM100.5 1504.7L102.0 1504.4L102.0 1506.7L100.5 1507.5ZM102.0 1504.4L103.5 1504.1L103.5 1506.0L102.0 1506.7ZM103.5 1504.1L105.0 1503.8L105.0 1505.4L103.5 1506.0ZM105.0 1503.8L106.5 1503.5L106.5 1504.8L105.0 1505.4ZM106.5 1503.5L108.0 1503.2L108.0 1504.4L106.5 1504.8ZM108.0 1503.2L109.5 1502.9L109.5 1504.0L108.0 1504.4ZM109.5 1502.9L111.0 1502.7L111.0 1503.7L109.5 1504.0ZM111.0 1502.7L112.5 1502.9L112.5 1503.4L111.0 1503.7ZM112.5 1502.9L114.0 1503.0L114.0 1503.3L112.5 1503.4ZM114.0 1503.0L115.5 1503.1L115.5 1503.1L114.0 1503.3ZM126.0 1503.5L127.5 1503.4L127.5 1503.5L126.0 1503.5ZM127.5 1503.4L129.0 1503.2L129.0 1503.5L127.5 1503.5ZM129.0 1503.2L130.5 1503.0L130.5 1503.5L129.0 1503.5ZM130.5 1503.0L132.0 1502.8L132.0 1503.4L130.5 1503.5ZM132.0 1502.8L133.5 1502.7L133.5 1503.3L132.0 1503.4ZM133.5 1502.7L135.0 1502.5L135.0 1503.1L133.5 1503.3ZM135.0 1502.5L136.5 1502.3L136.5 1502.9L135.0 1503.1ZM136.5 1502.3L138.0 1502.5L138.0 1502.8L136.5 1502.9ZM138.0 1502.5L139.5 1502.9L139.5 1502.7L138.0 1502.8ZM154.5 1505.3L156.0 1505.1L156.0 1505.4L154.5 1505.2ZM156.0 1505.1L157.5 1504.8L157.5 1505.4L156.0 1505.4ZM157.5 1504.8L159.0 1504.6L159.0 1505.3L157.5 1505.4ZM159.0 1504.6L160.5 1504.3L160.5 1505.2L159.0 1505.3ZM160.5 1504.3L162.0 1504.1L162.0 1504.9L160.5 1505.2ZM162.0 1504.1L163.5 1503.8L163.5 1504.7L162.0 1504.9ZM163.5 1503.8L165.0 1503.6L165.0 1504.4L163.5 1504.7ZM165.0 1503.6L166.5 1503.3L166.5 1504.2L165.0 1504.4ZM166.5 1503.3L168.0 1503.1L168.0 1503.9L166.5 1504.2ZM168.0 1503.1L169.5 1502.8L169.5 1503.7L168.0 1503.9ZM169.5 1502.8L171.0 1502.6L171.0 1503.4L169.5 1503.7ZM171.0 1502.6L172.5 1502.3L172.5 1503.2L171.0 1503.4ZM172.5 1502.3L174.0 1502.1L174.0 1502.9L172.5 1503.2ZM174.0 1502.1L175.5 1501.8L175.5 1502.7L174.0 1502.9ZM175.5 1501.8L177.0 1501.6L177.0 1502.4L175.5 1502.7ZM177.0 1501.6L178.5 1502.0L178.5 1502.3L177.0 1502.4ZM178.5 1502.0L180.0 1502.4L180.0 1502.2L178.5 1502.3ZM195.0 1504.1L196.5 1503.8L196.5 1504.3L195.0 1504.3ZM196.5 1503.8L198.0 1503.6L198.0 1504.3L196.5 1504.3ZM198.0 1503.6L199.5 1503.3L199.5 1504.2L198.0 1504.3ZM199.5 1503.3L201.0 1503.1L201.0 1504.0L199.5 1504.2ZM201.0 1503.1L202.5 1502.8L202.5 1503.7L201.0 1504.0ZM202.5 1502.8L204.0 1502.9L204.0 1503.5L202.5 1503.7ZM204.0 1502.9L205.5 1503.4L205.5 1503.4L204.0 1503.5ZM232.5 1510.5L234.0 1509.8L234.0 1510.4L232.5 1510.3ZM234.0 1509.8L235.5 1509.2L235.5 1510.4L234.0 1510.4ZM235.5 1509.2L237.0 1508.6L237.0 1510.2L235.5 1510.4ZM237.0 1508.6L238.5 1508.0L238.5 1509.9L237.0 1510.2ZM238.5 1508.0L240.0 1507.3L240.0 1509.5L238.5 1509.9ZM240.0 1507.3L241.5 1506.7L241.5 1508.9L240.0 1509.5ZM241.5 1506.7L243.0 1506.1L243.0 1508.3L241.5 1508.9ZM243.0 1506.1L244.5 1505.7L244.5 1507.7L243.0 1508.3ZM244.5 1505.7L246.0 1505.3L246.0 1507.1L244.5 1507.7ZM246.0 1505.3L247.5 1504.9L247.5 1506.6L246.0 1507.1ZM247.5 1504.9L249.0 1504.6L249.0 1506.1L247.5 1506.6ZM249.0 1504.6L250.5 1504.2L250.5 1505.6L249.0 1506.1ZM250.5 1504.2L252.0 1503.8L252.0 1505.2L250.5 1505.6ZM252.0 1503.8L253.5 1503.4L253.5 1504.7L252.0 1505.2ZM253.5 1503.4L255.0 1503.1L255.0 1504.4L253.5 1504.7ZM255.0 1503.1L256.5 1502.7L256.5 1504.0L255.0 1504.4ZM256.5 1502.7L258.0 1502.9L258.0 1503.7L256.5 1504.0ZM258.0 1502.9L259.5 1503.2L259.5 1503.5L258.0 1503.7ZM259.5 1503.2L261.0 1503.4L261.0 1503.3L259.5 1503.5ZM307.5 1540.0L309.0 1541.7L309.0 1542.0L307.5 1540.6ZM331.5 1548.1L333.0 1546.6L333.0 1548.3L331.5 1548.3ZM333.0 1546.6L334.5 1545.1L334.5 1548.0L333.0 1548.3ZM334.5 1545.1L336.0 1543.1L336.0 1547.4L334.5 1548.0ZM336.0 1543.1L337.5 1540.9L337.5 1546.4L336.0 1547.4ZM337.5 1540.9L339.0 1538.6L339.0 1545.1L337.5 1546.4ZM339.0 1538.6L340.5 1537.9L340.5 1543.7L339.0 1545.1ZM340.5 1537.9L342.0 1537.7L342.0 1542.3L340.5 1543.7ZM342.0 1537.7L343.5 1537.6L343.5 1541.0L342.0 1542.3ZM343.5 1537.6L345.0 1537.4L345.0 1539.8L343.5 1541.0ZM345.0 1537.4L346.5 1536.8L346.5 1538.8L345.0 1539.8ZM346.5 1536.8L348.0 1536.3L348.0 1537.9L346.5 1538.8ZM348.0 1536.3L349.5 1535.3L349.5 1537.2L348.0 1537.9ZM349.5 1535.3L351.0 1530.4L351.0 1536.2L349.5 1537.2ZM351.0 1530.4L352.5 1525.5L352.5 1534.6L351.0 1536.2ZM352.5 1525.5L354.0 1521.2L354.0 1532.6L352.5 1534.6ZM354.0 1521.2L355.5 1519.7L355.5 1530.3L354.0 1532.6ZM355.5 1519.7L357.0 1518.2L357.0 1527.9L355.5 1530.3ZM357.0 1518.2L358.5 1516.7L358.5 1525.4L357.0 1527.9ZM358.5 1516.7L360.0 1514.5L360.0 1522.7L358.5 1525.4ZM360.0 1514.5L361.5 1511.5L361.5 1519.7L360.0 1522.7ZM361.5 1511.5L363.0 1508.5L363.0 1517.0L361.5 1519.7ZM363.0 1508.5L364.5 1505.5L364.5 1514.5L363.0 1517.0ZM364.5 1505.5L366.0 1503.5L366.0 1512.3L364.5 1514.5ZM366.0 1503.5L367.5 1501.8L367.5 1510.0L366.0 1512.3ZM367.5 1501.8L369.0 1500.9L369.0 1507.9L367.5 1510.0ZM369.0 1500.9L370.5 1500.5L370.5 1505.9L369.0 1507.9ZM370.5 1500.5L372.0 1500.2L372.0 1504.1L370.5 1505.9ZM372.0 1500.2L373.5 1500.6L373.5 1502.7L372.0 1504.1ZM373.5 1500.6L375.0 1501.5L375.0 1501.8L373.5 1502.7ZM400.5 1542.9L402.0 1539.9L402.0 1544.4L400.5 1543.8ZM402.0 1539.9L403.5 1536.9L403.5 1544.0L402.0 1544.4ZM403.5 1536.9L405.0 1534.1L405.0 1542.5L403.5 1544.0ZM405.0 1534.1L406.5 1531.6L406.5 1540.6L405.0 1542.5ZM406.5 1531.6L408.0 1529.1L408.0 1538.3L406.5 1540.6ZM408.0 1529.1L409.5 1526.6L409.5 1535.8L408.0 1538.3ZM409.5 1526.6L411.0 1524.1L411.0 1533.2L409.5 1535.8ZM411.0 1524.1L412.5 1522.6L412.5 1530.6L411.0 1533.2ZM412.5 1522.6L414.0 1521.4L414.0 1528.3L412.5 1530.6ZM414.0 1521.4L415.5 1520.1L415.5 1526.2L414.0 1528.3ZM415.5 1520.1L417.0 1518.9L417.0 1524.3L415.5 1526.2ZM417.0 1518.9L418.5 1518.5L418.5 1522.7L417.0 1524.3ZM418.5 1518.5L420.0 1519.2L420.0 1521.4L418.5 1522.7ZM420.0 1519.2L421.5 1520.0L421.5 1520.6L420.0 1521.4ZM430.5 1520.8L432.0 1518.6L432.0 1521.3L430.5 1521.4ZM432.0 1518.6L433.5 1515.6L433.5 1520.8L432.0 1521.3ZM433.5 1515.6L435.0 1512.6L435.0 1519.8L433.5 1520.8ZM435.0 1512.6L436.5 1509.8L436.5 1518.2L435.0 1519.8ZM436.5 1509.8L438.0 1507.0L438.0 1516.2L436.5 1518.2ZM438.0 1507.0L439.5 1505.9L439.5 1514.0L438.0 1516.2ZM439.5 1505.9L441.0 1507.2L441.0 1512.2L439.5 1514.0ZM441.0 1507.2L442.5 1509.1L442.5 1510.7L441.0 1512.2ZM450.0 1510.9L451.5 1508.7L451.5 1511.4L450.0 1511.0ZM451.5 1508.7L453.0 1506.8L453.0 1511.4L451.5 1511.4ZM453.0 1506.8L454.5 1504.9L454.5 1510.8L453.0 1511.4ZM454.5 1504.9L456.0 1503.0L456.0 1509.5L454.5 1510.8ZM456.0 1503.0L457.5 1502.1L457.5 1508.0L456.0 1509.5ZM457.5 1502.1L459.0 1502.0L459.0 1506.4L457.5 1508.0ZM459.0 1502.0L460.5 1501.8L460.5 1505.0L459.0 1506.4ZM460.5 1501.8L462.0 1501.6L462.0 1503.8L460.5 1505.0ZM462.0 1501.6L463.5 1501.8L463.5 1503.0L462.0 1503.8ZM463.5 1501.8L465.0 1502.1L465.0 1502.4L463.5 1503.0ZM465.0 1502.1L466.5 1502.3L466.5 1502.1L465.0 1502.4ZM477.0 1502.6L478.5 1502.0L478.5 1502.7L477.0 1502.8ZM478.5 1502.0L480.0 1501.5L480.0 1502.6L478.5 1502.7ZM480.0 1501.5L481.5 1501.0L481.5 1502.4L480.0 1502.6ZM481.5 1501.0L483.0 1500.5L483.0 1502.1L481.5 1502.4ZM483.0 1500.5L484.5 1500.7L484.5 1501.8L483.0 1502.1ZM484.5 1500.7L486.0 1501.0L486.0 1501.6L484.5 1501.8ZM486.0 1501.0L487.5 1501.2L487.5 1501.3L486.0 1501.6ZM525.0 1529.0L526.5 1525.8L526.5 1529.9L525.0 1529.4ZM526.5 1525.8L528.0 1522.4L528.0 1529.5L526.5 1529.9ZM528.0 1522.4L529.5 1519.1L529.5 1528.2L528.0 1529.5ZM529.5 1519.1L531.0 1516.4L531.0 1526.2L529.5 1528.2ZM531.0 1516.4L532.5 1513.9L532.5 1523.8L531.0 1526.2ZM532.5 1513.9L534.0 1511.4L534.0 1521.1L532.5 1523.8ZM534.0 1511.4L535.5 1510.1L535.5 1518.5L534.0 1521.1ZM535.5 1510.1L537.0 1508.7L537.0 1516.0L535.5 1518.5ZM537.0 1508.7L538.5 1507.1L538.5 1513.6L537.0 1516.0ZM538.5 1507.1L540.0 1505.1L540.0 1511.5L538.5 1513.6ZM540.0 1505.1L541.5 1503.2L541.5 1509.5L540.0 1511.5ZM541.5 1503.2L543.0 1501.5L543.0 1507.6L541.5 1509.5ZM543.0 1501.5L544.5 1499.9L544.5 1505.9L543.0 1507.6ZM544.5 1499.9L546.0 1498.3L546.0 1504.2L544.5 1505.9ZM546.0 1498.3L547.5 1498.8L547.5 1502.8L546.0 1504.2ZM547.5 1498.8L549.0 1499.3L549.0 1501.7L547.5 1502.8ZM549.0 1499.3L550.5 1500.0L550.5 1500.8L549.0 1501.7ZM550.5 1500.0L552.0 1500.7L552.0 1500.2L550.5 1500.8ZM561.0 1501.1L562.5 1501.1L562.5 1501.1L561.0 1501.0ZM562.5 1501.1L564.0 1501.1L564.0 1501.2L562.5 1501.1ZM564.0 1501.1L565.5 1501.1L565.5 1501.2L564.0 1501.2ZM565.5 1501.1L567.0 1501.2L567.0 1501.1L565.5 1501.2ZM576.0 1502.1L577.5 1501.6L577.5 1502.0L576.0 1502.0ZM577.5 1501.6L579.0 1501.1L579.0 1502.0L577.5 1502.0ZM579.0 1501.1L580.5 1500.7L580.5 1501.9L579.0 1502.0ZM580.5 1500.7L582.0 1500.4L582.0 1501.7L580.5 1501.9ZM582.0 1500.4L583.5 1500.0L583.5 1501.4L582.0 1501.7ZM583.5 1500.0L585.0 1499.8L585.0 1501.0L583.5 1501.4ZM585.0 1499.8L586.5 1499.6L586.5 1500.7L585.0 1501.0ZM586.5 1499.6L588.0 1500.6L588.0 1500.5L586.5 1500.7ZM603.0 1515.3L604.5 1513.5L604.5 1516.5L603.0 1516.0ZM604.5 1513.5L606.0 1511.7L606.0 1516.3L604.5 1516.5ZM606.0 1511.7L607.5 1510.4L607.5 1515.6L606.0 1516.3ZM607.5 1510.4L609.0 1509.1L609.0 1514.3L607.5 1515.6ZM609.0 1509.1L610.5 1509.3L610.5 1513.1L609.0 1514.3ZM610.5 1509.3L612.0 1509.9L612.0 1512.1L610.5 1513.1ZM612.0 1509.9L613.5 1512.2L613.5 1511.4L612.0 1512.1ZM649.5 1530.8L651.0 1529.6L651.0 1531.2L649.5 1531.1ZM651.0 1529.6L652.5 1529.2L652.5 1531.2L651.0 1531.2ZM652.5 1529.2L654.0 1528.9L654.0 1531.1L652.5 1531.2ZM654.0 1528.9L655.5 1527.7L655.5 1530.6L654.0 1531.1ZM655.5 1527.7L657.0 1525.0L657.0 1529.7L655.5 1530.6ZM657.0 1525.0L658.5 1522.4L658.5 1528.3L657.0 1529.7ZM658.5 1522.4L660.0 1519.4L660.0 1526.6L658.5 1528.3ZM660.0 1519.4L661.5 1515.4L661.5 1524.7L660.0 1526.6ZM661.5 1515.4L663.0 1511.4L663.0 1522.4L661.5 1524.7ZM663.0 1511.4L664.5 1512.6L664.5 1520.3L663.0 1522.4ZM664.5 1512.6L666.0 1515.9L666.0 1518.7L664.5 1520.3ZM679.5 1530.9L681.0 1526.7L681.0 1532.3L679.5 1532.4ZM681.0 1526.7L682.5 1522.6L682.5 1531.3L681.0 1532.3ZM682.5 1522.6L684.0 1518.6L684.0 1529.4L682.5 1531.3ZM684.0 1518.6L685.5 1515.1L685.5 1527.0L684.0 1529.4ZM685.5 1515.1L687.0 1511.6L687.0 1524.0L685.5 1527.0ZM687.0 1511.6L688.5 1508.9L688.5 1520.9L687.0 1524.0ZM688.5 1508.9L690.0 1507.3L690.0 1517.7L688.5 1520.9ZM690.0 1507.3L691.5 1507.3L691.5 1514.8L690.0 1517.7ZM691.5 1507.3L693.0 1507.5L693.0 1512.4L691.5 1514.8ZM693.0 1507.5L694.5 1509.6L694.5 1510.7L693.0 1512.4ZM703.5 1511.6L705.0 1508.5L705.0 1512.4L703.5 1512.3ZM705.0 1508.5L706.5 1504.7L706.5 1511.8L705.0 1512.4ZM706.5 1504.7L708.0 1501.3L708.0 1510.5L706.5 1511.8ZM708.0 1501.3L709.5 1499.7L709.5 1508.8L708.0 1510.5ZM709.5 1499.7L711.0 1498.5L711.0 1506.7L709.5 1508.8ZM711.0 1498.5L712.5 1499.3L712.5 1504.7L711.0 1506.7ZM712.5 1499.3L714.0 1500.1L714.0 1503.0L712.5 1504.7ZM714.0 1500.1L715.5 1500.6L715.5 1501.6L714.0 1503.0ZM715.5 1500.6L717.0 1501.1L717.0 1500.6L715.5 1501.6ZM733.5 1507.4L735.0 1505.9L735.0 1507.4L733.5 1507.0ZM735.0 1505.9L736.5 1504.2L736.5 1507.3L735.0 1507.4ZM736.5 1504.2L738.0 1502.6L738.0 1506.8L736.5 1507.3ZM738.0 1502.6L739.5 1501.3L739.5 1506.0L738.0 1506.8ZM739.5 1501.3L741.0 1500.0L741.0 1504.9L739.5 1506.0ZM741.0 1500.0L742.5 1499.5L742.5 1503.7L741.0 1504.9ZM742.5 1499.5L744.0 1499.0L744.0 1502.5L742.5 1503.7ZM744.0 1499.0L745.5 1498.5L745.5 1501.3L744.0 1502.5ZM745.5 1498.5L747.0 1499.2L747.0 1500.5L745.5 1501.3ZM747.0 1499.2L748.5 1500.6L748.5 1500.1L747.0 1500.5ZM766.5 1513.1L768.0 1508.6L768.0 1513.5L766.5 1513.4ZM768.0 1508.6L769.5 1504.1L769.5 1512.7L768.0 1513.5ZM769.5 1504.1L771.0 1502.7L771.0 1511.4L769.5 1512.7ZM771.0 1502.7L772.5 1501.9L772.5 1509.8L771.0 1511.4ZM772.5 1501.9L774.0 1502.0L774.0 1508.1L772.5 1509.8ZM774.0 1502.0L775.5 1502.8L775.5 1506.3L774.0 1508.1ZM775.5 1502.8L777.0 1503.3L777.0 1504.8L775.5 1506.3ZM777.0 1503.3L778.5 1503.1L778.5 1503.6L777.0 1504.8ZM778.5 1503.1L780.0 1502.9L780.0 1502.8L778.5 1503.6ZM819.0 1539.2L820.5 1539.5L820.5 1540.0L819.0 1539.6ZM820.5 1539.5L822.0 1539.8L822.0 1540.1L820.5 1540.0ZM822.0 1539.8L823.5 1540.1L823.5 1539.9L822.0 1540.1ZM828.0 1540.4L829.5 1536.9L829.5 1539.8L828.0 1540.1ZM829.5 1536.9L831.0 1533.1L831.0 1539.1L829.5 1539.8ZM831.0 1533.1L832.5 1528.6L832.5 1537.7L831.0 1539.1ZM832.5 1528.6L834.0 1524.1L834.0 1535.8L832.5 1537.7ZM834.0 1524.1L835.5 1521.1L835.5 1533.4L834.0 1535.8ZM835.5 1521.1L837.0 1521.0L837.0 1530.9L835.5 1533.4ZM837.0 1521.0L838.5 1524.5L838.5 1528.7L837.0 1530.9ZM838.5 1524.5L840.0 1528.3L840.0 1527.2L838.5 1528.7ZM855.0 1547.0L856.5 1545.9L856.5 1548.2L855.0 1547.8ZM856.5 1545.9L858.0 1544.8L858.0 1547.9L856.5 1548.2ZM858.0 1544.8L859.5 1543.7L859.5 1547.3L858.0 1547.9ZM859.5 1543.7L861.0 1542.5L861.0 1546.4L859.5 1547.3ZM861.0 1542.5L862.5 1541.4L862.5 1545.3L861.0 1546.4ZM862.5 1541.4L864.0 1541.6L864.0 1544.4L862.5 1545.3ZM864.0 1541.6L865.5 1541.9L865.5 1543.6L864.0 1544.4ZM865.5 1541.9L867.0 1542.3L867.0 1543.0L865.5 1543.6ZM879.0 1546.5L880.5 1545.5L880.5 1546.6L879.0 1546.3ZM880.5 1545.5L882.0 1543.8L882.0 1546.5L880.5 1546.6ZM882.0 1543.8L883.5 1541.6L883.5 1545.9L882.0 1546.5ZM883.5 1541.6L885.0 1538.5L885.0 1544.9L883.5 1545.9ZM885.0 1538.5L886.5 1533.5L886.5 1543.1L885.0 1544.9ZM886.5 1533.5L888.0 1528.5L888.0 1540.7L886.5 1543.1ZM888.0 1528.5L889.5 1523.5L889.5 1537.7L888.0 1540.7ZM889.5 1523.5L891.0 1518.5L891.0 1534.2L889.5 1537.7ZM891.0 1518.5L892.5 1514.4L892.5 1530.3L891.0 1534.2ZM892.5 1514.4L894.0 1511.3L894.0 1526.2L892.5 1530.3ZM894.0 1511.3L895.5 1510.5L895.5 1522.3L894.0 1526.2ZM895.5 1510.5L897.0 1512.2L897.0 1519.1L895.5 1522.3ZM897.0 1512.2L898.5 1515.2L898.5 1516.8L897.0 1519.1ZM921.0 1548.9L922.5 1547.1L922.5 1548.9L921.0 1548.8ZM922.5 1547.1L924.0 1544.6L924.0 1548.6L922.5 1548.9ZM924.0 1544.6L925.5 1540.6L925.5 1547.7L924.0 1548.6ZM925.5 1540.6L927.0 1536.6L927.0 1546.1L925.5 1547.7ZM927.0 1536.6L928.5 1533.3L928.5 1543.9L927.0 1546.1ZM928.5 1533.3L930.0 1529.9L930.0 1541.4L928.5 1543.9ZM930.0 1529.9L931.5 1526.5L931.5 1538.5L930.0 1541.4ZM931.5 1526.5L933.0 1524.2L933.0 1535.4L931.5 1538.5ZM933.0 1524.2L934.5 1522.0L934.5 1532.2L933.0 1535.4ZM934.5 1522.0L936.0 1519.7L936.0 1529.1L934.5 1532.2ZM936.0 1519.7L937.5 1516.8L937.5 1526.1L936.0 1529.1ZM937.5 1516.8L939.0 1513.8L939.0 1523.3L937.5 1526.1ZM939.0 1513.8L940.5 1510.7L940.5 1520.4L939.0 1523.3ZM940.5 1510.7L942.0 1507.5L942.0 1517.6L940.5 1520.4ZM942.0 1507.5L943.5 1505.3L943.5 1515.0L942.0 1517.6ZM943.5 1505.3L945.0 1505.5L945.0 1512.6L943.5 1515.0ZM945.0 1505.5L946.5 1507.0L946.5 1510.8L945.0 1512.6ZM946.5 1507.0L948.0 1511.3L948.0 1509.7L946.5 1510.8ZM958.5 1520.4L960.0 1517.1L960.0 1520.1L958.5 1519.4ZM960.0 1517.1L961.5 1513.1L961.5 1519.9L960.0 1520.1ZM961.5 1513.1L963.0 1509.4L963.0 1518.8L961.5 1519.9ZM963.0 1509.4L964.5 1506.6L964.5 1517.0L963.0 1518.8ZM964.5 1506.6L966.0 1504.2L966.0 1514.7L964.5 1517.0ZM966.0 1504.2L967.5 1502.9L967.5 1512.0L966.0 1514.7ZM967.5 1502.9L969.0 1502.7L969.0 1509.5L967.5 1512.0ZM969.0 1502.7L970.5 1503.7L970.5 1507.5L969.0 1509.5ZM970.5 1503.7L972.0 1504.6L972.0 1505.9L970.5 1507.5ZM972.0 1504.6L973.5 1505.3L973.5 1504.9L972.0 1505.9ZM978.0 1503.7L979.5 1502.5L979.5 1504.2L978.0 1504.2ZM979.5 1502.5L981.0 1501.9L981.0 1504.1L979.5 1504.2ZM981.0 1501.9L982.5 1501.5L982.5 1503.8L981.0 1504.1ZM982.5 1501.5L984.0 1501.2L984.0 1503.4L982.5 1503.8ZM984.0 1501.2L985.5 1501.2L985.5 1502.9L984.0 1503.4ZM985.5 1501.2L987.0 1501.3L987.0 1502.3L985.5 1502.9ZM987.0 1501.3L988.5 1501.5L988.5 1501.9L987.0 1502.3ZM988.5 1501.5L990.0 1500.8L990.0 1501.5L988.5 1501.9ZM990.0 1500.8L991.5 1499.8L991.5 1501.2L990.0 1501.5ZM991.5 1499.8L993.0 1499.5L993.0 1500.9L991.5 1501.2ZM993.0 1499.5L994.5 1500.1L994.5 1500.7L993.0 1500.9ZM994.5 1500.1L996.0 1500.6L996.0 1500.6L994.5 1500.7ZM1003.5 1500.9L1005.0 1500.6L1005.0 1500.9L1003.5 1500.8ZM1005.0 1500.6L1006.5 1500.3L1006.5 1500.9L1005.0 1500.9ZM1006.5 1500.3L1008.0 1500.0L1008.0 1500.8L1006.5 1500.9ZM1008.0 1500.0L1009.5 1500.2L1009.5 1500.8L1008.0 1500.8ZM1009.5 1500.2L1011.0 1500.5L1011.0 1500.7L1009.5 1500.8Z" fill="#05051c" stroke="#05051c" stroke-width="0.4"/>
<path d="M13.5 1507.2L15.0 1508.0L15.0 1506.8L13.5 1507.0ZM15.0 1508.0L16.5 1508.7L16.5 1506.8L15.0 1506.8ZM16.5 1508.7L18.0 1509.6L18.0 1507.1L16.5 1506.8ZM18.0 1509.6L19.5 1511.1L19.5 1507.7L18.0 1507.1ZM19.5 1511.1L21.0 1512.6L21.0 1508.7L19.5 1507.7ZM21.0 1512.6L22.5 1514.1L22.5 1509.7L21.0 1508.7ZM22.5 1514.1L24.0 1515.6L24.0 1510.9L22.5 1509.7ZM24.0 1515.6L25.5 1517.1L25.5 1512.1L24.0 1510.9ZM25.5 1517.1L27.0 1518.4L27.0 1513.4L25.5 1512.1ZM27.0 1518.4L28.5 1519.1L28.5 1514.7L27.0 1513.4ZM28.5 1519.1L30.0 1519.9L30.0 1516.0L28.5 1514.7ZM30.0 1519.9L31.5 1520.6L31.5 1517.2L30.0 1516.0ZM31.5 1520.6L33.0 1521.4L33.0 1518.3L31.5 1517.2ZM33.0 1521.4L34.5 1522.1L34.5 1519.3L33.0 1518.3ZM34.5 1522.1L36.0 1523.0L36.0 1520.2L34.5 1519.3ZM36.0 1523.0L37.5 1524.1L37.5 1521.1L36.0 1520.2ZM37.5 1524.1L39.0 1525.2L39.0 1521.9L37.5 1521.1ZM39.0 1525.2L40.5 1526.2L40.5 1522.8L39.0 1521.9ZM40.5 1526.2L42.0 1527.3L42.0 1523.8L40.5 1522.8ZM42.0 1527.3L43.5 1528.5L43.5 1524.7L42.0 1523.8ZM43.5 1528.5L45.0 1530.0L45.0 1525.8L43.5 1524.7ZM45.0 1530.0L46.5 1529.9L46.5 1526.8L45.0 1525.8ZM46.5 1529.9L48.0 1529.3L48.0 1527.6L46.5 1526.8ZM48.0 1529.3L49.5 1528.7L49.5 1528.1L48.0 1527.6ZM49.5 1528.7L51.0 1528.1L51.0 1528.5L49.5 1528.1ZM55.5 1528.1L57.0 1529.6L57.0 1528.7L55.5 1528.8ZM57.0 1529.6L58.5 1533.1L58.5 1529.1L57.0 1528.7ZM58.5 1533.1L60.0 1536.4L60.0 1530.0L58.5 1529.1ZM60.0 1536.4L61.5 1539.0L61.5 1531.3L60.0 1530.0ZM61.5 1539.0L63.0 1541.6L63.0 1533.0L61.5 1531.3ZM63.0 1541.6L64.5 1543.1L64.5 1534.9L63.0 1533.0ZM64.5 1543.1L66.0 1541.1L66.0 1536.5L64.5 1534.9ZM66.0 1541.1L67.5 1539.0L67.5 1537.9L66.0 1536.5ZM115.5 1503.1L117.0 1503.2L117.0 1503.1L115.5 1503.1ZM117.0 1503.2L118.5 1503.4L118.5 1503.0L117.0 1503.1ZM118.5 1503.4L120.0 1503.5L120.0 1503.1L118.5 1503.0ZM120.0 1503.5L121.5 1503.6L121.5 1503.2L120.0 1503.1ZM121.5 1503.6L123.0 1503.7L123.0 1503.3L121.5 1503.2ZM123.0 1503.7L124.5 1503.7L124.5 1503.4L123.0 1503.3ZM124.5 1503.7L126.0 1503.5L126.0 1503.5L124.5 1503.4ZM139.5 1502.9L141.0 1503.4L141.0 1502.8L139.5 1502.7ZM141.0 1503.4L142.5 1503.8L142.5 1502.9L141.0 1502.8ZM142.5 1503.8L144.0 1504.2L144.0 1503.0L142.5 1502.9ZM144.0 1504.2L145.5 1504.6L145.5 1503.3L144.0 1503.0ZM145.5 1504.6L147.0 1505.1L147.0 1503.6L145.5 1503.3ZM147.0 1505.1L148.5 1505.5L148.5 1504.0L147.0 1503.6ZM148.5 1505.5L150.0 1505.9L150.0 1504.4L148.5 1504.0ZM150.0 1505.9L151.5 1505.8L151.5 1504.8L150.0 1504.4ZM151.5 1505.8L153.0 1505.6L153.0 1505.1L151.5 1504.8ZM153.0 1505.6L154.5 1505.3L154.5 1505.2L153.0 1505.1ZM180.0 1502.4L181.5 1502.7L181.5 1502.2L180.0 1502.2ZM181.5 1502.7L183.0 1503.1L183.0 1502.2L181.5 1502.2ZM183.0 1503.1L184.5 1503.5L184.5 1502.4L183.0 1502.2ZM184.5 1503.5L186.0 1503.9L186.0 1502.6L184.5 1502.4ZM186.0 1503.9L187.5 1504.2L187.5 1502.9L186.0 1502.6ZM187.5 1504.2L189.0 1504.6L189.0 1503.3L187.5 1502.9ZM189.0 1504.6L190.5 1504.8L190.5 1503.7L189.0 1503.3ZM190.5 1504.8L192.0 1504.6L192.0 1503.9L190.5 1503.7ZM192.0 1504.6L193.5 1504.3L193.5 1504.1L192.0 1503.9ZM193.5 1504.3L195.0 1504.1L195.0 1504.3L193.5 1504.1ZM205.5 1503.4L207.0 1503.9L207.0 1503.4L205.5 1503.4ZM207.0 1503.9L208.5 1504.4L208.5 1503.4L207.0 1503.4ZM208.5 1504.4L210.0 1504.9L210.0 1503.6L208.5 1503.4ZM210.0 1504.9L211.5 1505.4L211.5 1503.8L210.0 1503.6ZM211.5 1505.4L213.0 1505.9L213.0 1504.2L211.5 1503.8ZM213.0 1505.9L214.5 1506.4L214.5 1504.6L213.0 1504.2ZM214.5 1506.4L216.0 1506.9L216.0 1505.1L214.5 1504.6ZM216.0 1506.9L217.5 1507.4L217.5 1505.6L216.0 1505.1ZM217.5 1507.4L219.0 1507.9L219.0 1506.1L217.5 1505.6ZM219.0 1507.9L220.5 1508.4L220.5 1506.6L219.0 1506.1ZM220.5 1508.4L222.0 1508.9L222.0 1507.1L220.5 1506.6ZM222.0 1508.9L223.5 1509.4L223.5 1507.6L222.0 1507.1ZM223.5 1509.4L225.0 1509.9L225.0 1508.1L223.5 1507.6ZM225.0 1509.9L226.5 1510.4L226.5 1508.6L225.0 1508.1ZM226.5 1510.4L228.0 1510.9L228.0 1509.1L226.5 1508.6ZM228.0 1510.9L229.5 1511.4L229.5 1509.6L228.0 1509.1ZM229.5 1511.4L231.0 1511.1L231.0 1510.0L229.5 1509.6ZM231.0 1511.1L232.5 1510.5L232.5 1510.3L231.0 1510.0ZM261.0 1503.4L262.5 1503.7L262.5 1503.3L261.0 1503.3ZM262.5 1503.7L264.0 1503.9L264.0 1503.3L262.5 1503.3ZM264.0 1503.9L265.5 1504.2L265.5 1503.4L264.0 1503.3ZM265.5 1504.2L267.0 1504.4L267.0 1503.6L265.5 1503.4ZM267.0 1504.4L268.5 1504.7L268.5 1503.8L267.0 1503.6ZM268.5 1504.7L270.0 1505.0L270.0 1504.1L268.5 1503.8ZM270.0 1505.0L271.5 1505.3L271.5 1504.3L270.0 1504.1ZM271.5 1505.3L273.0 1505.7L273.0 1504.6L271.5 1504.3ZM273.0 1505.7L274.5 1506.1L274.5 1504.9L273.0 1504.6ZM274.5 1506.1L276.0 1506.5L276.0 1505.2L274.5 1504.9ZM276.0 1506.5L277.5 1506.8L277.5 1505.6L276.0 1505.2ZM277.5 1506.8L279.0 1507.4L279.0 1505.9L277.5 1505.6ZM279.0 1507.4L280.5 1508.3L280.5 1506.4L279.0 1505.9ZM280.5 1508.3L282.0 1509.2L282.0 1506.9L280.5 1506.4ZM282.0 1509.2L283.5 1510.1L283.5 1507.5L282.0 1506.9ZM283.5 1510.1L285.0 1511.0L285.0 1508.2L283.5 1507.5ZM285.0 1511.0L286.5 1509.8L286.5 1508.6L285.0 1508.2ZM286.5 1509.8L288.0 1509.7L288.0 1509.0L286.5 1508.6ZM288.0 1509.7L289.5 1511.7L289.5 1509.6L288.0 1509.0ZM289.5 1511.7L291.0 1513.7L291.0 1510.4L289.5 1509.6ZM291.0 1513.7L292.5 1516.7L292.5 1511.5L291.0 1510.4ZM292.5 1516.7L294.0 1520.8L294.0 1512.9L292.5 1511.5ZM294.0 1520.8L295.5 1524.9L295.5 1514.8L294.0 1512.9ZM295.5 1524.9L297.0 1530.5L297.0 1517.2L295.5 1514.8ZM297.0 1530.5L298.5 1537.6L298.5 1520.7L297.0 1517.2ZM298.5 1537.6L300.0 1544.7L300.0 1525.1L298.5 1520.7ZM300.0 1544.7L301.5 1544.8L301.5 1529.2L300.0 1525.1ZM301.5 1544.8L303.0 1543.7L303.0 1532.9L301.5 1529.2ZM303.0 1543.7L304.5 1542.5L304.5 1536.2L303.0 1532.9ZM304.5 1542.5L306.0 1541.1L306.0 1538.7L304.5 1536.2ZM306.0 1541.1L307.5 1540.0L307.5 1540.6L306.0 1538.7ZM309.0 1541.7L310.5 1543.3L310.5 1542.7L309.0 1542.0ZM310.5 1543.3L312.0 1544.8L312.0 1542.7L310.5 1542.7ZM312.0 1544.8L313.5 1545.5L313.5 1542.8L312.0 1542.7ZM313.5 1545.5L315.0 1546.2L315.0 1543.1L313.5 1542.8ZM315.0 1546.2L316.5 1546.1L316.5 1543.6L315.0 1543.1ZM316.5 1546.1L318.0 1545.9L318.0 1544.2L316.5 1543.6ZM318.0 1545.9L319.5 1545.8L319.5 1544.9L318.0 1544.2ZM319.5 1545.8L321.0 1546.6L321.0 1545.5L319.5 1544.9ZM321.0 1546.6L322.5 1547.3L322.5 1546.0L321.0 1545.5ZM322.5 1547.3L324.0 1548.1L324.0 1546.4L322.5 1546.0ZM324.0 1548.1L325.5 1548.8L325.5 1546.9L324.0 1546.4ZM325.5 1548.8L327.0 1549.1L327.0 1547.2L325.5 1546.9ZM327.0 1549.1L328.5 1549.1L328.5 1547.6L327.0 1547.2ZM328.5 1549.1L330.0 1549.1L330.0 1548.0L328.5 1547.6ZM330.0 1549.1L331.5 1548.1L331.5 1548.3L330.0 1548.0ZM375.0 1501.5L376.5 1502.4L376.5 1501.4L375.0 1501.8ZM376.5 1502.4L378.0 1503.7L378.0 1501.5L376.5 1501.4ZM378.0 1503.7L379.5 1505.2L379.5 1501.9L378.0 1501.5ZM379.5 1505.2L381.0 1506.7L381.0 1502.6L379.5 1501.9ZM381.0 1506.7L382.5 1508.2L382.5 1503.6L381.0 1502.6ZM382.5 1508.2L384.0 1511.7L384.0 1505.0L382.5 1503.6ZM384.0 1511.7L385.5 1515.2L385.5 1506.9L384.0 1505.0ZM385.5 1515.2L387.0 1521.3L387.0 1509.3L385.5 1506.9ZM387.0 1521.3L388.5 1528.1L388.5 1512.5L387.0 1509.3ZM388.5 1528.1L390.0 1534.8L390.0 1516.4L388.5 1512.5ZM390.0 1534.8L391.5 1540.3L391.5 1520.8L390.0 1516.4ZM391.5 1540.3L393.0 1545.6L393.0 1525.7L391.5 1520.8ZM393.0 1545.6L394.5 1547.5L394.5 1530.6L393.0 1525.7ZM394.5 1547.5L396.0 1547.4L396.0 1535.0L394.5 1530.6ZM396.0 1547.4L397.5 1546.6L397.5 1539.0L396.0 1535.0ZM397.5 1546.6L399.0 1544.9L399.0 1541.9L397.5 1539.0ZM399.0 1544.9L400.5 1542.9L400.5 1543.8L399.0 1541.9ZM421.5 1520.0L423.0 1520.9L423.0 1520.2L421.5 1520.6ZM423.0 1520.9L424.5 1522.0L424.5 1520.1L423.0 1520.2ZM424.5 1522.0L426.0 1523.2L426.0 1520.4L424.5 1520.1ZM426.0 1523.2L427.5 1523.1L427.5 1520.7L426.0 1520.4ZM427.5 1523.1L429.0 1522.0L429.0 1521.1L427.5 1520.7ZM429.0 1522.0L430.5 1520.8L430.5 1521.4L429.0 1521.1ZM442.5 1509.1L444.0 1513.3L444.0 1510.1L442.5 1510.7ZM444.0 1513.3L445.5 1514.4L445.5 1509.9L444.0 1510.1ZM445.5 1514.4L447.0 1514.4L447.0 1510.1L445.5 1509.9ZM447.0 1514.4L448.5 1513.2L448.5 1510.6L447.0 1510.1ZM448.5 1513.2L450.0 1510.9L450.0 1511.0L448.5 1510.6ZM466.5 1502.3L468.0 1502.6L468.0 1502.0L466.5 1502.1ZM468.0 1502.6L469.5 1502.7L469.5 1502.1L468.0 1502.0ZM469.5 1502.7L471.0 1502.8L471.0 1502.2L469.5 1502.1ZM471.0 1502.8L472.5 1502.9L472.5 1502.4L471.0 1502.2ZM472.5 1502.9L474.0 1503.0L474.0 1502.5L472.5 1502.4ZM474.0 1503.0L475.5 1503.1L475.5 1502.7L474.0 1502.5ZM475.5 1503.1L477.0 1502.6L477.0 1502.8L475.5 1502.7ZM487.5 1501.2L489.0 1501.5L489.0 1501.2L487.5 1501.3ZM489.0 1501.5L490.5 1501.7L490.5 1501.1L489.0 1501.2ZM490.5 1501.7L492.0 1502.0L492.0 1501.2L490.5 1501.1ZM492.0 1502.0L493.5 1502.3L493.5 1501.4L492.0 1501.2ZM493.5 1502.3L495.0 1502.6L495.0 1501.6L493.5 1501.4ZM495.0 1502.6L496.5 1503.8L496.5 1502.0L495.0 1501.6ZM496.5 1503.8L498.0 1505.1L498.0 1502.5L496.5 1502.0ZM498.0 1505.1L499.5 1506.4L499.5 1503.2L498.0 1502.5ZM499.5 1506.4L501.0 1506.4L501.0 1503.8L499.5 1503.2ZM501.0 1506.4L502.5 1505.8L502.5 1504.3L501.0 1503.8ZM502.5 1505.8L504.0 1505.2L504.0 1504.7L502.5 1504.3ZM504.0 1505.2L505.5 1504.6L505.5 1505.0L504.0 1504.7ZM505.5 1504.6L507.0 1506.1L507.0 1505.4L505.5 1505.0ZM507.0 1506.1L508.5 1508.0L508.5 1505.9L507.0 1505.4ZM508.5 1508.0L510.0 1509.8L510.0 1506.5L508.5 1505.9ZM510.0 1509.8L511.5 1513.5L511.5 1507.4L510.0 1506.5ZM511.5 1513.5L513.0 1517.6L513.0 1508.8L511.5 1507.4ZM513.0 1517.6L514.5 1521.7L514.5 1510.8L513.0 1508.8ZM514.5 1521.7L516.0 1525.6L516.0 1513.4L514.5 1510.8ZM516.0 1525.6L517.5 1529.4L517.5 1516.5L516.0 1513.4ZM517.5 1529.4L519.0 1532.8L519.0 1519.8L517.5 1516.5ZM519.0 1532.8L520.5 1533.0L520.5 1522.9L519.0 1519.8ZM520.5 1533.0L522.0 1533.0L522.0 1525.8L520.5 1522.9ZM522.0 1533.0L523.5 1531.0L523.5 1528.0L522.0 1525.8ZM523.5 1531.0L525.0 1529.0L525.0 1529.4L523.5 1528.0ZM552.0 1500.7L553.5 1501.3L553.5 1500.0L552.0 1500.2ZM553.5 1501.3L555.0 1501.4L555.0 1500.0L553.5 1500.0ZM555.0 1501.4L556.5 1501.3L556.5 1500.2L555.0 1500.0ZM556.5 1501.3L558.0 1501.2L558.0 1500.5L556.5 1500.2ZM558.0 1501.2L559.5 1501.1L559.5 1500.8L558.0 1500.5ZM559.5 1501.1L561.0 1501.1L561.0 1501.0L559.5 1500.8ZM567.0 1501.2L568.5 1501.6L568.5 1501.2L567.0 1501.1ZM568.5 1501.6L570.0 1502.0L570.0 1501.3L568.5 1501.2ZM570.0 1502.0L571.5 1502.4L571.5 1501.4L570.0 1501.3ZM571.5 1502.4L573.0 1502.8L573.0 1501.6L571.5 1501.4ZM573.0 1502.8L574.5 1502.6L574.5 1501.8L573.0 1501.6ZM574.5 1502.6L576.0 1502.1L576.0 1502.0L574.5 1501.8ZM588.0 1500.6L589.5 1502.8L589.5 1500.6L588.0 1500.5ZM589.5 1502.8L591.0 1505.4L591.0 1501.1L589.5 1500.6ZM591.0 1505.4L592.5 1509.4L592.5 1502.2L591.0 1501.1ZM592.5 1509.4L594.0 1513.4L594.0 1503.8L592.5 1502.2ZM594.0 1513.4L595.5 1516.6L595.5 1505.9L594.0 1503.8ZM595.5 1516.6L597.0 1519.4L597.0 1508.4L595.5 1505.9ZM597.0 1519.4L598.5 1518.8L598.5 1510.8L597.0 1508.4ZM598.5 1518.8L600.0 1518.2L600.0 1513.0L598.5 1510.8ZM600.0 1518.2L601.5 1517.2L601.5 1514.8L600.0 1513.0ZM601.5 1517.2L603.0 1515.3L603.0 1516.0L601.5 1514.8ZM613.5 1512.2L615.0 1514.0L615.0 1511.3L613.5 1511.4ZM615.0 1514.0L616.5 1512.8L616.5 1511.2L615.0 1511.3ZM616.5 1512.8L618.0 1511.6L618.0 1511.2L616.5 1511.2ZM618.0 1511.6L619.5 1512.0L619.5 1511.4L618.0 1511.2ZM619.5 1512.0L621.0 1512.8L621.0 1511.8L619.5 1511.4ZM621.0 1512.8L622.5 1513.5L622.5 1512.3L621.0 1511.8ZM622.5 1513.5L624.0 1516.1L624.0 1513.1L622.5 1512.3ZM624.0 1516.1L625.5 1519.1L625.5 1514.0L624.0 1513.1ZM625.5 1519.1L627.0 1521.1L627.0 1514.9L625.5 1514.0ZM627.0 1521.1L628.5 1522.1L628.5 1516.0L627.0 1514.9ZM628.5 1522.1L630.0 1522.9L630.0 1517.4L628.5 1516.0ZM630.0 1522.9L631.5 1523.2L631.5 1518.8L630.0 1517.4ZM631.5 1523.2L633.0 1523.5L633.0 1520.2L631.5 1518.8ZM633.0 1523.5L634.5 1524.7L634.5 1521.6L633.0 1520.2ZM634.5 1524.7L636.0 1526.0L636.0 1522.8L634.5 1521.6ZM636.0 1526.0L637.5 1527.3L637.5 1523.9L636.0 1522.8ZM637.5 1527.3L639.0 1528.3L639.0 1524.8L637.5 1523.9ZM639.0 1528.3L640.5 1529.3L640.5 1525.7L639.0 1524.8ZM640.5 1529.3L642.0 1530.2L642.0 1526.6L640.5 1525.7ZM642.0 1530.2L643.5 1531.3L643.5 1527.6L642.0 1526.6ZM643.5 1531.3L645.0 1532.5L645.0 1528.7L643.5 1527.6ZM645.0 1532.5L646.5 1533.6L646.5 1529.8L645.0 1528.7ZM646.5 1533.6L648.0 1532.6L648.0 1530.6L646.5 1529.8ZM648.0 1532.6L649.5 1530.8L649.5 1531.1L648.0 1530.6ZM666.0 1515.9L667.5 1521.6L667.5 1518.0L666.0 1518.7ZM667.5 1521.6L669.0 1527.0L669.0 1518.2L667.5 1518.0ZM669.0 1527.0L670.5 1530.8L670.5 1519.3L669.0 1518.2ZM670.5 1530.8L672.0 1534.0L672.0 1521.1L670.5 1519.3ZM672.0 1534.0L673.5 1534.5L673.5 1523.5L672.0 1521.1ZM673.5 1534.5L675.0 1535.0L675.0 1526.4L673.5 1523.5ZM675.0 1535.0L676.5 1533.9L676.5 1529.1L675.0 1526.4ZM676.5 1533.9L678.0 1532.8L678.0 1531.2L676.5 1529.1ZM678.0 1532.8L679.5 1530.9L679.5 1532.4L678.0 1531.2ZM694.5 1509.6L696.0 1511.7L696.0 1509.9L694.5 1510.7ZM696.0 1511.7L697.5 1513.8L697.5 1509.7L696.0 1509.9ZM697.5 1513.8L699.0 1515.2L699.0 1510.2L697.5 1509.7ZM699.0 1515.2L700.5 1515.0L700.5 1510.9L699.0 1510.2ZM700.5 1515.0L702.0 1514.1L702.0 1511.8L700.5 1510.9ZM702.0 1514.1L703.5 1511.6L703.5 1512.3L702.0 1511.8ZM717.0 1501.1L718.5 1500.9L718.5 1500.2L717.0 1500.6ZM718.5 1500.9L720.0 1500.8L720.0 1500.1L718.5 1500.2ZM720.0 1500.8L721.5 1500.6L721.5 1500.2L720.0 1500.1ZM721.5 1500.6L723.0 1502.6L723.0 1500.7L721.5 1500.2ZM723.0 1502.6L724.5 1504.6L724.5 1501.4L723.0 1500.7ZM724.5 1504.6L726.0 1506.6L726.0 1502.2L724.5 1501.4ZM726.0 1506.6L727.5 1507.7L727.5 1503.1L726.0 1502.2ZM727.5 1507.7L729.0 1508.7L729.0 1504.1L727.5 1503.1ZM729.0 1508.7L730.5 1509.7L730.5 1505.2L729.0 1504.1ZM730.5 1509.7L732.0 1508.7L732.0 1506.1L730.5 1505.2ZM732.0 1508.7L733.5 1507.4L733.5 1507.0L732.0 1506.1ZM748.5 1500.6L750.0 1502.0L750.0 1500.0L748.5 1500.1ZM750.0 1502.0L751.5 1503.2L751.5 1500.2L750.0 1500.0ZM751.5 1503.2L753.0 1504.3L753.0 1500.8L751.5 1500.2ZM753.0 1504.3L754.5 1505.4L754.5 1501.5L753.0 1500.8ZM754.5 1505.4L756.0 1507.7L756.0 1502.6L754.5 1501.5ZM756.0 1507.7L757.5 1510.3L757.5 1504.1L756.0 1502.6ZM757.5 1510.3L759.0 1513.0L759.0 1505.8L757.5 1504.1ZM759.0 1513.0L760.5 1514.6L760.5 1507.6L759.0 1505.8ZM760.5 1514.6L762.0 1515.9L762.0 1509.3L760.5 1507.6ZM762.0 1515.9L763.5 1517.1L763.5 1511.0L762.0 1509.3ZM763.5 1517.1L765.0 1515.3L765.0 1512.4L763.5 1511.0ZM765.0 1515.3L766.5 1513.1L766.5 1513.4L765.0 1512.4ZM780.0 1502.9L781.5 1504.1L781.5 1502.8L780.0 1502.8ZM781.5 1504.1L783.0 1505.4L783.0 1503.2L781.5 1502.8ZM783.0 1505.4L784.5 1506.7L784.5 1503.8L783.0 1503.2ZM784.5 1506.7L786.0 1508.8L786.0 1504.6L784.5 1503.8ZM786.0 1508.8L787.5 1511.1L787.5 1505.7L786.0 1504.6ZM787.5 1511.1L789.0 1513.3L789.0 1506.9L787.5 1505.7ZM789.0 1513.3L790.5 1514.8L790.5 1508.4L789.0 1506.9ZM790.5 1514.8L792.0 1516.1L792.0 1510.0L790.5 1508.4ZM792.0 1516.1L793.5 1516.9L793.5 1511.6L792.0 1510.0ZM793.5 1516.9L795.0 1517.3L795.0 1513.1L793.5 1511.6ZM795.0 1517.3L796.5 1517.6L796.5 1514.5L795.0 1513.1ZM796.5 1517.6L798.0 1518.1L798.0 1515.6L796.5 1514.5ZM798.0 1518.1L799.5 1518.6L799.5 1516.6L798.0 1515.6ZM799.5 1518.6L801.0 1519.5L801.0 1517.3L799.5 1516.6ZM801.0 1519.5L802.5 1522.2L802.5 1518.3L801.0 1517.3ZM802.5 1522.2L804.0 1524.9L804.0 1519.4L802.5 1518.3ZM804.0 1524.9L805.5 1528.7L805.5 1520.8L804.0 1519.4ZM805.5 1528.7L807.0 1532.7L807.0 1522.8L805.5 1520.8ZM807.0 1532.7L808.5 1536.1L808.5 1525.1L807.0 1522.8ZM808.5 1536.1L810.0 1539.1L810.0 1527.7L808.5 1525.1ZM810.0 1539.1L811.5 1541.2L811.5 1530.5L810.0 1527.7ZM811.5 1541.2L813.0 1541.0L813.0 1533.2L811.5 1530.5ZM813.0 1541.0L814.5 1540.8L814.5 1535.6L813.0 1533.2ZM814.5 1540.8L816.0 1540.0L816.0 1537.4L814.5 1535.6ZM816.0 1540.0L817.5 1539.2L817.5 1538.8L816.0 1537.4ZM817.5 1539.2L819.0 1539.2L819.0 1539.6L817.5 1538.8ZM823.5 1540.1L825.0 1541.0L825.0 1539.9L823.5 1539.9ZM825.0 1541.0L826.5 1542.0L826.5 1540.1L825.0 1539.9ZM826.5 1542.0L828.0 1540.4L828.0 1540.1L826.5 1540.1ZM840.0 1528.3L841.5 1533.8L841.5 1526.8L840.0 1527.2ZM841.5 1533.8L843.0 1539.3L843.0 1527.6L841.5 1526.8ZM843.0 1539.3L844.5 1543.1L844.5 1529.4L843.0 1527.6ZM844.5 1543.1L846.0 1546.6L846.0 1532.2L844.5 1529.4ZM846.0 1546.6L847.5 1548.7L847.5 1535.7L846.0 1532.2ZM847.5 1548.7L849.0 1549.7L849.0 1539.3L847.5 1535.7ZM849.0 1549.7L850.5 1550.2L850.5 1542.5L849.0 1539.3ZM850.5 1550.2L852.0 1549.2L852.0 1545.1L850.5 1542.5ZM852.0 1549.2L853.5 1548.2L853.5 1546.9L852.0 1545.1ZM853.5 1548.2L855.0 1547.0L855.0 1547.8L853.5 1546.9ZM867.0 1542.3L868.5 1543.5L868.5 1542.7L867.0 1543.0ZM868.5 1543.5L870.0 1544.8L870.0 1542.7L868.5 1542.7ZM870.0 1544.8L871.5 1546.2L871.5 1543.0L870.0 1542.7ZM871.5 1546.2L873.0 1546.9L873.0 1543.6L871.5 1543.0ZM873.0 1546.9L874.5 1547.4L874.5 1544.3L873.0 1543.6ZM874.5 1547.4L876.0 1548.0L876.0 1545.1L874.5 1544.3ZM876.0 1548.0L877.5 1547.5L877.5 1545.8L876.0 1545.1ZM877.5 1547.5L879.0 1546.5L879.0 1546.3L877.5 1545.8ZM898.5 1515.2L900.0 1519.3L900.0 1515.6L898.5 1516.8ZM900.0 1519.3L901.5 1525.3L901.5 1515.9L900.0 1515.6ZM901.5 1525.3L903.0 1531.3L903.0 1517.5L901.5 1515.9ZM903.0 1531.3L904.5 1536.3L904.5 1520.2L903.0 1517.5ZM904.5 1536.3L906.0 1541.3L906.0 1523.9L904.5 1520.2ZM906.0 1541.3L907.5 1543.6L907.5 1528.1L906.0 1523.9ZM907.5 1543.6L909.0 1545.1L909.0 1532.2L907.5 1528.1ZM909.0 1545.1L910.5 1546.3L910.5 1536.1L909.0 1532.2ZM910.5 1546.3L912.0 1547.3L912.0 1539.6L910.5 1536.1ZM912.0 1547.3L913.5 1548.3L913.5 1542.4L912.0 1539.6ZM913.5 1548.3L915.0 1549.3L915.0 1544.7L913.5 1542.4ZM915.0 1549.3L916.5 1550.3L916.5 1546.4L915.0 1544.7ZM916.5 1550.3L918.0 1550.2L918.0 1547.6L916.5 1546.4ZM918.0 1550.2L919.5 1550.0L919.5 1548.4L918.0 1547.6ZM919.5 1550.0L921.0 1548.9L921.0 1548.8L919.5 1548.4ZM948.0 1511.3L949.5 1515.1L949.5 1509.5L948.0 1509.7ZM949.5 1515.1L951.0 1518.1L951.0 1510.1L949.5 1509.5ZM951.0 1518.1L952.5 1520.9L952.5 1511.3L951.0 1510.1ZM952.5 1520.9L954.0 1522.6L954.0 1513.2L952.5 1511.3ZM954.0 1522.6L955.5 1524.3L955.5 1515.6L954.0 1513.2ZM955.5 1524.3L957.0 1522.6L957.0 1517.7L955.5 1515.6ZM957.0 1522.6L958.5 1520.4L958.5 1519.4L957.0 1517.7ZM973.5 1505.3L975.0 1506.0L975.0 1504.5L973.5 1504.9ZM975.0 1506.0L976.5 1505.0L976.5 1504.3L975.0 1504.5ZM976.5 1505.0L978.0 1503.7L978.0 1504.2L976.5 1504.3ZM996.0 1500.6L997.5 1500.9L997.5 1500.6L996.0 1500.6ZM997.5 1500.9L999.0 1501.2L999.0 1500.6L997.5 1500.6ZM999.0 1501.2L1000.5 1501.5L1000.5 1500.6L999.0 1500.6ZM1000.5 1501.5L1002.0 1501.2L1002.0 1500.6L1000.5 1500.6ZM1002.0 1501.2L1003.5 1500.9L1003.5 1500.8L1002.0 1500.6ZM1011.0 1500.5L1012.5 1500.9L1012.5 1500.6L1011.0 1500.7ZM1012.5 1500.9L1014.0 1501.5L1014.0 1500.6L1012.5 1500.6ZM1014.0 1501.5L1015.5 1502.1L1015.5 1500.8L1014.0 1500.6ZM1015.5 1502.1L1015.9 1502.2L1015.9 1501.0L1015.5 1500.8Z" fill="#2a1414" stroke="#2a1414" stroke-width="0.4"/>
<path d="M1 1508.3H2294 M1 1541.3H2294" stroke="#3030d0" stroke-width="1.2" fill="none"/>
<path d="M0.0 1511.5 L1.5 1511.4 L3.0 1510.9 L4.5 1510.3 L6.0 1509.7 L7.5 1509.1 L9.0 1508.5 L10.5 1508.2 L12.0 1507.5 L13.5 1507.0 L15.0 1506.8 L16.5 1506.8 L18.0 1507.1 L19.5 1507.7 L21.0 1508.7 L22.5 1509.7 L24.0 1510.9 L25.5 1512.1 L27.0 1513.4 L28.5 1514.7 L30.0 1516.0 L31.5 1517.2 L33.0 1518.3 L34.5 1519.3 L36.0 1520.2 L37.5 1521.1 L39.0 1521.9 L40.5 1522.8 L42.0 1523.8 L43.5 1524.7 L45.0 1525.8 L46.5 1526.8 L48.0 1527.6 L49.5 1528.1 L51.0 1528.5 L52.5 1528.7 L54.0 1528.8 L55.5 1528.8 L57.0 1528.7 L58.5 1529.1 L60.0 1530.0 L61.5 1531.3 L63.0 1533.0 L64.5 1534.9 L66.0 1536.5 L67.5 1537.9 L69.0 1538.5 L70.5 1538.3 L72.0 1537.4 L73.5 1536.1 L75.0 1534.2 L76.5 1531.9 L78.0 1529.6 L79.5 1527.3 L81.0 1525.3 L82.5 1523.6 L84.0 1521.9 L85.5 1520.2 L87.0 1518.5 L88.5 1516.8 L90.0 1515.3 L91.5 1514.0 L93.0 1512.7 L94.5 1511.5 L96.0 1510.4 L97.5 1509.3 L99.0 1508.3 L100.5 1507.5 L102.0 1506.7 L103.5 1506.0 L105.0 1505.4 L106.5 1504.8 L108.0 1504.4 L109.5 1504.0 L111.0 1503.7 L112.5 1503.4 L114.0 1503.3 L115.5 1503.1 L117.0 1503.1 L118.5 1503.0 L120.0 1503.1 L121.5 1503.2 L123.0 1503.3 L124.5 1503.4 L126.0 1503.5 L127.5 1503.5 L129.0 1503.5 L130.5 1503.5 L132.0 1503.4 L133.5 1503.3 L135.0 1503.1 L136.5 1502.9 L138.0 1502.8 L139.5 1502.7 L141.0 1502.8 L142.5 1502.9 L144.0 1503.0 L145.5 1503.3 L147.0 1503.6 L148.5 1504.0 L150.0 1504.4 L151.5 1504.8 L153.0 1505.1 L154.5 1505.2 L156.0 1505.4 L157.5 1505.4 L159.0 1505.3 L160.5 1505.2 L162.0 1504.9 L163.5 1504.7 L165.0 1504.4 L166.5 1504.2 L168.0 1503.9 L169.5 1503.7 L171.0 1503.4 L172.5 1503.2 L174.0 1502.9 L175.5 1502.7 L177.0 1502.4 L178.5 1502.3 L180.0 1502.2 L181.5 1502.2 L183.0 1502.2 L184.5 1502.4 L186.0 1502.6 L187.5 1502.9 L189.0 1503.3 L190.5 1503.7 L192.0 1503.9 L193.5 1504.1 L195.0 1504.3 L196.5 1504.3 L198.0 1504.3 L199.5 1504.2 L201.0 1504.0 L202.5 1503.7 L204.0 1503.5 L205.5 1503.4 L207.0 1503.4 L208.5 1503.4 L210.0 1503.6 L211.5 1503.8 L213.0 1504.2 L214.5 1504.6 L216.0 1505.1 L217.5 1505.6 L219.0 1506.1 L220.5 1506.6 L222.0 1507.1 L223.5 1507.6 L225.0 1508.1 L226.5 1508.6 L228.0 1509.1 L229.5 1509.6 L231.0 1510.0 L232.5 1510.3 L234.0 1510.4 L235.5 1510.4 L237.0 1510.2 L238.5 1509.9 L240.0 1509.5 L241.5 1508.9 L243.0 1508.3 L244.5 1507.7 L246.0 1507.1 L247.5 1506.6 L249.0 1506.1 L250.5 1505.6 L252.0 1505.2 L253.5 1504.7 L255.0 1504.4 L256.5 1504.0 L258.0 1503.7 L259.5 1503.5 L261.0 1503.3 L262.5 1503.3 L264.0 1503.3 L265.5 1503.4 L267.0 1503.6 L268.5 1503.8 L270.0 1504.1 L271.5 1504.3 L273.0 1504.6 L274.5 1504.9 L276.0 1505.2 L277.5 1505.6 L279.0 1505.9 L280.5 1506.4 L282.0 1506.9 L283.5 1507.5 L285.0 1508.2 L286.5 1508.6 L288.0 1509.0 L289.5 1509.6 L291.0 1510.4 L292.5 1511.5 L294.0 1512.9 L295.5 1514.8 L297.0 1517.2 L298.5 1520.7 L300.0 1525.1 L301.5 1529.2 L303.0 1532.9 L304.5 1536.2 L306.0 1538.7 L307.5 1540.6 L309.0 1542.0 L310.5 1542.7 L312.0 1542.7 L313.5 1542.8 L315.0 1543.1 L316.5 1543.6 L318.0 1544.2 L319.5 1544.9 L321.0 1545.5 L322.5 1546.0 L324.0 1546.4 L325.5 1546.9 L327.0 1547.2 L328.5 1547.6 L330.0 1548.0 L331.5 1548.3 L333.0 1548.3 L334.5 1548.0 L336.0 1547.4 L337.5 1546.4 L339.0 1545.1 L340.5 1543.7 L342.0 1542.3 L343.5 1541.0 L345.0 1539.8 L346.5 1538.8 L348.0 1537.9 L349.5 1537.2 L351.0 1536.2 L352.5 1534.6 L354.0 1532.6 L355.5 1530.3 L357.0 1527.9 L358.5 1525.4 L360.0 1522.7 L361.5 1519.7 L363.0 1517.0 L364.5 1514.5 L366.0 1512.3 L367.5 1510.0 L369.0 1507.9 L370.5 1505.9 L372.0 1504.1 L373.5 1502.7 L375.0 1501.8 L376.5 1501.4 L378.0 1501.5 L379.5 1501.9 L381.0 1502.6 L382.5 1503.6 L384.0 1505.0 L385.5 1506.9 L387.0 1509.3 L388.5 1512.5 L390.0 1516.4 L391.5 1520.8 L393.0 1525.7 L394.5 1530.6 L396.0 1535.0 L397.5 1539.0 L399.0 1541.9 L400.5 1543.8 L402.0 1544.4 L403.5 1544.0 L405.0 1542.5 L406.5 1540.6 L408.0 1538.3 L409.5 1535.8 L411.0 1533.2 L412.5 1530.6 L414.0 1528.3 L415.5 1526.2 L417.0 1524.3 L418.5 1522.7 L420.0 1521.4 L421.5 1520.6 L423.0 1520.2 L424.5 1520.1 L426.0 1520.4 L427.5 1520.7 L429.0 1521.1 L430.5 1521.4 L432.0 1521.3 L433.5 1520.8 L435.0 1519.8 L436.5 1518.2 L438.0 1516.2 L439.5 1514.0 L441.0 1512.2 L442.5 1510.7 L444.0 1510.1 L445.5 1509.9 L447.0 1510.1 L448.5 1510.6 L450.0 1511.0 L451.5 1511.4 L453.0 1511.4 L454.5 1510.8 L456.0 1509.5 L457.5 1508.0 L459.0 1506.4 L460.5 1505.0 L462.0 1503.8 L463.5 1503.0 L465.0 1502.4 L466.5 1502.1 L468.0 1502.0 L469.5 1502.1 L471.0 1502.2 L472.5 1502.4 L474.0 1502.5 L475.5 1502.7 L477.0 1502.8 L478.5 1502.7 L480.0 1502.6 L481.5 1502.4 L483.0 1502.1 L484.5 1501.8 L486.0 1501.6 L487.5 1501.3 L489.0 1501.2 L490.5 1501.1 L492.0 1501.2 L493.5 1501.4 L495.0 1501.6 L496.5 1502.0 L498.0 1502.5 L499.5 1503.2 L501.0 1503.8 L502.5 1504.3 L504.0 1504.7 L505.5 1505.0 L507.0 1505.4 L508.5 1505.9 L510.0 1506.5 L511.5 1507.4 L513.0 1508.8 L514.5 1510.8 L516.0 1513.4 L517.5 1516.5 L519.0 1519.8 L520.5 1522.9 L522.0 1525.8 L523.5 1528.0 L525.0 1529.4 L526.5 1529.9 L528.0 1529.5 L529.5 1528.2 L531.0 1526.2 L532.5 1523.8 L534.0 1521.1 L535.5 1518.5 L537.0 1516.0 L538.5 1513.6 L540.0 1511.5 L541.5 1509.5 L543.0 1507.6 L544.5 1505.9 L546.0 1504.2 L547.5 1502.8 L549.0 1501.7 L550.5 1500.8 L552.0 1500.2 L553.5 1500.0 L555.0 1500.0 L556.5 1500.2 L558.0 1500.5 L559.5 1500.8 L561.0 1501.0 L562.5 1501.1 L564.0 1501.2 L565.5 1501.2 L567.0 1501.1 L568.5 1501.2 L570.0 1501.3 L571.5 1501.4 L573.0 1501.6 L574.5 1501.8 L576.0 1502.0 L577.5 1502.0 L579.0 1502.0 L580.5 1501.9 L582.0 1501.7 L583.5 1501.4 L585.0 1501.0 L586.5 1500.7 L588.0 1500.5 L589.5 1500.6 L591.0 1501.1 L592.5 1502.2 L594.0 1503.8 L595.5 1505.9 L597.0 1508.4 L598.5 1510.8 L600.0 1513.0 L601.5 1514.8 L603.0 1516.0 L604.5 1516.5 L606.0 1516.3 L607.5 1515.6 L609.0 1514.3 L610.5 1513.1 L612.0 1512.1 L613.5 1511.4 L615.0 1511.3 L616.5 1511.2 L618.0 1511.2 L619.5 1511.4 L621.0 1511.8 L622.5 1512.3 L624.0 1513.1 L625.5 1514.0 L627.0 1514.9 L628.5 1516.0 L630.0 1517.4 L631.5 1518.8 L633.0 1520.2 L634.5 1521.6 L636.0 1522.8 L637.5 1523.9 L639.0 1524.8 L640.5 1525.7 L642.0 1526.6 L643.5 1527.6 L645.0 1528.7 L646.5 1529.8 L648.0 1530.6 L649.5 1531.1 L651.0 1531.2 L652.5 1531.2 L654.0 1531.1 L655.5 1530.6 L657.0 1529.7 L658.5 1528.3 L660.0 1526.6 L661.5 1524.7 L663.0 1522.4 L664.5 1520.3 L666.0 1518.7 L667.5 1518.0 L669.0 1518.2 L670.5 1519.3 L672.0 1521.1 L673.5 1523.5 L675.0 1526.4 L676.5 1529.1 L678.0 1531.2 L679.5 1532.4 L681.0 1532.3 L682.5 1531.3 L684.0 1529.4 L685.5 1527.0 L687.0 1524.0 L688.5 1520.9 L690.0 1517.7 L691.5 1514.8 L693.0 1512.4 L694.5 1510.7 L696.0 1509.9 L697.5 1509.7 L699.0 1510.2 L700.5 1510.9 L702.0 1511.8 L703.5 1512.3 L705.0 1512.4 L706.5 1511.8 L708.0 1510.5 L709.5 1508.8 L711.0 1506.7 L712.5 1504.7 L714.0 1503.0 L715.5 1501.6 L717.0 1500.6 L718.5 1500.2 L720.0 1500.1 L721.5 1500.2 L723.0 1500.7 L724.5 1501.4 L726.0 1502.2 L727.5 1503.1 L729.0 1504.1 L730.5 1505.2 L732.0 1506.1 L733.5 1507.0 L735.0 1507.4 L736.5 1507.3 L738.0 1506.8 L739.5 1506.0 L741.0 1504.9 L742.5 1503.7 L744.0 1502.5 L745.5 1501.3 L747.0 1500.5 L748.5 1500.1 L750.0 1500.0 L751.5 1500.2 L753.0 1500.8 L754.5 1501.5 L756.0 1502.6 L757.5 1504.1 L759.0 1505.8 L760.5 1507.6 L762.0 1509.3 L763.5 1511.0 L765.0 1512.4 L766.5 1513.4 L768.0 1513.5 L769.5 1512.7 L771.0 1511.4 L772.5 1509.8 L774.0 1508.1 L775.5 1506.3 L777.0 1504.8 L778.5 1503.6 L780.0 1502.8 L781.5 1502.8 L783.0 1503.2 L784.5 1503.8 L786.0 1504.6 L787.5 1505.7 L789.0 1506.9 L790.5 1508.4 L792.0 1510.0 L793.5 1511.6 L795.0 1513.1 L796.5 1514.5 L798.0 1515.6 L799.5 1516.6 L801.0 1517.3 L802.5 1518.3 L804.0 1519.4 L805.5 1520.8 L807.0 1522.8 L808.5 1525.1 L810.0 1527.7 L811.5 1530.5 L813.0 1533.2 L814.5 1535.6 L816.0 1537.4 L817.5 1538.8 L819.0 1539.6 L820.5 1540.0 L822.0 1540.1 L823.5 1539.9 L825.0 1539.9 L826.5 1540.1 L828.0 1540.1 L829.5 1539.8 L831.0 1539.1 L832.5 1537.7 L834.0 1535.8 L835.5 1533.4 L837.0 1530.9 L838.5 1528.7 L840.0 1527.2 L841.5 1526.8 L843.0 1527.6 L844.5 1529.4 L846.0 1532.2 L847.5 1535.7 L849.0 1539.3 L850.5 1542.5 L852.0 1545.1 L853.5 1546.9 L855.0 1547.8 L856.5 1548.2 L858.0 1547.9 L859.5 1547.3 L861.0 1546.4 L862.5 1545.3 L864.0 1544.4 L865.5 1543.6 L867.0 1543.0 L868.5 1542.7 L870.0 1542.7 L871.5 1543.0 L873.0 1543.6 L874.5 1544.3 L876.0 1545.1 L877.5 1545.8 L879.0 1546.3 L880.5 1546.6 L882.0 1546.5 L883.5 1545.9 L885.0 1544.9 L886.5 1543.1 L888.0 1540.7 L889.5 1537.7 L891.0 1534.2 L892.5 1530.3 L894.0 1526.2 L895.5 1522.3 L897.0 1519.1 L898.5 1516.8 L900.0 1515.6 L901.5 1515.9 L903.0 1517.5 L904.5 1520.2 L906.0 1523.9 L907.5 1528.1 L909.0 1532.2 L910.5 1536.1 L912.0 1539.6 L913.5 1542.4 L915.0 1544.7 L916.5 1546.4 L918.0 1547.6 L919.5 1548.4 L921.0 1548.8 L922.5 1548.9 L924.0 1548.6 L925.5 1547.7 L927.0 1546.1 L928.5 1543.9 L930.0 1541.4 L931.5 1538.5 L933.0 1535.4 L934.5 1532.2 L936.0 1529.1 L937.5 1526.1 L939.0 1523.3 L940.5 1520.4 L942.0 1517.6 L943.5 1515.0 L945.0 1512.6 L946.5 1510.8 L948.0 1509.7 L949.5 1509.5 L951.0 1510.1 L952.5 1511.3 L954.0 1513.2 L955.5 1515.6 L957.0 1517.7 L958.5 1519.4 L960.0 1520.1 L961.5 1519.9 L963.0 1518.8 L964.5 1517.0 L966.0 1514.7 L967.5 1512.0 L969.0 1509.5 L970.5 1507.5 L972.0 1505.9 L973.5 1504.9 L975.0 1504.5 L976.5 1504.3 L978.0 1504.2 L979.5 1504.2 L981.0 1504.1 L982.5 1503.8 L984.0 1503.4 L985.5 1502.9 L987.0 1502.3 L988.5 1501.9 L990.0 1501.5 L991.5 1501.2 L993.0 1500.9 L994.5 1500.7 L996.0 1500.6 L997.5 1500.6 L999.0 1500.6 L1000.5 1500.6 L1002.0 1500.6 L1003.5 1500.8 L1005.0 1500.9 L1006.5 1500.9 L1008.0 1500.8 L1009.5 1500.8 L1011.0 1500.7 L1012.5 1500.6 L1014.0 1500.6 L1015.5 1500.8 L1015.9 1501.0" fill="none" stroke="#e06c68" stroke-width="1.1" stroke-dasharray="4 3"/>
<path d="M0.0 1511.5 L1.5 1511.2 L3.0 1509.9 L4.5 1508.6 L6.0 1507.3 L7.5 1506.1 L9.0 1505.0 L10.5 1505.7 L12.0 1506.5 L13.5 1507.2 L15.0 1508.0 L16.5 1508.7 L18.0 1509.6 L19.5 1511.1 L21.0 1512.6 L22.5 1514.1 L24.0 1515.6 L25.5 1517.1 L27.0 1518.4 L28.5 1519.1 L30.0 1519.9 L31.5 1520.6 L33.0 1521.4 L34.5 1522.1 L36.0 1523.0 L37.5 1524.1 L39.0 1525.2 L40.5 1526.2 L42.0 1527.3 L43.5 1528.5 L45.0 1530.0 L46.5 1529.9 L48.0 1529.3 L49.5 1528.7 L51.0 1528.1 L52.5 1528.1 L54.0 1528.1 L55.5 1528.1 L57.0 1529.6 L58.5 1533.1 L60.0 1536.4 L61.5 1539.0 L63.0 1541.6 L64.5 1543.1 L66.0 1541.1 L67.5 1539.0 L69.0 1535.0 L70.5 1531.0 L72.0 1529.5 L73.5 1528.5 L75.0 1526.8 L76.5 1524.7 L78.0 1522.6 L79.5 1520.5 L81.0 1519.0 L82.5 1517.5 L84.0 1516.0 L85.5 1514.5 L87.0 1513.0 L88.5 1511.5 L90.0 1510.6 L91.5 1509.7 L93.0 1508.8 L94.5 1507.9 L96.0 1507.0 L97.5 1506.1 L99.0 1505.2 L100.5 1504.7 L102.0 1504.4 L103.5 1504.1 L105.0 1503.8 L106.5 1503.5 L108.0 1503.2 L109.5 1502.9 L111.0 1502.7 L112.5 1502.9 L114.0 1503.0 L115.5 1503.1 L117.0 1503.2 L118.5 1503.4 L120.0 1503.5 L121.5 1503.6 L123.0 1503.7 L124.5 1503.7 L126.0 1503.5 L127.5 1503.4 L129.0 1503.2 L130.5 1503.0 L132.0 1502.8 L133.5 1502.7 L135.0 1502.5 L136.5 1502.3 L138.0 1502.5 L139.5 1502.9 L141.0 1503.4 L142.5 1503.8 L144.0 1504.2 L145.5 1504.6 L147.0 1505.1 L148.5 1505.5 L150.0 1505.9 L151.5 1505.8 L153.0 1505.6 L154.5 1505.3 L156.0 1505.1 L157.5 1504.8 L159.0 1504.6 L160.5 1504.3 L162.0 1504.1 L163.5 1503.8 L165.0 1503.6 L166.5 1503.3 L168.0 1503.1 L169.5 1502.8 L171.0 1502.6 L172.5 1502.3 L174.0 1502.1 L175.5 1501.8 L177.0 1501.6 L178.5 1502.0 L180.0 1502.4 L181.5 1502.7 L183.0 1503.1 L184.5 1503.5 L186.0 1503.9 L187.5 1504.2 L189.0 1504.6 L190.5 1504.8 L192.0 1504.6 L193.5 1504.3 L195.0 1504.1 L196.5 1503.8 L198.0 1503.6 L199.5 1503.3 L201.0 1503.1 L202.5 1502.8 L204.0 1502.9 L205.5 1503.4 L207.0 1503.9 L208.5 1504.4 L210.0 1504.9 L211.5 1505.4 L213.0 1505.9 L214.5 1506.4 L216.0 1506.9 L217.5 1507.4 L219.0 1507.9 L220.5 1508.4 L222.0 1508.9 L223.5 1509.4 L225.0 1509.9 L226.5 1510.4 L228.0 1510.9 L229.5 1511.4 L231.0 1511.1 L232.5 1510.5 L234.0 1509.8 L235.5 1509.2 L237.0 1508.6 L238.5 1508.0 L240.0 1507.3 L241.5 1506.7 L243.0 1506.1 L244.5 1505.7 L246.0 1505.3 L247.5 1504.9 L249.0 1504.6 L250.5 1504.2 L252.0 1503.8 L253.5 1503.4 L255.0 1503.1 L256.5 1502.7 L258.0 1502.9 L259.5 1503.2 L261.0 1503.4 L262.5 1503.7 L264.0 1503.9 L265.5 1504.2 L267.0 1504.4 L268.5 1504.7 L270.0 1505.0 L271.5 1505.3 L273.0 1505.7 L274.5 1506.1 L276.0 1506.5 L277.5 1506.8 L279.0 1507.4 L280.5 1508.3 L282.0 1509.2 L283.5 1510.1 L285.0 1511.0 L286.5 1509.8 L288.0 1509.7 L289.5 1511.7 L291.0 1513.7 L292.5 1516.7 L294.0 1520.8 L295.5 1524.9 L297.0 1530.5 L298.5 1537.6 L300.0 1544.7 L301.5 1544.8 L303.0 1543.7 L304.5 1542.5 L306.0 1541.1 L307.5 1540.0 L309.0 1541.7 L310.5 1543.3 L312.0 1544.8 L313.5 1545.5 L315.0 1546.2 L316.5 1546.1 L318.0 1545.9 L319.5 1545.8 L321.0 1546.6 L322.5 1547.3 L324.0 1548.1 L325.5 1548.8 L327.0 1549.1 L328.5 1549.1 L330.0 1549.1 L331.5 1548.1 L333.0 1546.6 L334.5 1545.1 L336.0 1543.1 L337.5 1540.9 L339.0 1538.6 L340.5 1537.9 L342.0 1537.7 L343.5 1537.6 L345.0 1537.4 L346.5 1536.8 L348.0 1536.3 L349.5 1535.3 L351.0 1530.4 L352.5 1525.5 L354.0 1521.2 L355.5 1519.7 L357.0 1518.2 L358.5 1516.7 L360.0 1514.5 L361.5 1511.5 L363.0 1508.5 L364.5 1505.5 L366.0 1503.5 L367.5 1501.8 L369.0 1500.9 L370.5 1500.5 L372.0 1500.2 L373.5 1500.6 L375.0 1501.5 L376.5 1502.4 L378.0 1503.7 L379.5 1505.2 L381.0 1506.7 L382.5 1508.2 L384.0 1511.7 L385.5 1515.2 L387.0 1521.3 L388.5 1528.1 L390.0 1534.8 L391.5 1540.3 L393.0 1545.6 L394.5 1547.5 L396.0 1547.4 L397.5 1546.6 L399.0 1544.9 L400.5 1542.9 L402.0 1539.9 L403.5 1536.9 L405.0 1534.1 L406.5 1531.6 L408.0 1529.1 L409.5 1526.6 L411.0 1524.1 L412.5 1522.6 L414.0 1521.4 L415.5 1520.1 L417.0 1518.9 L418.5 1518.5 L420.0 1519.2 L421.5 1520.0 L423.0 1520.9 L424.5 1522.0 L426.0 1523.2 L427.5 1523.1 L429.0 1522.0 L430.5 1520.8 L432.0 1518.6 L433.5 1515.6 L435.0 1512.6 L436.5 1509.8 L438.0 1507.0 L439.5 1505.9 L441.0 1507.2 L442.5 1509.1 L444.0 1513.3 L445.5 1514.4 L447.0 1514.4 L448.5 1513.2 L450.0 1510.9 L451.5 1508.7 L453.0 1506.8 L454.5 1504.9 L456.0 1503.0 L457.5 1502.1 L459.0 1502.0 L460.5 1501.8 L462.0 1501.6 L463.5 1501.8 L465.0 1502.1 L466.5 1502.3 L468.0 1502.6 L469.5 1502.7 L471.0 1502.8 L472.5 1502.9 L474.0 1503.0 L475.5 1503.1 L477.0 1502.6 L478.5 1502.0 L480.0 1501.5 L481.5 1501.0 L483.0 1500.5 L484.5 1500.7 L486.0 1501.0 L487.5 1501.2 L489.0 1501.5 L490.5 1501.7 L492.0 1502.0 L493.5 1502.3 L495.0 1502.6 L496.5 1503.8 L498.0 1505.1 L499.5 1506.4 L501.0 1506.4 L502.5 1505.8 L504.0 1505.2 L505.5 1504.6 L507.0 1506.1 L508.5 1508.0 L510.0 1509.8 L511.5 1513.5 L513.0 1517.6 L514.5 1521.7 L516.0 1525.6 L517.5 1529.4 L519.0 1532.8 L520.5 1533.0 L522.0 1533.0 L523.5 1531.0 L525.0 1529.0 L526.5 1525.8 L528.0 1522.4 L529.5 1519.1 L531.0 1516.4 L532.5 1513.9 L534.0 1511.4 L535.5 1510.1 L537.0 1508.7 L538.5 1507.1 L540.0 1505.1 L541.5 1503.2 L543.0 1501.5 L544.5 1499.9 L546.0 1498.3 L547.5 1498.8 L549.0 1499.3 L550.5 1500.0 L552.0 1500.7 L553.5 1501.3 L555.0 1501.4 L556.5 1501.3 L558.0 1501.2 L559.5 1501.1 L561.0 1501.1 L562.5 1501.1 L564.0 1501.1 L565.5 1501.1 L567.0 1501.2 L568.5 1501.6 L570.0 1502.0 L571.5 1502.4 L573.0 1502.8 L574.5 1502.6 L576.0 1502.1 L577.5 1501.6 L579.0 1501.1 L580.5 1500.7 L582.0 1500.4 L583.5 1500.0 L585.0 1499.8 L586.5 1499.6 L588.0 1500.6 L589.5 1502.8 L591.0 1505.4 L592.5 1509.4 L594.0 1513.4 L595.5 1516.6 L597.0 1519.4 L598.5 1518.8 L600.0 1518.2 L601.5 1517.2 L603.0 1515.3 L604.5 1513.5 L606.0 1511.7 L607.5 1510.4 L609.0 1509.1 L610.5 1509.3 L612.0 1509.9 L613.5 1512.2 L615.0 1514.0 L616.5 1512.8 L618.0 1511.6 L619.5 1512.0 L621.0 1512.8 L622.5 1513.5 L624.0 1516.1 L625.5 1519.1 L627.0 1521.1 L628.5 1522.1 L630.0 1522.9 L631.5 1523.2 L633.0 1523.5 L634.5 1524.7 L636.0 1526.0 L637.5 1527.3 L639.0 1528.3 L640.5 1529.3 L642.0 1530.2 L643.5 1531.3 L645.0 1532.5 L646.5 1533.6 L648.0 1532.6 L649.5 1530.8 L651.0 1529.6 L652.5 1529.2 L654.0 1528.9 L655.5 1527.7 L657.0 1525.0 L658.5 1522.4 L660.0 1519.4 L661.5 1515.4 L663.0 1511.4 L664.5 1512.6 L666.0 1515.9 L667.5 1521.6 L669.0 1527.0 L670.5 1530.8 L672.0 1534.0 L673.5 1534.5 L675.0 1535.0 L676.5 1533.9 L678.0 1532.8 L679.5 1530.9 L681.0 1526.7 L682.5 1522.6 L684.0 1518.6 L685.5 1515.1 L687.0 1511.6 L688.5 1508.9 L690.0 1507.3 L691.5 1507.3 L693.0 1507.5 L694.5 1509.6 L696.0 1511.7 L697.5 1513.8 L699.0 1515.2 L700.5 1515.0 L702.0 1514.1 L703.5 1511.6 L705.0 1508.5 L706.5 1504.7 L708.0 1501.3 L709.5 1499.7 L711.0 1498.5 L712.5 1499.3 L714.0 1500.1 L715.5 1500.6 L717.0 1501.1 L718.5 1500.9 L720.0 1500.8 L721.5 1500.6 L723.0 1502.6 L724.5 1504.6 L726.0 1506.6 L727.5 1507.7 L729.0 1508.7 L730.5 1509.7 L732.0 1508.7 L733.5 1507.4 L735.0 1505.9 L736.5 1504.2 L738.0 1502.6 L739.5 1501.3 L741.0 1500.0 L742.5 1499.5 L744.0 1499.0 L745.5 1498.5 L747.0 1499.2 L748.5 1500.6 L750.0 1502.0 L751.5 1503.2 L753.0 1504.3 L754.5 1505.4 L756.0 1507.7 L757.5 1510.3 L759.0 1513.0 L760.5 1514.6 L762.0 1515.9 L763.5 1517.1 L765.0 1515.3 L766.5 1513.1 L768.0 1508.6 L769.5 1504.1 L771.0 1502.7 L772.5 1501.9 L774.0 1502.0 L775.5 1502.8 L777.0 1503.3 L778.5 1503.1 L780.0 1502.9 L781.5 1504.1 L783.0 1505.4 L784.5 1506.7 L786.0 1508.8 L787.5 1511.1 L789.0 1513.3 L790.5 1514.8 L792.0 1516.1 L793.5 1516.9 L795.0 1517.3 L796.5 1517.6 L798.0 1518.1 L799.5 1518.6 L801.0 1519.5 L802.5 1522.2 L804.0 1524.9 L805.5 1528.7 L807.0 1532.7 L808.5 1536.1 L810.0 1539.1 L811.5 1541.2 L813.0 1541.0 L814.5 1540.8 L816.0 1540.0 L817.5 1539.2 L819.0 1539.2 L820.5 1539.5 L822.0 1539.8 L823.5 1540.1 L825.0 1541.0 L826.5 1542.0 L828.0 1540.4 L829.5 1536.9 L831.0 1533.1 L832.5 1528.6 L834.0 1524.1 L835.5 1521.1 L837.0 1521.0 L838.5 1524.5 L840.0 1528.3 L841.5 1533.8 L843.0 1539.3 L844.5 1543.1 L846.0 1546.6 L847.5 1548.7 L849.0 1549.7 L850.5 1550.2 L852.0 1549.2 L853.5 1548.2 L855.0 1547.0 L856.5 1545.9 L858.0 1544.8 L859.5 1543.7 L861.0 1542.5 L862.5 1541.4 L864.0 1541.6 L865.5 1541.9 L867.0 1542.3 L868.5 1543.5 L870.0 1544.8 L871.5 1546.2 L873.0 1546.9 L874.5 1547.4 L876.0 1548.0 L877.5 1547.5 L879.0 1546.5 L880.5 1545.5 L882.0 1543.8 L883.5 1541.6 L885.0 1538.5 L886.5 1533.5 L888.0 1528.5 L889.5 1523.5 L891.0 1518.5 L892.5 1514.4 L894.0 1511.3 L895.5 1510.5 L897.0 1512.2 L898.5 1515.2 L900.0 1519.3 L901.5 1525.3 L903.0 1531.3 L904.5 1536.3 L906.0 1541.3 L907.5 1543.6 L909.0 1545.1 L910.5 1546.3 L912.0 1547.3 L913.5 1548.3 L915.0 1549.3 L916.5 1550.3 L918.0 1550.2 L919.5 1550.0 L921.0 1548.9 L922.5 1547.1 L924.0 1544.6 L925.5 1540.6 L927.0 1536.6 L928.5 1533.3 L930.0 1529.9 L931.5 1526.5 L933.0 1524.2 L934.5 1522.0 L936.0 1519.7 L937.5 1516.8 L939.0 1513.8 L940.5 1510.7 L942.0 1507.5 L943.5 1505.3 L945.0 1505.5 L946.5 1507.0 L948.0 1511.3 L949.5 1515.1 L951.0 1518.1 L952.5 1520.9 L954.0 1522.6 L955.5 1524.3 L957.0 1522.6 L958.5 1520.4 L960.0 1517.1 L961.5 1513.1 L963.0 1509.4 L964.5 1506.6 L966.0 1504.2 L967.5 1502.9 L969.0 1502.7 L970.5 1503.7 L972.0 1504.6 L973.5 1505.3 L975.0 1506.0 L976.5 1505.0 L978.0 1503.7 L979.5 1502.5 L981.0 1501.9 L982.5 1501.5 L984.0 1501.2 L985.5 1501.2 L987.0 1501.3 L988.5 1501.5 L990.0 1500.8 L991.5 1499.8 L993.0 1499.5 L994.5 1500.1 L996.0 1500.6 L997.5 1500.9 L999.0 1501.2 L1000.5 1501.5 L1002.0 1501.2 L1003.5 1500.9 L1005.0 1500.6 L1006.5 1500.3 L1008.0 1500.0 L1009.5 1500.2 L1011.0 1500.5 L1012.5 1500.9 L1014.0 1501.5 L1015.5 1502.1 L1015.9 1502.2" fill="none" stroke="#d8d8d8" stroke-width="1"/>
</g>
<rect x="0" y="1082" width="2295" height="1" fill="#4a4c4f"/>
<rect x="0" y="1162" width="2295" height="1" fill="#4a4c4f"/>
<rect x="0" y="1351" width="2295" height="1" fill="#4a4c4f"/>
<rect x="0" y="1491" width="2295" height="1" fill="#4a4c4f"/>
<rect x="0" y="1554" width="2295" height="1" fill="#4a4c4f"/>
<rect x="2294" y="38" width="1.4" height="1517" fill="#4c5256"/>
<rect x="0" y="38" width="1.5" height="1562" fill="#44474a"/>
<rect x="18.0" y="1555" width="1" height="4" fill="#5d7076"/>
<rect x="173.9" y="1555" width="1" height="4" fill="#5d7076"/>
<rect x="332.8" y="1555" width="1" height="4" fill="#5d7076"/>
<rect x="487.9" y="1555" width="1" height="4" fill="#5d7076"/>
<rect x="643.8" y="1555" width="1" height="4" fill="#5d7076"/>
<rect x="800.0" y="1555" width="1" height="4" fill="#5d7076"/>
<rect x="955.2" y="1555" width="1" height="4" fill="#5d7076"/>
<rect x="1111.1" y="1555" width="1" height="4" fill="#5d7076"/>
<rect x="1270.0" y="1555" width="1" height="4" fill="#5d7076"/>
<rect x="1425.1" y="1555" width="1" height="4" fill="#5d7076"/>
<rect x="1581.0" y="1555" width="1" height="4" fill="#5d7076"/>
<rect x="1737.0" y="1555" width="1" height="4" fill="#5d7076"/>
<rect x="1892.1" y="1555" width="1" height="4" fill="#5d7076"/>
<rect x="2051.0" y="1555" width="1" height="4" fill="#5d7076"/>
<rect x="2206.9" y="1555" width="1" height="4" fill="#5d7076"/></svg>
<div class="lg" style="left:0px;top:38px;width:114px"><i style="left:4.00px;width:12.50px;background:#4fd34f"></i><i style="left:16.50px;width:12.50px;background:#e06c6c"></i><span style="left:33.6px">Precio</span></div><div class="lg" style="left:113px;top:38px;width:171px"><i style="left:4.00px;width:25.00px;background:#d2d200"></i><span style="left:33.6px">SMA (200)</span></div><div class="lg" style="left:283px;top:38px;width:226px"><i style="left:4.00px;width:25.00px;background:#8000c0"></i><span style="left:33.6px">Bollinger (20 2)</span></div><div class="lg" style="left:508px;top:38px;width:156px"><i style="left:4.00px;width:25.00px;background:#ff0030"></i><span style="left:33.6px">SMA (50)</span></div>
<div class="lg" style="left:0px;top:1082px;width:147px"><i style="left:4.00px;width:12.50px;background:#4fd34f"></i><i style="left:16.50px;width:12.50px;background:#e06c6c"></i><span style="left:33.6px">Volumen</span></div><div class="lg" style="left:146px;top:1082px;width:172px"><i style="left:4.00px;width:25.00px;background:#d2d200"></i><span style="left:33.6px">SMA (200)</span></div>
<div class="lg" style="left:0px;top:1162px;width:142px"><i style="left:4.00px;width:25.00px;background:#cfcfcf"></i><span style="left:33.6px">RSI (14)</span></div>
<div class="lg" style="left:0px;top:1351px;width:241px"><i style="left:4.00px;width:8.33px;background:#4fd34f"></i><i style="left:12.33px;width:8.33px;background:#e06c6c"></i><i style="left:20.67px;width:8.33px;background:#3434e8"></i><span style="left:33.6px">MACD (12 26 9)</span></div>
<div class="lg" style="left:0px;top:1491px;width:285px"><i style="left:4.00px;width:12.50px;background:#cfcfcf"></i><i style="left:16.50px;width:12.50px;background:#e06c6c"></i><span style="left:33.6px">Estocástico (14 3 5)</span></div>
<div style="left:2px;top:1068px;width:84px;height:14px;font-size:10.6px;line-height:14px;color:#b4bcc6;">ProRealTime.com</div>
<div class="ax" style="top:157.5px;">400</div>
<div class="tk" style="top:172.5px;background:#4c6268;width:4px"></div>
<div class="ax" style="top:269.2px;">300</div>
<div class="tk" style="top:284.2px;background:#4c6268;width:4px"></div>
<div class="ax" style="top:426.5px;">200</div>
<div class="tk" style="top:441.5px;background:#4c6268;width:4px"></div>
<div class="ax" style="top:538.2px;">150</div>
<div class="tk" style="top:553.2px;background:#4c6268;width:4px"></div>
<div class="ax" style="top:695.5px;font-weight:bold;">100</div>
<div class="tk" style="top:710.5px;background:#4c6268;width:4px"></div>
<div class="ax" style="top:893.5px;">60</div>
<div class="tk" style="top:908.5px;background:#4c6268;width:4px"></div>
<div class="ax" style="top:1049.5px;">40</div>
<div class="tk" style="top:1064.5px;background:#4c6268;width:4px"></div>
<div class="ax" style="top:1092.5px;">500M</div>
<div class="tk" style="top:1107.5px;background:#4c6268;width:4px"></div>
<div class="ax" style="top:1164.5px;font-weight:bold;">100</div>
<div class="tk" style="top:1179.5px;background:#4c6268;width:4px"></div>
<div class="ax" style="top:1246.0px;">50</div>
<div class="tk" style="top:1261.0px;background:#4c6268;width:4px"></div>
<div class="ax" style="top:1318.5px;font-weight:bold;">0</div>
<div class="tk" style="top:1343.0px;background:#4c6268;width:4px"></div>
<div class="ax" style="top:1421.8px;font-weight:bold;">0</div>
<div class="tk" style="top:1436.8px;background:#4c6268;width:4px"></div>
<div class="ax" style="top:1459.5px;">-20</div>
<div class="tk" style="top:1478.8px;background:#4c6268;width:4px"></div>
<div class="tk" style="top:1457.8px;background:#4c6268;width:4px"></div>
<div class="tk" style="top:1416.1px;background:#4c6268;width:4px"></div>
<div class="tk" style="top:1395.5px;background:#4c6268;width:4px"></div>
<div class="ax" style="top:1521.0px;font-weight:bold;">0</div>
<div class="tk" style="top:1550.9px;background:#4c6268;width:4px"></div>
<div class="tk" style="top:1139.7px;background:#d2d200"></div>
<div class="bx" style="top:1108px;color:#d2d200;width:75px;">216M</div>
<div class="tk" style="top:1370.0px;background:#3434e8"></div>
<div class="bx" style="top:1353px;color:#3434e8;width:92px;">32,401</div>
<div class="tk" style="top:1500.9px;background:#e06c6c"></div>
<div class="bx" style="top:1492px;color:#e06c6c;width:92px;">92,292</div>
<div class="tk" style="top:250.3px;background:#8400c8"></div>
<div class="bx" style="top:230px;color:#8400c8;width:92px;">327,59</div>
<div class="tk" style="top:277.7px;background:#c8d0d8"></div>
<div class="bx" style="top:264px;color:#000;width:92px;background:linear-gradient(#ffe524,#f7c40f 55%,#eeb400);border-color:#5a5a40;">305,38</div>
<div class="tk" style="top:357.6px;background:#8400c8"></div>
<div class="bx" style="top:341px;color:#8400c8;width:92px;">248,38</div>
<div class="tk" style="top:459.8px;background:#f0103a"></div>
<div class="bx" style="top:443px;color:#f0103a;width:92px;">191,19</div>
<div class="tk" style="top:506.8px;background:#8400c8"></div>
<div class="bx" style="top:489px;color:#8400c8;width:92px;">169,18</div>
<div class="tk" style="top:538.8px;background:#d2d200"></div>
<div class="bx" style="top:523px;color:#d2d200;width:92px;">156,07</div>
<div class="tk" style="top:1146.2px;background:#e06c6c"></div>
<div class="bx" style="top:1127px;color:#e06c6c;width:75px;">145M</div>
<div class="tk" style="top:1220.5px;background:#cfcfcf"></div>
<div class="bx" style="top:1204px;color:#cfcfcf;width:92px;">74,758</div>
<div class="tk" style="top:1379.0px;background:#e06c6c"></div>
<div class="bx" style="top:1374px;color:#e06c6c;width:92px;">28,065</div>
<div class="tk" style="top:1427.8px;background:#4fd34f"></div>
<div class="bx" style="top:1411px;color:#4fd34f;width:92px;">4,3359</div>
<div class="tk" style="top:1501.5px;background:#d8d8d8"></div>
<div class="bx" style="top:1502px;color:#d8d8d8;width:92px;">91,249</div>
<div class="yr" style="left:133.4px">2018</div>
<div class="yr" style="left:292.3px">2019</div>
<div class="yr" style="left:447.4px">2020</div>
<div class="yr" style="left:603.3px">2021</div>
<div class="yr" style="left:759.5px">2022</div>
<div class="yr" style="left:914.7px">2023</div>
<div class="yr" style="left:1070.6px">2024</div>
<div class="yr" style="left:1229.5px">2025</div>
<div class="yr" style="left:1384.6px">2026</div>
<div class="yr" style="left:1540.5px">2027</div>
<div class="yr" style="left:1696.5px">2028</div>
<div class="yr" style="left:1851.6px">2029</div>
<div class="yr" style="left:2010.5px">2030</div>
<div class="yr" style="left:2166.4px">2031</div>
<div style="left:0;top:1599px;width:2400px;height:1px;background:#46575a"></div>
</body></html>
